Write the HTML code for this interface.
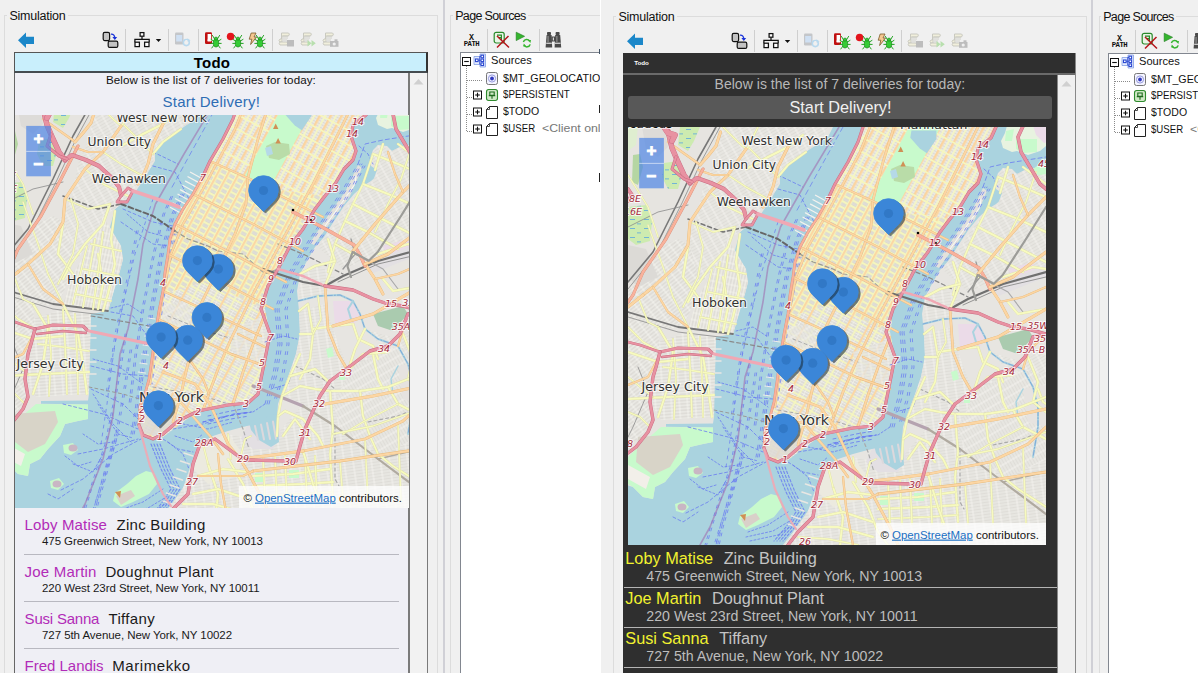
<!DOCTYPE html>
<html><head><meta charset="utf-8"><title>Simulation</title><style>
html,body{margin:0;padding:0}
body{width:1198px;height:673px;overflow:hidden;background:#f0f0f0;font-family:"Liberation Sans",sans-serif;position:relative;color:#000}
.a{position:absolute}
.t{position:absolute;white-space:nowrap;line-height:1}
.ui{font-family:"Liberation Sans",sans-serif;font-size:12.5px;color:#111}
.ln{position:absolute;background:#dcdcdc}
</style></head>
<body>
<div class="a" style="left:0;top:0;width:600px;height:673px;overflow:hidden">
<div class="a" style="left:4px;top:15px;width:434px;height:670px;background:transparent;border:1px solid #dcdcdc;box-sizing:border-box"></div>
<div class="a" style="left:7px;top:10px;width:61px;height:12px;background:#f0f0f0;"></div>
<div class="t " style="left:9.4px;top:10px;font-size:12.5px;color:#111;letter-spacing:-0.236px;">Simulation</div>
<div class="a" style="left:443px;top:0px;width:2px;height:673px;background:#d0d0d6;"></div>
<div class="a" style="left:450px;top:15px;width:160px;height:670px;background:transparent;border:1px solid #dcdcdc;box-sizing:border-box"></div>
<div class="a" style="left:453px;top:10px;width:75px;height:12px;background:#f0f0f0;"></div>
<div class="t " style="left:455.2px;top:10px;font-size:12.5px;color:#111;letter-spacing:-0.669px;">Page Sources</div>
<svg class="a" style="left:18px;top:32px;overflow:visible" width="17" height="17" viewBox="0 0 17 17" ><path d="M0,8.2 L8,0.5 L8,4.8 L16,4.8 L16,12 L8,12 L8,16 Z" fill="#1b87c9"/></svg>
<svg class="a" style="left:102px;top:31px;overflow:visible" width="17" height="17" viewBox="0 0 17 17" ><rect x="1.2" y="1.4" width="6.4" height="8.2" rx="1.5" fill="#c3c3c3" stroke="#111" stroke-width="1.2"/><rect x="6.2" y="10.2" width="9.6" height="6.2" rx="1.5" fill="#c3c3c3" stroke="#111" stroke-width="1.2"/><path d="M9,3.2 Q12.8,3 12.8,7.5" fill="none" stroke="#1a33d8" stroke-width="1.3"/><path d="M10.4,6 L12.8,9 L15.2,6 Z" fill="#1a33d8"/></svg>
<div class="a" style="left:125px;top:29px;width:1px;height:22px;background:#cfcfcf"></div>
<svg class="a" style="left:133px;top:31px;overflow:visible" width="30" height="17" viewBox="0 0 30 17" ><g fill="#fff" stroke="#111" stroke-width="1.25"><path d="M9,5.2 V8.3 M1.9,11.2 V8.3 H16.2 V11.2" fill="none"/><rect x="7.1" y="1.6" width="3.8" height="3.6"/><rect x="2" y="11.2" width="4.4" height="4.4"/><rect x="11.6" y="11.2" width="4.4" height="4.4"/></g><path d="M22.8,8 L28.2,8 L25.5,11 Z" fill="#111"/></svg>
<div class="a" style="left:168px;top:29px;width:1px;height:22px;background:#cfcfcf"></div>
<svg class="a" style="left:174px;top:31px;overflow:visible" width="18" height="17" viewBox="0 0 18 17" ><rect x="1" y="1.5" width="8.5" height="12" rx="1.2" fill="#c4c6c9"/><rect x="2.2" y="4" width="6" height="6.5" fill="#cfe0f3"/><circle cx="12.3" cy="11.6" r="3" fill="none" stroke="#b9d9ee" stroke-width="1.6"/><path d="M13.5,7.2 L16.6,9.5 L13,10.6Z" fill="#b9d9ee"/><rect x="11.4" y="9" width="2" height="2" fill="#f0f0f0"/></svg>
<div class="a" style="left:198px;top:29px;width:1px;height:22px;background:#cfcfcf"></div>
<svg class="a" style="left:204px;top:31px;overflow:visible" width="18" height="17" viewBox="0 0 18 17" ><rect x="1" y="1.2" width="7" height="11.8" rx="1.3" fill="#c01010"/><rect x="3.6" y="3" width="3.6" height="7.5" fill="#fff"/><rect x="3.6" y="8.4" width="4" height="1.6" fill="#fff"/><g stroke="#18a018" stroke-width="0.95" fill="none" stroke-linecap="round"><path d="M10.4,7.6 L8.4,4.4 M13.6,7.6 L15.6,4.4"/><path d="M9.6,10 L7,8.4 M14.4,10 L17,8.4"/><path d="M9.4,12.4 L6.8,12.4 M14.6,12.4 L17.2,12.4"/><path d="M9.8,14.4 L7.8,17 M14.2,14.4 L16.2,17"/></g><ellipse cx="12" cy="11.9" rx="2.7" ry="4.1" fill="#35cc35" stroke="#0c7a0c" stroke-width="0.6"/><circle cx="12" cy="7.6" r="1.6" fill="#35cc35" stroke="#0c7a0c" stroke-width="0.5"/></svg>
<svg class="a" style="left:226px;top:31px;overflow:visible" width="18" height="17" viewBox="0 0 18 17" ><circle cx="4.6" cy="5.5" r="3.8" fill="#e3141c"/><g stroke="#18a018" stroke-width="0.95" fill="none" stroke-linecap="round"><path d="M10.4,7.6 L8.4,4.4 M13.6,7.6 L15.6,4.4"/><path d="M9.6,10 L7,8.4 M14.4,10 L17,8.4"/><path d="M9.4,12.4 L6.8,12.4 M14.6,12.4 L17.2,12.4"/><path d="M9.8,14.4 L7.8,17 M14.2,14.4 L16.2,17"/></g><ellipse cx="12" cy="11.9" rx="2.7" ry="4.1" fill="#35cc35" stroke="#0c7a0c" stroke-width="0.6"/><circle cx="12" cy="7.6" r="1.6" fill="#35cc35" stroke="#0c7a0c" stroke-width="0.5"/></svg>
<svg class="a" style="left:248px;top:31px;overflow:visible" width="18" height="17" viewBox="0 0 18 17" ><path d="M3.2,2 L8,2 L6,6 L8.6,6 L2.6,13.5 L3.8,8.2 L1.2,8.2 Z" fill="#f6c891" stroke="#7a5a2a" stroke-width="0.8"/><g stroke="#18a018" stroke-width="0.95" fill="none" stroke-linecap="round"><path d="M10.4,7.6 L8.4,4.4 M13.6,7.6 L15.6,4.4"/><path d="M9.6,10 L7,8.4 M14.4,10 L17,8.4"/><path d="M9.4,12.4 L6.8,12.4 M14.6,12.4 L17.2,12.4"/><path d="M9.8,14.4 L7.8,17 M14.2,14.4 L16.2,17"/></g><ellipse cx="12" cy="11.9" rx="2.7" ry="4.1" fill="#35cc35" stroke="#0c7a0c" stroke-width="0.6"/><circle cx="12" cy="7.6" r="1.6" fill="#35cc35" stroke="#0c7a0c" stroke-width="0.5"/></svg>
<div class="a" style="left:272px;top:29px;width:1px;height:22px;background:#cfcfcf"></div>
<svg class="a" style="left:278px;top:31px;overflow:visible" width="18" height="17" viewBox="0 0 18 17" ><path d="M3.5,2.0 h7 q1.8,0.6 0,3 h-6.5 v6 h-2 q-2,-1.2 0,-3 h1.5 z" fill="#f1efdc" stroke="#c9c9c0" stroke-width="1"/><path d="M2,11.0 h7 q1.5,1.5 0,3 h-7 q-1.6,-1.5 0,-3z" fill="#f1efdc" stroke="#c9c9c0" stroke-width="1"/><path d="M5,5.0h5 M5,7.0h5 M5,9.0h4" stroke="#c9c9c0" stroke-width="0.8"/><rect x="9" y="9" width="7" height="6.5" fill="#bdbdbd"/></svg>
<svg class="a" style="left:300px;top:31px;overflow:visible" width="18" height="17" viewBox="0 0 18 17" ><path d="M3.5,2.0 h7 q1.8,0.6 0,3 h-6.5 v6 h-2 q-2,-1.2 0,-3 h1.5 z" fill="#f1efdc" stroke="#c9c9c0" stroke-width="1"/><path d="M2,11.0 h7 q1.5,1.5 0,3 h-7 q-1.6,-1.5 0,-3z" fill="#f1efdc" stroke="#c9c9c0" stroke-width="1"/><path d="M5,5.0h5 M5,7.0h5 M5,9.0h4" stroke="#c9c9c0" stroke-width="0.8"/><path d="M7.5,9 L11.5,12.2 L7.5,15.5Z M11.5,9 L15.8,12.2 L11.5,15.5Z" fill="#b8dfae"/></svg>
<svg class="a" style="left:322px;top:31px;overflow:visible" width="18" height="17" viewBox="0 0 18 17" ><path d="M3.5,2.0 h7 q1.8,0.6 0,3 h-6.5 v6 h-2 q-2,-1.2 0,-3 h1.5 z" fill="#f1efdc" stroke="#c9c9c0" stroke-width="1"/><path d="M2,11.0 h7 q1.5,1.5 0,3 h-7 q-1.6,-1.5 0,-3z" fill="#f1efdc" stroke="#c9c9c0" stroke-width="1"/><path d="M5,5.0h5 M5,7.0h5 M5,9.0h4" stroke="#c9c9c0" stroke-width="0.8"/><rect x="8" y="10" width="8.5" height="5.8" fill="#bdbdbd"/><rect x="12.5" y="8.3" width="3" height="2" fill="#bdbdbd"/><circle cx="12.2" cy="13" r="1.6" fill="#f0f0f0"/></svg>
<div class="t" style="left:469px;top:34px;font-family:'Liberation Mono',monospace;font-weight:bold;font-size:8.3px;color:#111">X</div>
<div class="t" style="left:463.8px;top:41px;font-family:'Liberation Mono',monospace;font-weight:bold;font-size:7.3px;color:#111;letter-spacing:-0.58px">PATH</div>
<div class="a" style="left:487px;top:29px;width:1px;height:22px;background:#cfcfcf"></div>
<svg class="a" style="left:493px;top:31px;overflow:visible" width="18" height="17" viewBox="0 0 18 17" ><rect x="1.2" y="1.4" width="10" height="10.6" rx="2" fill="#eaf5e6" stroke="#2a8a2a" stroke-width="1.2"/><path d="M4,4.2 H8.4 V9 M5.8,6.6 H8.4" fill="none" stroke="#2a8a2a" stroke-width="1.2"/><path d="M4,5 L16,16.5 M15.5,5 L4,16.5" stroke="#b4151b" stroke-width="1.5" fill="none"/></svg>
<svg class="a" style="left:515px;top:31px;overflow:visible" width="18" height="17" viewBox="0 0 18 17" ><path d="M1.2,1.2 L9.6,5.3 L1.2,9.6 Z" fill="#35b52e" stroke="#1d7a1d" stroke-width="0.6"/><path d="M8.4,11 A3.4,3.4 0 0 1 14.6,10.2" fill="none" stroke="#35b52e" stroke-width="1.5"/><path d="M15.2,13.4 A3.4,3.4 0 0 1 9,14.2" fill="none" stroke="#35b52e" stroke-width="1.5"/><path d="M13,9.2 L16,9 L15.4,12Z M11.2,15.2 L8.2,15.4 L8.8,12.4Z" fill="#35b52e"/></svg>
<div class="a" style="left:539px;top:29px;width:1px;height:22px;background:#cfcfcf"></div>
<div class="a" style="left:545px;top:31px;width:17px;height:18px;overflow:hidden"><svg width="17" height="18" viewBox="0 0 17 18"><g fill="#4a4a4a"><rect x="2" y="1" width="4" height="3" rx="0.8"/><rect x="10.6" y="1" width="4" height="3" rx="0.8"/><path d="M1.6,4 H6.6 L7.2,16.6 H0.6 Z"/><path d="M10.2,4 H15.2 L16.2,16.6 H9.6 Z"/><rect x="6.4" y="5.5" width="4" height="5" /></g><rect x="1.2" y="11.6" width="5.6" height="1.4" fill="#c8c8c8"/><rect x="10" y="11.6" width="5.6" height="1.4" fill="#c8c8c8"/><rect x="2.4" y="5" width="1.3" height="6" fill="#8a8a8a"/><rect x="11.2" y="5" width="1.3" height="6" fill="#8a8a8a"/><rect x="7.8" y="6.5" width="1.2" height="3" fill="#d8d8d8"/></svg></div>
<div class="a" style="left:14px;top:52px;width:414px;height:21px;background:#c9effc;border:1px solid #555;border-bottom:2px solid #454c50;box-sizing:border-box;border-right:2px solid #333"></div>
<div class="t " style="left:193.7px;top:55px;font-size:15px;color:#000;letter-spacing:0.265px;font-weight:700;">Todo</div>
<div class="a" style="left:14px;top:73px;width:396px;height:600px;background:#efeff5;border-left:1px solid #666;border-right:2px solid #7a7a7a;box-sizing:border-box"></div>
<div class="a" style="left:410px;top:73px;width:18px;height:600px;background:#f2f2f2;border-right:1px solid #7a7a7a;box-sizing:border-box"></div>
<svg class="a" style="left:413px;top:78px" width="11" height="7"><path d="M0.5,6.5 L5.5,1 L10.5,6.5Z" fill="#d0d0d0"/></svg>
<div class="t " style="left:106px;top:74px;font-size:11.6px;color:#111;letter-spacing:0.084px;">Below is the list of 7 deliveries for today:</div>
<div class="t " style="left:162.6px;top:94px;font-size:15px;color:#2e6db4;letter-spacing:0.227px;">Start Delivery!</div>
<div class="a" style="left:15px;top:115px;width:394px;height:393px;overflow:hidden"><svg width="394" height="393" viewBox="12 11 394 393" font-family="DejaVu Sans, Liberation Sans, sans-serif" style="display:block"><defs>
<pattern id="gma" width="9.6" height="2.8" patternUnits="userSpaceOnUse" patternTransform="rotate(28.5) translate(4.5,2)">
<rect width="9.6" height="2.8" fill="#f7f6ee"/>
<rect x="2.4" y="0.5" width="2.9" height="1.8" fill="#dcdad4"/>
<rect x="6.7" y="0.5" width="2.8" height="1.8" fill="#dcdad4"/>
<rect x="5.2" y="0" width="1.6" height="2.8" fill="#f6f7be"/>
<rect x="0" y="0" width="2.5" height="2.8" fill="#fbd5a0"/>
</pattern>
<pattern id="gmma" width="9.4" height="5.6" patternUnits="userSpaceOnUse" patternTransform="rotate(28.5) translate(4.5,2)">
<rect width="9.4" height="5.6" fill="#f5f6bd"/>
<rect x="3.1" y="1.2" width="5.3" height="3.3" fill="#d9d7d1"/><rect x="3.1" y="2.6" width="5.3" height="0.5" fill="#ecebe6"/>
<rect x="0" y="0" width="2.1" height="5.6" fill="#fbd7a4"/>
</pattern>
<pattern id="gm2a" width="18.8" height="8.4" patternUnits="userSpaceOnUse" patternTransform="rotate(28.5) translate(4.5,2)">
<rect width="18.8" height="8.4" fill="#dedcd6"/>
<rect x="0" y="2.9" width="18.8" height="0.6" fill="#f6f5f0"/><rect x="0" y="5.7" width="18.8" height="0.6" fill="#f6f5f0"/>
<rect x="4.7" y="0" width="0.6" height="8.4" fill="#f6f5f0"/><rect x="14.1" y="0" width="0.6" height="8.4" fill="#f6f5f0"/>
<rect x="0" y="0" width="18.8" height="1.6" fill="#f6f7be"/>
<rect x="9.4" y="0" width="1.8" height="8.4" fill="#f6f7be"/>
<rect x="0" y="0" width="2.1" height="8.4" fill="#fbd7a4"/>
</pattern>
<pattern id="gqa" width="8" height="3" patternUnits="userSpaceOnUse" patternTransform="rotate(-30)">
<rect width="8" height="3" fill="#f8f7f3"/>
<rect x="0.4" y="0.35" width="7.2" height="2.3" fill="#dfddd8"/>
</pattern>
<pattern id="gba" width="9" height="3" patternUnits="userSpaceOnUse" patternTransform="rotate(-8)">
<rect width="9" height="3" fill="#f8f7f3"/>
<rect x="0.4" y="0.35" width="8.2" height="2.3" fill="#dfddd8"/>
</pattern>
<pattern id="gwa" width="8" height="3" patternUnits="userSpaceOnUse" patternTransform="rotate(60)">
<rect width="8" height="3" fill="#f8f7f3"/>
<rect x="0.4" y="0.35" width="7.2" height="2.3" fill="#dfddd8"/>
</pattern>
<pattern id="gja" width="8" height="3.2" patternUnits="userSpaceOnUse" patternTransform="rotate(-4)">
<rect width="8" height="3.2" fill="#f8f7f3"/>
<rect x="0.4" y="0.35" width="7.2" height="2.5" fill="#dfddd8"/>
</pattern>
<pattern id="gjwa" width="8" height="3.2" patternUnits="userSpaceOnUse" patternTransform="rotate(-38)">
<rect width="8" height="3.2" fill="#f8f7f3"/>
<rect x="0.4" y="0.35" width="7.2" height="2.5" fill="#dfddd8"/>
</pattern>
<pattern id="gha" width="7" height="3.2" patternUnits="userSpaceOnUse" patternTransform="rotate(102)">
<rect width="7" height="3.2" fill="#f8f7f0"/>
<rect x="0.4" y="0.4" width="6.2" height="2.4" fill="#e0ded8"/>
</pattern>
<pattern id="weta" width="14" height="9" patternUnits="userSpaceOnUse">
<rect width="14" height="9" fill="#cdebb0"/>
<rect x="2" y="2" width="5" height="0.8" fill="#5aa7e0"/>
<rect x="9" y="6.5" width="4" height="0.8" fill="#5aa7e0"/>
</pattern>
</defs>
<rect x="-5" y="-5" width="430" height="430" fill="#aad3df"/>
<polygon points="-5,-5 205,-5 205,0 200,10 190,17 175,25 162,35 152,45 152,57 147,65 143,72 133,87 120,99 112,105 107,123 107,125 110,132 117,140 120,155 117,167 112,182 107,200 105,207 88,210 86,225 86,242 85,260 86,280 86,290 85,296.5 38,297 38,299.8 85,300.5 85,315 75,317 62,320 57,332 45,345 37,355 27,360 25,372 15,370 5,360 -5,357" fill="#e6e4e0" />
<polygon points="85,0 200,0 190,17 162,35 152,45 150,60 140,75 125,92 112,105 100,112 88,140 70,160 50,190 30,200 20,175 50,130 68,95 75,60 88,30" fill="url(#gqa)" />
<polygon points="88,140 100,112 108,125 118,142 120,155 116,170 110,190 105,207 80,205 60,200 70,170" fill="url(#gha)" />
<polygon points="30,215 60,205 88,210 86,290 33,293 25,280 23,250" fill="url(#gja)" />
<polygon points="0,205 30,200 32,225 23,260 25,293 10,312 0,318" fill="url(#gjwa)" />
<polygon points="28,122 50,112 62,118 70,150 62,185 55,200 30,203 0,215 0,165" fill="url(#gjwa)" />
<polygon points="52,0 72,0 66,14 60,24 50,18" fill="url(#weta)" />
<polygon points="36,36 50,34 54,48 50,62 40,62 34,50" fill="url(#weta)" />
<polygon points="0,80 18,78 24,95 22,114 8,118 0,112" fill="url(#weta)" />
<polygon points="5,28 12,27 15,40 10,58 4,55" fill="#b5d6a3" />
<polygon points="0,0 10,0 8,18 0,24" fill="#dfeed0" />
<polygon points="0,118 18,122 30,150 10,160 0,150" fill="#dcdad6" />
<polygon points="14,0 36,0 40,20 30,30 18,22" fill="#dddbd8" />
<polygon points="33,300 85,300.5 85,315 75,317 62,320 57,332 45,345 37,355 27,360 25,372 15,370 5,360 0,357 0,330 10,320" fill="#c8facc" />
<polygon points="10,310 52,307 55,318 42,340 25,348 8,335" fill="#d8d4c8" />
<polygon points="0,338 22,350 18,362 0,352" fill="#f2efe9" />
<polygon points="60,341 70,339 75,346 68,351 61,349" fill="#c8facc" />
<ellipse cx="70" cy="344" rx="4.5" ry="3.5" fill="#c9b6c4"/>
<polygon points="47,377 56,374 61,380 55,386 48,384" fill="#c8facc" />
<ellipse cx="54" cy="380" rx="4.5" ry="3.5" fill="#c9b6c4"/>
<polygon points="133,372 143,367 151,369 154,380 146,390 130,398 118,403 110,397 112,389 124,380" fill="#c8facc" />
<polygon points="113,392 128,386 132,392 118,401" fill="#d9d0c9" />
<polygon points="112,388 118,387 117,394" fill="#d08f55" />
<polygon points="235,-5 235,0 230,15 220,35 207,57 200,72 190,90 180,105 172,120 167,135 165,150 162,168 160,187 156,207 152,232 149,255 146,275 142,290 137,300 135,320 139,331 150,336 160,333 175,317 195,307 225,301 245,299 255,290 258,275 262,255 267,230 258,205 265,182 275,165 287,142 300,125 312,105 322,92 332,80 341,65 350,56 353,47 348,32 350,21 363,11 368,0 368,-5" fill="url(#gma)" />
<polygon points="160,190 200,178 262,205 267,230 262,255 255,290 245,299 195,307 160,333 150,336 139,331 135,320 137,300 146,275 152,232" fill="url(#gm2a)" />
<polygon points="160,200 185,196 190,228 170,245 152,240" fill="url(#gwa)" opacity="0.75"/>
<polygon points="225,225 262,212 266,232 262,255 240,262 228,245" fill="url(#gba)" opacity="0.8"/>
<polygon points="140,295 160,290 175,315 160,332 140,330 136,315" fill="#dddad4" opacity="0.8"/>
<polygon points="207,57 242,71.5 266.5,84.5 322,92 312,105 300,125 287,142 275,165 265,182 262,205 200,178 160,190 165,150 172,120 190,90" fill="url(#gmma)" />
<clipPath id="cma"><polygon points="235,-5 235,0 230,15 220,35 207,57 200,72 190,90 180,105 172,120 167,135 165,150 162,168 160,187 156,207 152,232 149,255 146,275 142,290 137,300 135,320 139,331 150,336 160,333 175,317 195,307 225,301 245,299 255,290 258,275 262,255 267,230 258,205 265,182 275,165 287,142 300,125 312,105 322,92 332,80 341,65 350,56 353,47 348,32 350,21 363,11 368,0 368,-5"/></clipPath>
<g clip-path="url(#cma)"><polyline points="168.2,18.9 352.7,119.1" fill="none" stroke="#f6f7be" stroke-width="1.7" stroke-linejoin="round" stroke-linecap="round" /><polyline points="174.4,7.5 359.0,107.7" fill="none" stroke="#f6f7be" stroke-width="1.7" stroke-linejoin="round" stroke-linecap="round" /><polyline points="180.6,-3.9 365.2,96.3" fill="none" stroke="#f6f7be" stroke-width="1.7" stroke-linejoin="round" stroke-linecap="round" /><polyline points="186.8,-15.3 371.4,84.8" fill="none" stroke="#f6f7be" stroke-width="1.7" stroke-linejoin="round" stroke-linecap="round" /><polyline points="193.1,-26.7 377.7,73.4" fill="none" stroke="#f6f7be" stroke-width="1.7" stroke-linejoin="round" stroke-linecap="round" /><polyline points="199.3,-38.2 383.9,62.0" fill="none" stroke="#f6f7be" stroke-width="1.7" stroke-linejoin="round" stroke-linecap="round" /><polyline points="205.5,-49.6 390.1,50.6" fill="none" stroke="#f6f7be" stroke-width="1.7" stroke-linejoin="round" stroke-linecap="round" /></g>
<polygon points="242,71.5 266.5,84.5 315.3,-5 283.7,-5" fill="#c8facc" />
<polygon points="263,42 272,38 286,40 287,50 276,56 266,54" fill="#b9dca8" />
<polygon points="262,44 268,42 270,50 264,52" fill="#b5d9e8" />
<polygon points="283.4,3.6 308.4,3.6 308.4,11.9 298.9,26.2 291.8,21.4 282.3,10.7" fill="#aad3df" />
<polygon points="270,25 275.4,25 272.7,19.5" fill="#d08f55" />
<polygon points="272.4,39.5 277.8,39.5 275.1,34" fill="#d08f55" />
<polygon points="355,61 359,64 347,92 330,115 311,141 307,139 326,110 342,88" fill="#e4e2dc" />
<polyline points="353,72 352,80 338,100 322,122" fill="none" stroke="#ffffff" stroke-width="0.8" stroke-linejoin="round" stroke-linecap="round" />
<polygon points="380,-5 377,6 373,14 375,21 384,25 389,24 400,28 412,24 418,19 425,15 425,-5" fill="#e8f3e0" />
<polygon points="388,12 409,12 409,25 395,26 388,22" fill="#c8facc" />
<polygon points="378,4 386,2 384,14 377,14" fill="#c8facc" />
<polygon points="404,-5 425,-5 425,14 416,16 408,8" fill="#ebdbe8" />
<polygon points="425,37 418,39 409,41 397,43 389,47 384,42 375,41 370,46 367,55 368,62 374,66 375,71 368,77 360,82 351,90 341,102 331,117 321,133 312,143 305,155 297,170 294,187 296,207 297,230 293,250 287,268 279,288 275,300 274,314 270,320 262,318 258,330 248,332 244,322 236,324 225,327 210,332 195,340 190,355 186,372 180,384 172,398 163,408 155,418 150,425 425,425" fill="#e7e5e1" />
<polygon points="425,37 397,43 389,47 375,41 367,55 374,66 370,77 354,90 344,102 372,115 400,95 425,88" fill="url(#gqa)" />
<polygon points="344,102 372,115 400,95 425,88 425,140 380,150 340,165 315,143 334,117" fill="url(#gqa)" />
<polygon points="297,170 315,160 335,175 322,190 296,197" fill="url(#gba)" />
<polygon points="296,207 322,200 330,225 345,265 320,292 300,300 279,290 293,250 297,230" fill="url(#gba)" />
<polygon points="300,300 320,292 345,265 375,240 418,250 425,260 425,425 150,425 163,408 180,384 190,355 197,340 225,330 250,335 274,330" fill="url(#gba)" />
<polygon points="350,262 395,243 425,250 425,330 380,350 340,330 330,300" fill="url(#gwa)" />
<polygon points="362,225 395,235 425,215 425,250 395,243 375,238" fill="url(#gqa)" />
<polygon points="330,197 350,197 357,212 350,222 332,222" fill="#ebdbe8" />
<polygon points="380,142 405,135 410,152 388,160" fill="#ebdbe8" />
<polygon points="370,210 400,202 405,210 390,227 375,222" fill="#aacbaf" />
<polygon points="362,160 418,138 418,150 368,170" fill="#e3e0e3" />
<polygon points="395,262 418,258 418,300 400,295" fill="#e6e3e0" />
<polygon points="244,322 262,318 270,320 274,314 278,330 270,345 250,345 238,335" fill="#e3dfe3" />
<polygon points="246,318 274,310 276,338 268,343 256,336 248,326" fill="#aad3df" />
<polyline points="252,322.0 255,336.0" fill="none" stroke="#dcd8dc" stroke-width="2" stroke-linejoin="round" stroke-linecap="round" />
<polyline points="258,320.5 261,335.5" fill="none" stroke="#dcd8dc" stroke-width="2" stroke-linejoin="round" stroke-linecap="round" />
<polyline points="264,319.0 267,335.0" fill="none" stroke="#dcd8dc" stroke-width="2" stroke-linejoin="round" stroke-linecap="round" />
<polyline points="270,317.5 273,334.5" fill="none" stroke="#dcd8dc" stroke-width="2" stroke-linejoin="round" stroke-linecap="round" />
<polygon points="195,340 225,330 240,350 235,372 205,380 190,365" fill="#eceadf" />
<polygon points="252,369 262,369 262,378 252,378" fill="#c8facc" />
<polygon points="286,366 296,366 296,374 286,374" fill="#c8facc" />
<polygon points="336,268 342,268 342,276 336,276" fill="#c8facc" />
<polygon points="323,245 329,243 331,252 325,254" fill="#c8facc" />
<polygon points="409,39 425,36 425,46 412,48 400,46" fill="#c8facc" />
<polyline points="178.0,90 168.0,112 157.0,150 148.0,200 140.0,250 133.0,300 128.0,330" fill="none" stroke="#6a7df0" stroke-width="0.9" stroke-linejoin="round" stroke-linecap="round" stroke-dasharray="3.5 5.5" stroke-dashoffset="0" stroke-linecap="butt" opacity="0.85"/>
<polyline points="179.6,90 169.6,112 158.6,150 149.6,200 141.6,250 134.6,300 129.6,330" fill="none" stroke="#6a7df0" stroke-width="0.9" stroke-linejoin="round" stroke-linecap="round" stroke-dasharray="3.5 5.5" stroke-dashoffset="0" stroke-linecap="butt" opacity="0.85"/>
<polyline points="181.2,90 171.2,112 160.2,150 151.2,200 143.2,250 136.2,300 131.2,330" fill="none" stroke="#6a7df0" stroke-width="0.9" stroke-linejoin="round" stroke-linecap="round" stroke-dasharray="3.5 5.5" stroke-dashoffset="0" stroke-linecap="butt" opacity="0.85"/>
<polyline points="170.0,88 160.0,110 150.0,150 140.0,200 132.0,250 126.0,300" fill="none" stroke="#6a7df0" stroke-width="0.9" stroke-linejoin="round" stroke-linecap="round" stroke-dasharray="3.5 5.5" stroke-dashoffset="4" stroke-linecap="butt" opacity="0.85"/>
<polyline points="171.6,88 161.6,110 151.6,150 141.6,200 133.6,250 127.6,300" fill="none" stroke="#6a7df0" stroke-width="0.9" stroke-linejoin="round" stroke-linecap="round" stroke-dasharray="3.5 5.5" stroke-dashoffset="4" stroke-linecap="butt" opacity="0.85"/>
<polyline points="170.0,130 160.0,180 153.0,230 146.0,280" fill="none" stroke="#6a7df0" stroke-width="0.9" stroke-linejoin="round" stroke-linecap="round" stroke-dasharray="3 6" stroke-dashoffset="2" stroke-linecap="butt" opacity="0.85"/>
<polyline points="171.5,130 161.5,180 154.5,230 147.5,280" fill="none" stroke="#6a7df0" stroke-width="0.9" stroke-linejoin="round" stroke-linecap="round" stroke-dasharray="3 6" stroke-dashoffset="2" stroke-linecap="butt" opacity="0.85"/>
<polyline points="173.0,130 163.0,180 156.0,230 149.0,280" fill="none" stroke="#6a7df0" stroke-width="0.9" stroke-linejoin="round" stroke-linecap="round" stroke-dasharray="3 6" stroke-dashoffset="2" stroke-linecap="butt" opacity="0.85"/>
<polyline points="150.0,95 132.0,150 120.0,200 110.0,250 104.0,300 98.0,340" fill="none" stroke="#6a7df0" stroke-width="0.9" stroke-linejoin="round" stroke-linecap="round" stroke-dasharray="3 5" stroke-dashoffset="0" stroke-linecap="butt" opacity="0.85"/>
<polyline points="135.0,120 125.0,170 112.0,230 103.0,290" fill="none" stroke="#6a7df0" stroke-width="0.9" stroke-linejoin="round" stroke-linecap="round" stroke-dasharray="3 7" stroke-dashoffset="3" stroke-linecap="butt" opacity="0.85"/>
<polyline points="136.6,120 126.6,170 113.6,230 104.6,290" fill="none" stroke="#6a7df0" stroke-width="0.9" stroke-linejoin="round" stroke-linecap="round" stroke-dasharray="3 7" stroke-dashoffset="3" stroke-linecap="butt" opacity="0.85"/>
<polyline points="122.0,230 112.0,290 102.0,340 87.0,385 77.0,418" fill="none" stroke="#6a7df0" stroke-width="0.9" stroke-linejoin="round" stroke-linecap="round" stroke-dasharray="3 5" stroke-dashoffset="0" stroke-linecap="butt" opacity="0.85"/>
<polyline points="123.6,230 113.6,290 103.6,340 88.6,385 78.6,418" fill="none" stroke="#6a7df0" stroke-width="0.9" stroke-linejoin="round" stroke-linecap="round" stroke-dasharray="3 5" stroke-dashoffset="0" stroke-linecap="butt" opacity="0.85"/>
<polyline points="128.0,240 120.0,290 112.0,335 98.0,380 86.0,418" fill="none" stroke="#6a7df0" stroke-width="0.9" stroke-linejoin="round" stroke-linecap="round" stroke-dasharray="3 6" stroke-dashoffset="3" stroke-linecap="butt" opacity="0.85"/>
<polyline points="129.6,240 121.6,290 113.6,335 99.6,380 87.6,418" fill="none" stroke="#6a7df0" stroke-width="0.9" stroke-linejoin="round" stroke-linecap="round" stroke-dasharray="3 6" stroke-dashoffset="3" stroke-linecap="butt" opacity="0.85"/>
<polyline points="112.0,330 102.0,365 92.0,400 88.0,418" fill="none" stroke="#6a7df0" stroke-width="0.9" stroke-linejoin="round" stroke-linecap="round" stroke-dasharray="3 5" stroke-dashoffset="1" stroke-linecap="butt" opacity="0.85"/>
<polyline points="113.6,330 103.6,365 93.6,400 89.6,418" fill="none" stroke="#6a7df0" stroke-width="0.9" stroke-linejoin="round" stroke-linecap="round" stroke-dasharray="3 5" stroke-dashoffset="1" stroke-linecap="butt" opacity="0.85"/>
<polyline points="115.2,330 105.2,365 95.2,400 91.2,418" fill="none" stroke="#6a7df0" stroke-width="0.9" stroke-linejoin="round" stroke-linecap="round" stroke-dasharray="3 5" stroke-dashoffset="1" stroke-linecap="butt" opacity="0.85"/>
<polyline points="150,62 172,68 186,95" fill="none" stroke="#6a7df0" stroke-width="0.9" stroke-linejoin="round" stroke-linecap="round" stroke-dasharray="3 2.5" opacity="0.9"/>
<polyline points="150,48 175,60" fill="none" stroke="#6a7df0" stroke-width="0.9" stroke-linejoin="round" stroke-linecap="round" stroke-dasharray="3 2.5" opacity="0.9"/>
<polyline points="215,0 190,45 168,85" fill="none" stroke="#6a7df0" stroke-width="0.8" stroke-linejoin="round" stroke-linecap="round" stroke-dasharray="5 4" opacity="0.9"/>
<polyline points="120,105 150,118 170,122" fill="none" stroke="#6a7df0" stroke-width="0.9" stroke-linejoin="round" stroke-linecap="round" stroke-dasharray="3 2.5" opacity="0.9"/>
<polyline points="118,118 150,140 166,142" fill="none" stroke="#6a7df0" stroke-width="0.9" stroke-linejoin="round" stroke-linecap="round" stroke-dasharray="3 2.5" opacity="0.9"/>
<polyline points="124,110 145,128 160,132" fill="none" stroke="#6a7df0" stroke-width="0.9" stroke-linejoin="round" stroke-linecap="round" stroke-dasharray="2 2" opacity="0.9"/>
<polyline points="108,208 130,212 150,240" fill="none" stroke="#6a7df0" stroke-width="0.9" stroke-linejoin="round" stroke-linecap="round" stroke-dasharray="3 2.5" opacity="0.9"/>
<polyline points="88,262 120,270 145,272" fill="none" stroke="#6a7df0" stroke-width="0.9" stroke-linejoin="round" stroke-linecap="round" stroke-dasharray="3 2.5" opacity="0.9"/>
<polyline points="108,204 125,200 140,210" fill="none" stroke="#6a7df0" stroke-width="0.9" stroke-linejoin="round" stroke-linecap="round" stroke-dasharray="2 2" opacity="0.9"/>
<polyline points="88,285 120,300 138,318" fill="none" stroke="#6a7df0" stroke-width="0.9" stroke-linejoin="round" stroke-linecap="round" stroke-dasharray="3 2.5" opacity="0.9"/>
<polyline points="60,300 100,310 135,325" fill="none" stroke="#6a7df0" stroke-width="0.9" stroke-linejoin="round" stroke-linecap="round" stroke-dasharray="3 2.5" opacity="0.9"/>
<polyline points="90,255 115,262 140,280" fill="none" stroke="#6a7df0" stroke-width="0.9" stroke-linejoin="round" stroke-linecap="round" stroke-dasharray="2 2" opacity="0.9"/>
<polyline points="75,350 100,345 135,335" fill="none" stroke="#6a7df0" stroke-width="0.9" stroke-linejoin="round" stroke-linecap="round" stroke-dasharray="3 2.5" opacity="0.9"/>
<polyline points="58,386 80,375 110,350 138,335" fill="none" stroke="#6a7df0" stroke-width="0.9" stroke-linejoin="round" stroke-linecap="round" stroke-dasharray="3 2.5" opacity="0.9"/>
<polyline points="45,390 55,395 70,385" fill="none" stroke="#6a7df0" stroke-width="0.9" stroke-linejoin="round" stroke-linecap="round" stroke-dasharray="3 2.5" opacity="0.9"/>
<polyline points="95,300 115,330 130,334" fill="none" stroke="#6a7df0" stroke-width="0.9" stroke-linejoin="round" stroke-linecap="round" stroke-dasharray="2 2" opacity="0.9"/>
<polyline points="90,290 110,320 128,338" fill="none" stroke="#6a7df0" stroke-width="0.9" stroke-linejoin="round" stroke-linecap="round" stroke-dasharray="2 2" opacity="0.9"/>
<polyline points="80,330 95,340 110,338" fill="none" stroke="#6a7df0" stroke-width="0.9" stroke-linejoin="round" stroke-linecap="round" stroke-dasharray="2 2" opacity="0.9"/>
<polyline points="70,360 90,368 100,350" fill="none" stroke="#6a7df0" stroke-width="0.9" stroke-linejoin="round" stroke-linecap="round" stroke-dasharray="2 2" opacity="0.9"/>
<polyline points="62,352 75,362 88,358" fill="none" stroke="#6a7df0" stroke-width="0.9" stroke-linejoin="round" stroke-linecap="round" stroke-dasharray="2 2" opacity="0.9"/>
<polyline points="148.0,340 158.0,365 168.0,385 158.0,400 146.0,414" fill="none" stroke="#6a7df0" stroke-width="1.1" stroke-linejoin="round" stroke-linecap="round" stroke-dasharray="2.5 2" stroke-dashoffset="0" stroke-linecap="butt" opacity="0.85"/>
<polyline points="151.0,340 161.0,365 171.0,385 161.0,400 149.0,414" fill="none" stroke="#6a7df0" stroke-width="1.1" stroke-linejoin="round" stroke-linecap="round" stroke-dasharray="2.5 2" stroke-dashoffset="0" stroke-linecap="butt" opacity="0.85"/>
<polyline points="154.0,340 164.0,365 174.0,385 164.0,400 152.0,414" fill="none" stroke="#6a7df0" stroke-width="1.1" stroke-linejoin="round" stroke-linecap="round" stroke-dasharray="2.5 2" stroke-dashoffset="0" stroke-linecap="butt" opacity="0.85"/>
<polyline points="157.0,340 167.0,365 177.0,385 167.0,400 155.0,414" fill="none" stroke="#6a7df0" stroke-width="1.1" stroke-linejoin="round" stroke-linecap="round" stroke-dasharray="2.5 2" stroke-dashoffset="0" stroke-linecap="butt" opacity="0.85"/>
<polyline points="120,405 140,398 160,385" fill="none" stroke="#6a7df0" stroke-width="0.9" stroke-linejoin="round" stroke-linecap="round" stroke-dasharray="2 2" opacity="0.9"/>
<polyline points="118,410 145,404 165,392" fill="none" stroke="#6a7df0" stroke-width="0.9" stroke-linejoin="round" stroke-linecap="round" stroke-dasharray="2 2" opacity="0.9"/>
<polyline points="122,414 150,408 168,396" fill="none" stroke="#6a7df0" stroke-width="0.9" stroke-linejoin="round" stroke-linecap="round" stroke-dasharray="2 2" opacity="0.9"/>
<polyline points="160,335 175,345 190,348" fill="none" stroke="#6a7df0" stroke-width="0.9" stroke-linejoin="round" stroke-linecap="round" stroke-dasharray="3 2.5" opacity="0.9"/>
<polyline points="170,325 200,320 225,312" fill="none" stroke="#6a7df0" stroke-width="0.9" stroke-linejoin="round" stroke-linecap="round" stroke-dasharray="3 2.5" opacity="0.9"/>
<polyline points="180,320 205,325 230,318" fill="none" stroke="#6a7df0" stroke-width="0.9" stroke-linejoin="round" stroke-linecap="round" stroke-dasharray="2 2" opacity="0.9"/>
<polyline points="165,338 180,350 186,365" fill="none" stroke="#6a7df0" stroke-width="0.9" stroke-linejoin="round" stroke-linecap="round" stroke-dasharray="2 2" opacity="0.9"/>
<polyline points="172,332 190,338 200,330" fill="none" stroke="#6a7df0" stroke-width="0.9" stroke-linejoin="round" stroke-linecap="round" stroke-dasharray="2 2" opacity="0.9"/>
<polyline points="200,318 225,312 248,308" fill="none" stroke="#6a7df0" stroke-width="0.9" stroke-linejoin="round" stroke-linecap="round" stroke-dasharray="3 4" stroke-dashoffset="0" stroke-linecap="butt" opacity="0.85"/>
<polyline points="200,318 225,312 248,308" fill="none" stroke="#6a7df0" stroke-width="0.9" stroke-linejoin="round" stroke-linecap="round" stroke-dasharray="3 4" stroke-dashoffset="0" stroke-linecap="butt" opacity="0.85"/>
<polyline points="200,318 225,312 248,308" fill="none" stroke="#6a7df0" stroke-width="0.9" stroke-linejoin="round" stroke-linecap="round" stroke-dasharray="3 4" stroke-dashoffset="0" stroke-linecap="butt" opacity="0.85"/>
<polyline points="205,312 228,307 246,304" fill="none" stroke="#6a7df0" stroke-width="1" stroke-linejoin="round" stroke-linecap="round" stroke-dasharray="3 3" stroke-dashoffset="0" stroke-linecap="butt" opacity="0.85"/>
<polyline points="205,316 228,311 246,308" fill="none" stroke="#6a7df0" stroke-width="1" stroke-linejoin="round" stroke-linecap="round" stroke-dasharray="3 3" stroke-dashoffset="0" stroke-linecap="butt" opacity="0.85"/>
<polyline points="205,320 228,315 246,312" fill="none" stroke="#6a7df0" stroke-width="1" stroke-linejoin="round" stroke-linecap="round" stroke-dasharray="3 3" stroke-dashoffset="0" stroke-linecap="butt" opacity="0.85"/>
<polyline points="262,300 270,270 275,240 272,205 285,170 300,145 320,115 340,85 355,60" fill="none" stroke="#6a7df0" stroke-width="0.9" stroke-linejoin="round" stroke-linecap="round" stroke-dasharray="3.5 5" stroke-dashoffset="0" stroke-linecap="butt" opacity="0.85"/>
<polyline points="264,300 272,270 277,240 274,205 287,170 302,145 322,115 342,85 357,60" fill="none" stroke="#6a7df0" stroke-width="0.9" stroke-linejoin="round" stroke-linecap="round" stroke-dasharray="3.5 5" stroke-dashoffset="0" stroke-linecap="butt" opacity="0.85"/>
<polyline points="266,300 274,270 279,240 276,205 289,170 304,145 324,115 344,85 359,60" fill="none" stroke="#6a7df0" stroke-width="0.9" stroke-linejoin="round" stroke-linecap="round" stroke-dasharray="3.5 5" stroke-dashoffset="0" stroke-linecap="butt" opacity="0.85"/>
<polyline points="270,300 279,270 284,240 282,205 293,172 308,147 328,117 346,88 360,62" fill="none" stroke="#6a7df0" stroke-width="0.9" stroke-linejoin="round" stroke-linecap="round" stroke-dasharray="3 6" stroke-dashoffset="3" stroke-linecap="butt" opacity="0.85"/>
<polyline points="272,300 281,270 286,240 284,205 295,172 310,147 330,117 348,88 362,62" fill="none" stroke="#6a7df0" stroke-width="0.9" stroke-linejoin="round" stroke-linecap="round" stroke-dasharray="3 6" stroke-dashoffset="3" stroke-linecap="butt" opacity="0.85"/>
<polyline points="355,60 362,40 380,36 418,30" fill="none" stroke="#6a7df0" stroke-width="0.9" stroke-linejoin="round" stroke-linecap="round" stroke-dasharray="4 3" opacity="0.9"/>
<polyline points="356,42 365,50 370,60" fill="none" stroke="#6a7df0" stroke-width="0.9" stroke-linejoin="round" stroke-linecap="round" stroke-dasharray="3 2.5" opacity="0.9"/>
<polyline points="230,310 250,308 262,300" fill="none" stroke="#6a7df0" stroke-width="0.9" stroke-linejoin="round" stroke-linecap="round" stroke-dasharray="2 2" opacity="0.9"/>
<polyline points="268,285 285,280 292,262" fill="none" stroke="#6a7df0" stroke-width="0.9" stroke-linejoin="round" stroke-linecap="round" stroke-dasharray="2 2" opacity="0.9"/>
<polyline points="262,238 280,232 294,235" fill="none" stroke="#6a7df0" stroke-width="0.9" stroke-linejoin="round" stroke-linecap="round" stroke-dasharray="2 2" opacity="0.9"/>
<polyline points="295,197 315,192 337,191 350,197 357,210 362,225 375,235 395,242 405,260 410,280 410,300 405,330" fill="none" stroke="#aad3df" stroke-width="2" stroke-linejoin="round" stroke-linecap="round" />
<polyline points="295,197 315,192 337,191 350,197 357,210 362,225 375,235 395,242 405,260 410,280 410,300 405,330" fill="none" stroke="#7aa5d8" stroke-width="0.9" stroke-linejoin="round" stroke-linecap="round" stroke-dasharray="5 2 1 2"/>
<polyline points="350,197 345,205 348,215" fill="none" stroke="#aad3df" stroke-width="2" stroke-linejoin="round" stroke-linecap="round" />
<polyline points="395,262 388,275 390,290" fill="none" stroke="#aad3df" stroke-width="1.5" stroke-linejoin="round" stroke-linecap="round" />
<polyline points="211,0 181,50 152.5,100 140,140 135,175 125,225 117,250 110,312 100,355 82,400 72,418" fill="none" stroke="#a070b0" stroke-width="1.6" stroke-linejoin="round" stroke-linecap="round" opacity="0.6"/>
<polyline points="198.0,74.0 187.5,68.3" fill="none" stroke="#f4f2ee" stroke-width="1.3" stroke-linejoin="round" stroke-linecap="round" />
<polyline points="195.5,78.4 185.0,72.7" fill="none" stroke="#f4f2ee" stroke-width="1.3" stroke-linejoin="round" stroke-linecap="round" />
<polyline points="193.0,82.8 182.5,77.1" fill="none" stroke="#f4f2ee" stroke-width="1.3" stroke-linejoin="round" stroke-linecap="round" />
<polyline points="190.5,87.2 180.0,81.5" fill="none" stroke="#f4f2ee" stroke-width="1.3" stroke-linejoin="round" stroke-linecap="round" />
<polyline points="188.0,91.6 177.5,85.9" fill="none" stroke="#f4f2ee" stroke-width="1.3" stroke-linejoin="round" stroke-linecap="round" />
<polyline points="185.5,96.0 175.0,90.3" fill="none" stroke="#f4f2ee" stroke-width="1.3" stroke-linejoin="round" stroke-linecap="round" />
<polyline points="183.0,100.4 172.5,94.7" fill="none" stroke="#f4f2ee" stroke-width="1.3" stroke-linejoin="round" stroke-linecap="round" />
<polyline points="180.5,104.80000000000001 170.0,99.1" fill="none" stroke="#f4f2ee" stroke-width="1.3" stroke-linejoin="round" stroke-linecap="round" />
<polyline points="178.0,109.2 167.5,103.5" fill="none" stroke="#f4f2ee" stroke-width="1.3" stroke-linejoin="round" stroke-linecap="round" />
<polyline points="152.0,215 145.0,214" fill="none" stroke="#f0eeea" stroke-width="1.2" stroke-linejoin="round" stroke-linecap="round" />
<polyline points="150.4,224 143.4,223" fill="none" stroke="#f0eeea" stroke-width="1.2" stroke-linejoin="round" stroke-linecap="round" />
<polyline points="148.8,233 141.8,232" fill="none" stroke="#f0eeea" stroke-width="1.2" stroke-linejoin="round" stroke-linecap="round" />
<polyline points="147.2,242 140.2,241" fill="none" stroke="#f0eeea" stroke-width="1.2" stroke-linejoin="round" stroke-linecap="round" />
<polyline points="145.6,251 138.6,250" fill="none" stroke="#f0eeea" stroke-width="1.2" stroke-linejoin="round" stroke-linecap="round" />
<polyline points="144.0,260 137.0,259" fill="none" stroke="#f0eeea" stroke-width="1.2" stroke-linejoin="round" stroke-linecap="round" />
<polyline points="142.4,269 135.4,268" fill="none" stroke="#f0eeea" stroke-width="1.2" stroke-linejoin="round" stroke-linecap="round" />
<polyline points="190.0,352 181.0,349" fill="none" stroke="#e9e7e3" stroke-width="1.6" stroke-linejoin="round" stroke-linecap="round" />
<polyline points="186.5,360 177.5,357" fill="none" stroke="#e9e7e3" stroke-width="1.6" stroke-linejoin="round" stroke-linecap="round" />
<polyline points="183.0,368 174.0,365" fill="none" stroke="#e9e7e3" stroke-width="1.6" stroke-linejoin="round" stroke-linecap="round" />
<polyline points="179.5,376 170.5,373" fill="none" stroke="#e9e7e3" stroke-width="1.6" stroke-linejoin="round" stroke-linecap="round" />
<polyline points="176.0,384 167.0,381" fill="none" stroke="#e9e7e3" stroke-width="1.6" stroke-linejoin="round" stroke-linecap="round" />
<polyline points="172.5,392 163.5,389" fill="none" stroke="#e9e7e3" stroke-width="1.6" stroke-linejoin="round" stroke-linecap="round" />
<polyline points="169.0,400 160.0,397" fill="none" stroke="#e9e7e3" stroke-width="1.6" stroke-linejoin="round" stroke-linecap="round" />
<polyline points="86,222 93,222" fill="none" stroke="#e9e7e3" stroke-width="1.5" stroke-linejoin="round" stroke-linecap="round" />
<polyline points="86,234 93,234" fill="none" stroke="#e9e7e3" stroke-width="1.5" stroke-linejoin="round" stroke-linecap="round" />
<polyline points="86,246 93,246" fill="none" stroke="#e9e7e3" stroke-width="1.5" stroke-linejoin="round" stroke-linecap="round" />
<polyline points="86,258 93,258" fill="none" stroke="#e9e7e3" stroke-width="1.5" stroke-linejoin="round" stroke-linecap="round" />
<polyline points="86,270 93,270" fill="none" stroke="#e9e7e3" stroke-width="1.5" stroke-linejoin="round" stroke-linecap="round" />
<polyline points="88,0 70,32 50,75 25,125 0,155" fill="none" stroke="#777" stroke-width="1.6" stroke-linejoin="round" stroke-linecap="round"  stroke-linecap="butt"/>
<polyline points="92,0 74,33 54,76 29,126 0,162" fill="none" stroke="#8a8a8a" stroke-width="0.8" stroke-linejoin="round" stroke-linecap="round"  stroke-linecap="butt"/>
<polyline points="0,100 30,85 60,78" fill="none" stroke="#8a8a8a" stroke-width="0.8" stroke-linejoin="round" stroke-linecap="round"  stroke-linecap="butt"/>
<polyline points="0,185 50,200 105,207" fill="none" stroke="#777" stroke-width="1.8" stroke-linejoin="round" stroke-linecap="round"  stroke-linecap="butt"/>
<polyline points="0,190 50,205 100,211" fill="none" stroke="#8a8a8a" stroke-width="0.8" stroke-linejoin="round" stroke-linecap="round"  stroke-linecap="butt"/>
<polyline points="10,240 20,265 5,300 0,310" fill="none" stroke="#8a8a8a" stroke-width="0.8" stroke-linejoin="round" stroke-linecap="round"  stroke-linecap="butt"/>
<polyline points="88,212 146,222" fill="none" stroke="#8a8a8a" stroke-width="1.2" stroke-linejoin="round" stroke-linecap="round" stroke-dasharray="4 3" stroke-linecap="butt"/>
<polyline points="118,100 150,112 172,127" fill="none" stroke="#666" stroke-width="2" stroke-linejoin="round" stroke-linecap="round" stroke-dasharray="5 3" stroke-linecap="butt"/>
<polyline points="172,127 185,135 205,142 215,147" fill="none" stroke="#9a9a94" stroke-width="1.3" stroke-linejoin="round" stroke-linecap="round" stroke-dasharray="4 3" stroke-linecap="butt"/>
<polyline points="60,92 95,105 118,100" fill="none" stroke="#777" stroke-width="1.6" stroke-linejoin="round" stroke-linecap="round" stroke-dasharray="4 3" stroke-linecap="butt"/>
<polyline points="215,147 240,150 262,170 275,165" fill="none" stroke="#a5a5a0" stroke-width="1.1" stroke-linejoin="round" stroke-linecap="round" stroke-dasharray="4 3" stroke-linecap="butt"/>
<polyline points="260,165 300,178 322,182 340,172 375,157 418,145" fill="none" stroke="#707070" stroke-width="2.2" stroke-linejoin="round" stroke-linecap="round"  stroke-linecap="butt"/>
<polyline points="335,178 375,160 418,150" fill="none" stroke="#8a8a8a" stroke-width="0.9" stroke-linejoin="round" stroke-linecap="round"  stroke-linecap="butt"/>
<polyline points="275,140 300,150 340,170" fill="none" stroke="#8a8a8a" stroke-width="1.3" stroke-linejoin="round" stroke-linecap="round" stroke-dasharray="4 3" stroke-linecap="butt"/>
<polyline points="250,282 300,302" fill="none" stroke="#b5a3b0" stroke-width="3.2" stroke-linejoin="round" stroke-linecap="round"  stroke-linecap="butt"/>
<polyline points="300,302 332,322 375,355 418,387" fill="none" stroke="#b0aaa0" stroke-width="2.2" stroke-linejoin="round" stroke-linecap="round"  stroke-linecap="butt"/>
<polyline points="375,355 418,345" fill="none" stroke="#b0aaa0" stroke-width="1.6" stroke-linejoin="round" stroke-linecap="round"  stroke-linecap="butt"/>
<polyline points="340,165 352,150 348,135" fill="none" stroke="#999" stroke-width="1.3" stroke-linejoin="round" stroke-linecap="round"  stroke-linecap="butt"/>
<polyline points="352,150 380,165 395,185" fill="none" stroke="#aaa" stroke-width="1.2" stroke-linejoin="round" stroke-linecap="round"  stroke-linecap="butt"/>
<polyline points="292,262 320,275 332,285" fill="none" stroke="#aaa" stroke-width="1.2" stroke-linejoin="round" stroke-linecap="round" stroke-dasharray="3 3" stroke-linecap="butt"/>
<polyline points="332,322 332,375 336,382" fill="none" stroke="#aaa" stroke-width="1.2" stroke-linejoin="round" stroke-linecap="round" stroke-dasharray="3 3" stroke-linecap="butt"/>
<polyline points="365,318 395,312 405,308" fill="none" stroke="#aaa" stroke-width="1.2" stroke-linejoin="round" stroke-linecap="round" stroke-dasharray="3 3" stroke-linecap="butt"/>
<polyline points="230,300 240,325 246,345" fill="none" stroke="#aaa" stroke-width="1.2" stroke-linejoin="round" stroke-linecap="round" stroke-dasharray="3 3" stroke-linecap="butt"/>
<polyline points="150,283 200,292 232,302" fill="none" stroke="#aaa" stroke-width="1" stroke-linejoin="round" stroke-linecap="round" stroke-dasharray="3 3" stroke-linecap="butt"/>
<polyline points="86,283 120,290 140,296" fill="none" stroke="#999" stroke-width="1" stroke-linejoin="round" stroke-linecap="round" stroke-dasharray="3 3" stroke-linecap="butt"/>
<polyline points="165,212 200,226 230,235" fill="none" stroke="#aaa" stroke-width="1" stroke-linejoin="round" stroke-linecap="round" stroke-dasharray="3 3" stroke-linecap="butt"/>
<polyline points="107,100 100,120 82,140 68,160 60,175" fill="none" stroke="#dcdca8" stroke-width="2.6" stroke-linejoin="round" stroke-linecap="round" />
<polyline points="107,100 100,120 82,140 68,160 60,175" fill="none" stroke="#f7fabf" stroke-width="2.0" stroke-linejoin="round" stroke-linecap="round" />
<polyline points="112,107 108,135 112,160 105,190 100,207" fill="none" stroke="#dcdca8" stroke-width="2.6" stroke-linejoin="round" stroke-linecap="round" />
<polyline points="112,107 108,135 112,160 105,190 100,207" fill="none" stroke="#f7fabf" stroke-width="2" stroke-linejoin="round" stroke-linecap="round" />
<polyline points="60,200 75,230 80,260 84,290" fill="none" stroke="#dcdca8" stroke-width="2.6" stroke-linejoin="round" stroke-linecap="round" />
<polyline points="60,200 75,230 80,260 84,290" fill="none" stroke="#f7fabf" stroke-width="2.0" stroke-linejoin="round" stroke-linecap="round" />
<polyline points="0,272 40,270 86,268" fill="none" stroke="#dcdca8" stroke-width="2.6" stroke-linejoin="round" stroke-linecap="round" />
<polyline points="0,272 40,270 86,268" fill="none" stroke="#f7fabf" stroke-width="2.0" stroke-linejoin="round" stroke-linecap="round" />
<polyline points="30,200 45,225 40,260 30,290" fill="none" stroke="#dcdca8" stroke-width="2.6" stroke-linejoin="round" stroke-linecap="round" />
<polyline points="30,200 45,225 40,260 30,290" fill="none" stroke="#f7fabf" stroke-width="2.0" stroke-linejoin="round" stroke-linecap="round" />
<polyline points="0,225 30,235 60,232" fill="none" stroke="#dcdca8" stroke-width="2.6" stroke-linejoin="round" stroke-linecap="round" />
<polyline points="0,225 30,235 60,232" fill="none" stroke="#f7fabf" stroke-width="2.0" stroke-linejoin="round" stroke-linecap="round" />
<polyline points="60,120 55,150 70,170" fill="none" stroke="#dcdca8" stroke-width="2.6" stroke-linejoin="round" stroke-linecap="round" />
<polyline points="60,120 55,150 70,170" fill="none" stroke="#f7fabf" stroke-width="2.0" stroke-linejoin="round" stroke-linecap="round" />
<polyline points="20,98 35,140 45,170 60,200" fill="none" stroke="#dcdca8" stroke-width="1.7999999999999998" stroke-linejoin="round" stroke-linecap="round" />
<polyline points="20,98 35,140 45,170 60,200" fill="none" stroke="#f7fabf" stroke-width="1.2" stroke-linejoin="round" stroke-linecap="round" />
<polyline points="118,42 140,30 160,20 175,8" fill="none" stroke="#dcdca8" stroke-width="2.6" stroke-linejoin="round" stroke-linecap="round" />
<polyline points="118,42 140,30 160,20 175,8" fill="none" stroke="#f7fabf" stroke-width="2.0" stroke-linejoin="round" stroke-linecap="round" />
<polyline points="150,50 160,38 178,25" fill="none" stroke="#dcdca8" stroke-width="2.6" stroke-linejoin="round" stroke-linecap="round" />
<polyline points="150,50 160,38 178,25" fill="none" stroke="#f7fabf" stroke-width="2.0" stroke-linejoin="round" stroke-linecap="round" />
<polyline points="0,48 20,80 30,110" fill="none" stroke="#dcdca8" stroke-width="1.7999999999999998" stroke-linejoin="round" stroke-linecap="round" />
<polyline points="0,48 20,80 30,110" fill="none" stroke="#f7fabf" stroke-width="1.2" stroke-linejoin="round" stroke-linecap="round" />
<polyline points="95,150 100,180 95,205" fill="none" stroke="#dcdca8" stroke-width="2.6" stroke-linejoin="round" stroke-linecap="round" />
<polyline points="95,150 100,180 95,205" fill="none" stroke="#f7fabf" stroke-width="2.0" stroke-linejoin="round" stroke-linecap="round" />
<polyline points="100,128 96,160 90,205" fill="none" stroke="#dcdca8" stroke-width="2.1" stroke-linejoin="round" stroke-linecap="round" />
<polyline points="100,128 96,160 90,205" fill="none" stroke="#f7fabf" stroke-width="1.5" stroke-linejoin="round" stroke-linecap="round" />
<polyline points="92,135 86,170 80,203" fill="none" stroke="#dcdca8" stroke-width="2.1" stroke-linejoin="round" stroke-linecap="round" />
<polyline points="92,135 86,170 80,203" fill="none" stroke="#f7fabf" stroke-width="1.5" stroke-linejoin="round" stroke-linecap="round" />
<polyline points="84,142 76,175 70,200" fill="none" stroke="#dcdca8" stroke-width="1.9" stroke-linejoin="round" stroke-linecap="round" />
<polyline points="84,142 76,175 70,200" fill="none" stroke="#f7fabf" stroke-width="1.3" stroke-linejoin="round" stroke-linecap="round" />
<polyline points="88,140 118,147" fill="none" stroke="#dcdca8" stroke-width="1.9" stroke-linejoin="round" stroke-linecap="round" />
<polyline points="88,140 118,147" fill="none" stroke="#f7fabf" stroke-width="1.3" stroke-linejoin="round" stroke-linecap="round" />
<polyline points="80,165 116,172" fill="none" stroke="#dcdca8" stroke-width="1.9" stroke-linejoin="round" stroke-linecap="round" />
<polyline points="80,165 116,172" fill="none" stroke="#f7fabf" stroke-width="1.3" stroke-linejoin="round" stroke-linecap="round" />
<polyline points="72,190 108,197" fill="none" stroke="#dcdca8" stroke-width="1.9" stroke-linejoin="round" stroke-linecap="round" />
<polyline points="72,190 108,197" fill="none" stroke="#f7fabf" stroke-width="1.3" stroke-linejoin="round" stroke-linecap="round" />
<polyline points="100,48 118,60 140,72" fill="none" stroke="#dcdca8" stroke-width="2.0" stroke-linejoin="round" stroke-linecap="round" />
<polyline points="100,48 118,60 140,72" fill="none" stroke="#f7fabf" stroke-width="1.4" stroke-linejoin="round" stroke-linecap="round" />
<polyline points="82,65 100,80 125,92" fill="none" stroke="#dcdca8" stroke-width="2.0" stroke-linejoin="round" stroke-linecap="round" />
<polyline points="82,65 100,80 125,92" fill="none" stroke="#f7fabf" stroke-width="1.4" stroke-linejoin="round" stroke-linecap="round" />
<polyline points="120,20 135,35 150,50" fill="none" stroke="#dcdca8" stroke-width="1.9" stroke-linejoin="round" stroke-linecap="round" />
<polyline points="120,20 135,35 150,50" fill="none" stroke="#f7fabf" stroke-width="1.3" stroke-linejoin="round" stroke-linecap="round" />
<polyline points="95,0 110,15 118,22" fill="none" stroke="#dcdca8" stroke-width="1.9" stroke-linejoin="round" stroke-linecap="round" />
<polyline points="95,0 110,15 118,22" fill="none" stroke="#f7fabf" stroke-width="1.3" stroke-linejoin="round" stroke-linecap="round" />
<polyline points="62,95 85,105 107,100" fill="none" stroke="#dcdca8" stroke-width="1.9" stroke-linejoin="round" stroke-linecap="round" />
<polyline points="62,95 85,105 107,100" fill="none" stroke="#f7fabf" stroke-width="1.3" stroke-linejoin="round" stroke-linecap="round" />
<polyline points="130,0 120,20 100,48" fill="none" stroke="#dcdca8" stroke-width="1.9" stroke-linejoin="round" stroke-linecap="round" />
<polyline points="130,0 120,20 100,48" fill="none" stroke="#f7fabf" stroke-width="1.3" stroke-linejoin="round" stroke-linecap="round" />
<polyline points="68,95 75,120 70,150 55,180" fill="none" stroke="#dcdca8" stroke-width="1.9" stroke-linejoin="round" stroke-linecap="round" />
<polyline points="68,95 75,120 70,150 55,180" fill="none" stroke="#f7fabf" stroke-width="1.3" stroke-linejoin="round" stroke-linecap="round" />
<polyline points="35,240 60,243 86,247" fill="none" stroke="#dcdca8" stroke-width="1.9" stroke-linejoin="round" stroke-linecap="round" />
<polyline points="35,240 60,243 86,247" fill="none" stroke="#f7fabf" stroke-width="1.3" stroke-linejoin="round" stroke-linecap="round" />
<polyline points="60,205 62,240 64,290" fill="none" stroke="#dcdca8" stroke-width="2.1" stroke-linejoin="round" stroke-linecap="round" />
<polyline points="60,205 62,240 64,290" fill="none" stroke="#f7fabf" stroke-width="1.5" stroke-linejoin="round" stroke-linecap="round" />
<polyline points="45,212 48,250 46,292" fill="none" stroke="#dcdca8" stroke-width="1.9" stroke-linejoin="round" stroke-linecap="round" />
<polyline points="45,212 48,250 46,292" fill="none" stroke="#f7fabf" stroke-width="1.3" stroke-linejoin="round" stroke-linecap="round" />
<polyline points="0,250 15,262 25,270" fill="none" stroke="#dcdca8" stroke-width="1.9" stroke-linejoin="round" stroke-linecap="round" />
<polyline points="0,250 15,262 25,270" fill="none" stroke="#f7fabf" stroke-width="1.3" stroke-linejoin="round" stroke-linecap="round" />
<polyline points="0,200 15,215 32,225" fill="none" stroke="#dcdca8" stroke-width="2.1" stroke-linejoin="round" stroke-linecap="round" />
<polyline points="0,200 15,215 32,225" fill="none" stroke="#f7fabf" stroke-width="1.5" stroke-linejoin="round" stroke-linecap="round" />
<polyline points="10,170 20,195 30,200" fill="none" stroke="#dcdca8" stroke-width="1.9" stroke-linejoin="round" stroke-linecap="round" />
<polyline points="10,170 20,195 30,200" fill="none" stroke="#f7fabf" stroke-width="1.3" stroke-linejoin="round" stroke-linecap="round" />
<polyline points="0,285 12,290 22,300" fill="none" stroke="#dcdca8" stroke-width="1.9" stroke-linejoin="round" stroke-linecap="round" />
<polyline points="0,285 12,290 22,300" fill="none" stroke="#f7fabf" stroke-width="1.3" stroke-linejoin="round" stroke-linecap="round" />
<polyline points="72,210 74,250 75,290" fill="none" stroke="#dcdca8" stroke-width="1.9" stroke-linejoin="round" stroke-linecap="round" />
<polyline points="72,210 74,250 75,290" fill="none" stroke="#f7fabf" stroke-width="1.3" stroke-linejoin="round" stroke-linecap="round" />
<polyline points="370,50 360,80 350,100 342,117 332,140 325,168" fill="none" stroke="#dcdca8" stroke-width="2.4" stroke-linejoin="round" stroke-linecap="round" />
<polyline points="370,50 360,80 350,100 342,117 332,140 325,168" fill="none" stroke="#f7fabf" stroke-width="1.8" stroke-linejoin="round" stroke-linecap="round" />
<polyline points="360,80 390,92 418,105" fill="none" stroke="#dcdca8" stroke-width="2.6" stroke-linejoin="round" stroke-linecap="round" />
<polyline points="360,80 390,92 418,105" fill="none" stroke="#f7fabf" stroke-width="2.0" stroke-linejoin="round" stroke-linecap="round" />
<polyline points="370,50 395,60 418,70" fill="none" stroke="#dcdca8" stroke-width="2.6" stroke-linejoin="round" stroke-linecap="round" />
<polyline points="370,50 395,60 418,70" fill="none" stroke="#f7fabf" stroke-width="2.0" stroke-linejoin="round" stroke-linecap="round" />
<polyline points="350,100 385,118 418,135" fill="none" stroke="#dcdca8" stroke-width="2.6" stroke-linejoin="round" stroke-linecap="round" />
<polyline points="350,100 385,118 418,135" fill="none" stroke="#f7fabf" stroke-width="2.0" stroke-linejoin="round" stroke-linecap="round" />
<polyline points="395,40 418,57" fill="none" stroke="#dcdca8" stroke-width="2.6" stroke-linejoin="round" stroke-linecap="round" />
<polyline points="395,40 418,57" fill="none" stroke="#f7fabf" stroke-width="2.0" stroke-linejoin="round" stroke-linecap="round" />
<polyline points="342,117 365,128 395,145" fill="none" stroke="#dcdca8" stroke-width="2.6" stroke-linejoin="round" stroke-linecap="round" />
<polyline points="342,117 365,128 395,145" fill="none" stroke="#f7fabf" stroke-width="2.0" stroke-linejoin="round" stroke-linecap="round" />
<polyline points="380,40 372,66" fill="none" stroke="#dcdca8" stroke-width="2.6" stroke-linejoin="round" stroke-linecap="round" />
<polyline points="380,40 372,66" fill="none" stroke="#f7fabf" stroke-width="2.0" stroke-linejoin="round" stroke-linecap="round" />
<polyline points="408,45 398,75 385,100 372,128" fill="none" stroke="#dcdca8" stroke-width="2.0" stroke-linejoin="round" stroke-linecap="round" />
<polyline points="408,45 398,75 385,100 372,128" fill="none" stroke="#f7fabf" stroke-width="1.4" stroke-linejoin="round" stroke-linecap="round" />
<polyline points="332,140 350,150" fill="none" stroke="#dcdca8" stroke-width="2.6" stroke-linejoin="round" stroke-linecap="round" />
<polyline points="332,140 350,150" fill="none" stroke="#f7fabf" stroke-width="2.0" stroke-linejoin="round" stroke-linecap="round" />
<polyline points="325,135 332,157 322,182" fill="none" stroke="#dcdca8" stroke-width="2.6" stroke-linejoin="round" stroke-linecap="round" />
<polyline points="325,135 332,157 322,182" fill="none" stroke="#f7fabf" stroke-width="2.0" stroke-linejoin="round" stroke-linecap="round" />
<polyline points="297,170 312,162 332,157" fill="none" stroke="#dcdca8" stroke-width="2.6" stroke-linejoin="round" stroke-linecap="round" />
<polyline points="297,170 312,162 332,157" fill="none" stroke="#f7fabf" stroke-width="2.0" stroke-linejoin="round" stroke-linecap="round" />
<polyline points="305,200 310,230 307,255 297,275" fill="none" stroke="#dcdca8" stroke-width="2.4" stroke-linejoin="round" stroke-linecap="round" />
<polyline points="305,200 310,230 307,255 297,275" fill="none" stroke="#f7fabf" stroke-width="1.8" stroke-linejoin="round" stroke-linecap="round" />
<polyline points="310,225 330,222 350,220" fill="none" stroke="#dcdca8" stroke-width="2.6" stroke-linejoin="round" stroke-linecap="round" />
<polyline points="310,225 330,222 350,220" fill="none" stroke="#f7fabf" stroke-width="2.0" stroke-linejoin="round" stroke-linecap="round" />
<polyline points="350,220 355,235 370,242 375,255" fill="none" stroke="#dcdca8" stroke-width="2.6" stroke-linejoin="round" stroke-linecap="round" />
<polyline points="350,220 355,235 370,242 375,255" fill="none" stroke="#f7fabf" stroke-width="2.0" stroke-linejoin="round" stroke-linecap="round" />
<polyline points="375,150 405,140 418,142" fill="none" stroke="#dcdca8" stroke-width="2.6" stroke-linejoin="round" stroke-linecap="round" />
<polyline points="375,150 405,140 418,142" fill="none" stroke="#f7fabf" stroke-width="2.0" stroke-linejoin="round" stroke-linecap="round" />
<polyline points="380,175 390,187 418,182" fill="none" stroke="#dcdca8" stroke-width="2.6" stroke-linejoin="round" stroke-linecap="round" />
<polyline points="380,175 390,187 418,182" fill="none" stroke="#f7fabf" stroke-width="2.0" stroke-linejoin="round" stroke-linecap="round" />
<polyline points="400,230 410,255 405,275 418,285" fill="none" stroke="#dcdca8" stroke-width="2.6" stroke-linejoin="round" stroke-linecap="round" />
<polyline points="400,230 410,255 405,275 418,285" fill="none" stroke="#f7fabf" stroke-width="2.0" stroke-linejoin="round" stroke-linecap="round" />
<polyline points="296,207 305,200" fill="none" stroke="#dcdca8" stroke-width="2.6" stroke-linejoin="round" stroke-linecap="round" />
<polyline points="296,207 305,200" fill="none" stroke="#f7fabf" stroke-width="2.0" stroke-linejoin="round" stroke-linecap="round" />
<polyline points="297,230 310,230" fill="none" stroke="#dcdca8" stroke-width="2.6" stroke-linejoin="round" stroke-linecap="round" />
<polyline points="297,230 310,230" fill="none" stroke="#f7fabf" stroke-width="2.0" stroke-linejoin="round" stroke-linecap="round" />
<polyline points="315,192 318,215 310,230" fill="none" stroke="#dcdca8" stroke-width="1.9" stroke-linejoin="round" stroke-linecap="round" />
<polyline points="315,192 318,215 310,230" fill="none" stroke="#f7fabf" stroke-width="1.3" stroke-linejoin="round" stroke-linecap="round" />
<polyline points="297,250 287,272 279,292 275,312 274,332" fill="none" stroke="#dcdca8" stroke-width="2.6" stroke-linejoin="round" stroke-linecap="round" />
<polyline points="297,250 287,272 279,292 275,312 274,332" fill="none" stroke="#f7fabf" stroke-width="2" stroke-linejoin="round" stroke-linecap="round" />
<polyline points="287,272 312,265 325,277" fill="none" stroke="#dcdca8" stroke-width="2.6" stroke-linejoin="round" stroke-linecap="round" />
<polyline points="287,272 312,265 325,277" fill="none" stroke="#f7fabf" stroke-width="2.0" stroke-linejoin="round" stroke-linecap="round" />
<polyline points="279,292 297,282 312,285 327,287 357,287" fill="none" stroke="#dcdca8" stroke-width="2.4" stroke-linejoin="round" stroke-linecap="round" />
<polyline points="279,292 297,282 312,285 327,287 357,287" fill="none" stroke="#f7fabf" stroke-width="1.8" stroke-linejoin="round" stroke-linecap="round" />
<polyline points="357,287 360,312 367,332 375,350 390,362 418,380" fill="none" stroke="#dcdca8" stroke-width="2.4" stroke-linejoin="round" stroke-linecap="round" />
<polyline points="357,287 360,312 367,332 375,350 390,362 418,380" fill="none" stroke="#f7fabf" stroke-width="1.8" stroke-linejoin="round" stroke-linecap="round" />
<polyline points="370,250 375,275 380,285" fill="none" stroke="#dcdca8" stroke-width="2.6" stroke-linejoin="round" stroke-linecap="round" />
<polyline points="370,250 375,275 380,285" fill="none" stroke="#f7fabf" stroke-width="2.0" stroke-linejoin="round" stroke-linecap="round" />
<polyline points="327,287 330,325 327,350 330,395" fill="none" stroke="#dcdca8" stroke-width="2.4" stroke-linejoin="round" stroke-linecap="round" />
<polyline points="327,287 330,325 327,350 330,395" fill="none" stroke="#f7fabf" stroke-width="1.8" stroke-linejoin="round" stroke-linecap="round" />
<polyline points="275,312 282,307 300,315 315,332 320,342" fill="none" stroke="#dcdca8" stroke-width="2.6" stroke-linejoin="round" stroke-linecap="round" />
<polyline points="275,312 282,307 300,315 315,332 320,342" fill="none" stroke="#f7fabf" stroke-width="2.0" stroke-linejoin="round" stroke-linecap="round" />
<polyline points="280,332 292,315 307,335" fill="none" stroke="#dcdca8" stroke-width="2.6" stroke-linejoin="round" stroke-linecap="round" />
<polyline points="280,332 292,315 307,335" fill="none" stroke="#f7fabf" stroke-width="2.0" stroke-linejoin="round" stroke-linecap="round" />
<polyline points="250,372 290,370 327,365" fill="none" stroke="#dcdca8" stroke-width="2.6" stroke-linejoin="round" stroke-linecap="round" />
<polyline points="250,372 290,370 327,365" fill="none" stroke="#f7fabf" stroke-width="2.0" stroke-linejoin="round" stroke-linecap="round" />
<polyline points="250,382 300,380 330,378" fill="none" stroke="#dcdca8" stroke-width="2.6" stroke-linejoin="round" stroke-linecap="round" />
<polyline points="250,382 300,380 330,378" fill="none" stroke="#f7fabf" stroke-width="2.0" stroke-linejoin="round" stroke-linecap="round" />
<polyline points="250,392 300,390 330,388" fill="none" stroke="#dcdca8" stroke-width="1.9" stroke-linejoin="round" stroke-linecap="round" />
<polyline points="250,392 300,390 330,388" fill="none" stroke="#f7fabf" stroke-width="1.3" stroke-linejoin="round" stroke-linecap="round" />
<polyline points="260,352 262,397" fill="none" stroke="#dcdca8" stroke-width="2.1" stroke-linejoin="round" stroke-linecap="round" />
<polyline points="260,352 262,397" fill="none" stroke="#f7fabf" stroke-width="1.5" stroke-linejoin="round" stroke-linecap="round" />
<polyline points="272,352 274,397" fill="none" stroke="#dcdca8" stroke-width="2.1" stroke-linejoin="round" stroke-linecap="round" />
<polyline points="272,352 274,397" fill="none" stroke="#f7fabf" stroke-width="1.5" stroke-linejoin="round" stroke-linecap="round" />
<polyline points="282,352 284,397" fill="none" stroke="#dcdca8" stroke-width="2.1" stroke-linejoin="round" stroke-linecap="round" />
<polyline points="282,352 284,397" fill="none" stroke="#f7fabf" stroke-width="1.5" stroke-linejoin="round" stroke-linecap="round" />
<polyline points="302,352 304,397" fill="none" stroke="#dcdca8" stroke-width="2.1" stroke-linejoin="round" stroke-linecap="round" />
<polyline points="302,352 304,397" fill="none" stroke="#f7fabf" stroke-width="1.5" stroke-linejoin="round" stroke-linecap="round" />
<polyline points="312,352 314,397" fill="none" stroke="#dcdca8" stroke-width="2.1" stroke-linejoin="round" stroke-linecap="round" />
<polyline points="312,352 314,397" fill="none" stroke="#f7fabf" stroke-width="1.5" stroke-linejoin="round" stroke-linecap="round" />
<polyline points="410,262 415,275 418,277" fill="none" stroke="#dcdca8" stroke-width="2.6" stroke-linejoin="round" stroke-linecap="round" />
<polyline points="410,262 415,275 418,277" fill="none" stroke="#f7fabf" stroke-width="2.0" stroke-linejoin="round" stroke-linecap="round" />
<polyline points="385,283 395,300 418,312" fill="none" stroke="#dcdca8" stroke-width="2.6" stroke-linejoin="round" stroke-linecap="round" />
<polyline points="385,283 395,300 418,312" fill="none" stroke="#f7fabf" stroke-width="2.0" stroke-linejoin="round" stroke-linecap="round" />
<polyline points="357,287 385,283 418,270" fill="none" stroke="#dcdca8" stroke-width="2.6" stroke-linejoin="round" stroke-linecap="round" />
<polyline points="357,287 385,283 418,270" fill="none" stroke="#f7fabf" stroke-width="2.0" stroke-linejoin="round" stroke-linecap="round" />
<polyline points="300,347 310,380 316,397" fill="none" stroke="#dcdca8" stroke-width="2.6" stroke-linejoin="round" stroke-linecap="round" />
<polyline points="300,347 310,380 316,397" fill="none" stroke="#f7fabf" stroke-width="2.0" stroke-linejoin="round" stroke-linecap="round" />
<polyline points="345,267 360,250 385,248" fill="none" stroke="#dcdca8" stroke-width="2.6" stroke-linejoin="round" stroke-linecap="round" />
<polyline points="345,267 360,250 385,248" fill="none" stroke="#f7fabf" stroke-width="2.0" stroke-linejoin="round" stroke-linecap="round" />
<polyline points="340,330 360,318 395,300" fill="none" stroke="#dcdca8" stroke-width="1.9" stroke-linejoin="round" stroke-linecap="round" />
<polyline points="340,330 360,318 395,300" fill="none" stroke="#f7fabf" stroke-width="1.3" stroke-linejoin="round" stroke-linecap="round" />
<polyline points="362,225 352,245 345,267" fill="none" stroke="#dcdca8" stroke-width="2.6" stroke-linejoin="round" stroke-linecap="round" />
<polyline points="362,225 352,245 345,267" fill="none" stroke="#f7fabf" stroke-width="2.0" stroke-linejoin="round" stroke-linecap="round" />
<polyline points="337,357 340,397" fill="none" stroke="#dcdca8" stroke-width="1.9" stroke-linejoin="round" stroke-linecap="round" />
<polyline points="337,357 340,397" fill="none" stroke="#f7fabf" stroke-width="1.3" stroke-linejoin="round" stroke-linecap="round" />
<polyline points="362,335 365,397" fill="none" stroke="#dcdca8" stroke-width="1.9" stroke-linejoin="round" stroke-linecap="round" />
<polyline points="362,335 365,397" fill="none" stroke="#f7fabf" stroke-width="1.3" stroke-linejoin="round" stroke-linecap="round" />
<polyline points="395,320 398,397" fill="none" stroke="#dcdca8" stroke-width="1.9" stroke-linejoin="round" stroke-linecap="round" />
<polyline points="395,320 398,397" fill="none" stroke="#f7fabf" stroke-width="1.3" stroke-linejoin="round" stroke-linecap="round" />
<polyline points="330,330 370,322 418,305" fill="none" stroke="#dcdca8" stroke-width="1.9" stroke-linejoin="round" stroke-linecap="round" />
<polyline points="330,330 370,322 418,305" fill="none" stroke="#f7fabf" stroke-width="1.3" stroke-linejoin="round" stroke-linecap="round" />
<polyline points="225,355 240,380 250,405 260,418" fill="none" stroke="#dcdca8" stroke-width="2.6" stroke-linejoin="round" stroke-linecap="round" />
<polyline points="225,355 240,380 250,405 260,418" fill="none" stroke="#f7fabf" stroke-width="2.0" stroke-linejoin="round" stroke-linecap="round" />
<polyline points="205,360 215,390 212,418" fill="none" stroke="#dcdca8" stroke-width="2.6" stroke-linejoin="round" stroke-linecap="round" />
<polyline points="205,360 215,390 212,418" fill="none" stroke="#f7fabf" stroke-width="2.0" stroke-linejoin="round" stroke-linecap="round" />
<polyline points="190,390 215,385 245,395" fill="none" stroke="#dcdca8" stroke-width="2.6" stroke-linejoin="round" stroke-linecap="round" />
<polyline points="190,390 215,385 245,395" fill="none" stroke="#f7fabf" stroke-width="2.0" stroke-linejoin="round" stroke-linecap="round" />
<polyline points="195,372 220,365 245,368" fill="none" stroke="#dcdca8" stroke-width="2.6" stroke-linejoin="round" stroke-linecap="round" />
<polyline points="195,372 220,365 245,368" fill="none" stroke="#f7fabf" stroke-width="2.0" stroke-linejoin="round" stroke-linecap="round" />
<polyline points="180,400 210,400 245,410" fill="none" stroke="#dcdca8" stroke-width="2.6" stroke-linejoin="round" stroke-linecap="round" />
<polyline points="180,400 210,400 245,410" fill="none" stroke="#f7fabf" stroke-width="2.0" stroke-linejoin="round" stroke-linecap="round" />
<polyline points="200,340 205,360" fill="none" stroke="#dcdca8" stroke-width="1.9" stroke-linejoin="round" stroke-linecap="round" />
<polyline points="200,340 205,360" fill="none" stroke="#f7fabf" stroke-width="1.3" stroke-linejoin="round" stroke-linecap="round" />
<polyline points="225,330 228,355" fill="none" stroke="#dcdca8" stroke-width="1.9" stroke-linejoin="round" stroke-linecap="round" />
<polyline points="225,330 228,355" fill="none" stroke="#f7fabf" stroke-width="1.3" stroke-linejoin="round" stroke-linecap="round" />
<polyline points="170,410 200,412 230,418" fill="none" stroke="#dcdca8" stroke-width="1.9" stroke-linejoin="round" stroke-linecap="round" />
<polyline points="170,410 200,412 230,418" fill="none" stroke="#f7fabf" stroke-width="1.3" stroke-linejoin="round" stroke-linecap="round" />
<polyline points="237,355 242,335 248,332" fill="none" stroke="#dcdca8" stroke-width="1.9" stroke-linejoin="round" stroke-linecap="round" />
<polyline points="237,355 242,335 248,332" fill="none" stroke="#f7fabf" stroke-width="1.3" stroke-linejoin="round" stroke-linecap="round" />
<polyline points="118,22 100,48 82,65 62,95 60,118 47,140 25,160 15,168" fill="none" stroke="#e6b878" stroke-width="3.0" stroke-linejoin="round" stroke-linecap="round" />
<polyline points="118,22 100,48 82,65 62,95 60,118 47,140 25,160 15,168" fill="none" stroke="#fcd6a4" stroke-width="2.4" stroke-linejoin="round" stroke-linecap="round" />
<polyline points="40,15 54,25 71,37" fill="none" stroke="#e6b878" stroke-width="2.4" stroke-linejoin="round" stroke-linecap="round" />
<polyline points="40,15 54,25 71,37" fill="none" stroke="#fcd6a4" stroke-width="1.8" stroke-linejoin="round" stroke-linecap="round" />
<polyline points="92.5,5 88,19 80,29 72,38" fill="none" stroke="#e6b878" stroke-width="3.0" stroke-linejoin="round" stroke-linecap="round" />
<polyline points="92.5,5 88,19 80,29 72,38" fill="none" stroke="#fcd6a4" stroke-width="2.4" stroke-linejoin="round" stroke-linecap="round" />
<polyline points="70,43 85,48 100,48" fill="none" stroke="#e6b878" stroke-width="2.2" stroke-linejoin="round" stroke-linecap="round" />
<polyline points="70,43 85,48 100,48" fill="none" stroke="#fcd6a4" stroke-width="1.6" stroke-linejoin="round" stroke-linecap="round" />
<polyline points="160,20 150,40 145,60 140,72 135,80" fill="none" stroke="#e6b878" stroke-width="3.0" stroke-linejoin="round" stroke-linecap="round" />
<polyline points="160,20 150,40 145,60 140,72 135,80" fill="none" stroke="#fcd6a4" stroke-width="2.4" stroke-linejoin="round" stroke-linecap="round" />
<polyline points="15,168 0,180" fill="none" stroke="#e6b878" stroke-width="3.0" stroke-linejoin="round" stroke-linecap="round" />
<polyline points="15,168 0,180" fill="none" stroke="#fcd6a4" stroke-width="2.4" stroke-linejoin="round" stroke-linecap="round" />
<polyline points="25,160 40,185 60,200" fill="none" stroke="#e6b878" stroke-width="2.2" stroke-linejoin="round" stroke-linecap="round" />
<polyline points="25,160 40,185 60,200" fill="none" stroke="#fcd6a4" stroke-width="1.6" stroke-linejoin="round" stroke-linecap="round" />
<polyline points="0,258 20,250 32,228" fill="none" stroke="#e6b878" stroke-width="2.2" stroke-linejoin="round" stroke-linecap="round" />
<polyline points="0,258 20,250 32,228" fill="none" stroke="#fcd6a4" stroke-width="1.6" stroke-linejoin="round" stroke-linecap="round" />
<polyline points="147,280 152,240 160,190 168,150 180,120 200,85 232,25 242,0" fill="none" stroke="#e6b878" stroke-width="2.4" stroke-linejoin="round" stroke-linecap="round" />
<polyline points="147,280 152,240 160,190 168,150 180,120 200,85 232,25 242,0" fill="none" stroke="#fcd6a4" stroke-width="1.8" stroke-linejoin="round" stroke-linecap="round" />
<polyline points="170,318 178,290 186,255 190,228 198,200 215,165 232,130 243,100 245,73 255,35 266,0" fill="none" stroke="#e6b878" stroke-width="2.6" stroke-linejoin="round" stroke-linecap="round" />
<polyline points="170,318 178,290 186,255 190,228 198,200 215,165 232,130 243,100 245,73 255,35 266,0" fill="none" stroke="#fcd6a4" stroke-width="2" stroke-linejoin="round" stroke-linecap="round" />
<polyline points="200,306 215,265 228,235 250,190 280,135 310,80 350,0" fill="none" stroke="#e6b878" stroke-width="2.6" stroke-linejoin="round" stroke-linecap="round" />
<polyline points="200,306 215,265 228,235 250,190 280,135 310,80 350,0" fill="none" stroke="#fcd6a4" stroke-width="2" stroke-linejoin="round" stroke-linecap="round" />
<polyline points="230,300 240,268 252,235 262,210" fill="none" stroke="#e6b878" stroke-width="2.6" stroke-linejoin="round" stroke-linecap="round" />
<polyline points="230,300 240,268 252,235 262,210" fill="none" stroke="#fcd6a4" stroke-width="2" stroke-linejoin="round" stroke-linecap="round" />
<polyline points="235,230 262,243" fill="none" stroke="#e6b878" stroke-width="2.2" stroke-linejoin="round" stroke-linecap="round" />
<polyline points="235,230 262,243" fill="none" stroke="#fcd6a4" stroke-width="1.6" stroke-linejoin="round" stroke-linecap="round" />
<polyline points="155,215 228,250 262,262" fill="none" stroke="#e6b878" stroke-width="2.4" stroke-linejoin="round" stroke-linecap="round" />
<polyline points="155,215 228,250 262,262" fill="none" stroke="#fcd6a4" stroke-width="1.8" stroke-linejoin="round" stroke-linecap="round" />
<polyline points="160,187 200,205 258,232" fill="none" stroke="#e6b878" stroke-width="2.2" stroke-linejoin="round" stroke-linecap="round" />
<polyline points="160,187 200,205 258,232" fill="none" stroke="#fcd6a4" stroke-width="1.6" stroke-linejoin="round" stroke-linecap="round" />
<polyline points="165,150 215,176 270,205" fill="none" stroke="#e6b878" stroke-width="2.2" stroke-linejoin="round" stroke-linecap="round" />
<polyline points="165,150 215,176 270,205" fill="none" stroke="#fcd6a4" stroke-width="1.6" stroke-linejoin="round" stroke-linecap="round" />
<polyline points="172,120 230,150 283,178" fill="none" stroke="#e6b878" stroke-width="2.4" stroke-linejoin="round" stroke-linecap="round" />
<polyline points="172,120 230,150 283,178" fill="none" stroke="#fcd6a4" stroke-width="1.8" stroke-linejoin="round" stroke-linecap="round" />
<polyline points="190,90 250,120 300,147" fill="none" stroke="#e6b878" stroke-width="2.2" stroke-linejoin="round" stroke-linecap="round" />
<polyline points="190,90 250,120 300,147" fill="none" stroke="#fcd6a4" stroke-width="1.6" stroke-linejoin="round" stroke-linecap="round" />
<polyline points="207,57 247,75 270,88 320,113" fill="none" stroke="#e6b878" stroke-width="2.2" stroke-linejoin="round" stroke-linecap="round" />
<polyline points="207,57 247,75 270,88 320,113" fill="none" stroke="#fcd6a4" stroke-width="1.6" stroke-linejoin="round" stroke-linecap="round" />
<polyline points="142,290 160,296 175,295 207,332 220,350" fill="none" stroke="#e6b878" stroke-width="2.6" stroke-linejoin="round" stroke-linecap="round" />
<polyline points="142,290 160,296 175,295 207,332 220,350" fill="none" stroke="#fcd6a4" stroke-width="2" stroke-linejoin="round" stroke-linecap="round" />
<polyline points="160,268 192,280 207,300 225,340 237,355 245,368 262,400 270,418" fill="none" stroke="#e6b878" stroke-width="2.8000000000000003" stroke-linejoin="round" stroke-linecap="round" />
<polyline points="160,268 192,280 207,300 225,340 237,355 245,368 262,400 270,418" fill="none" stroke="#fcd6a4" stroke-width="2.2" stroke-linejoin="round" stroke-linecap="round" />
<polyline points="186,255 200,275 206,290" fill="none" stroke="#e6b878" stroke-width="2.2" stroke-linejoin="round" stroke-linecap="round" />
<polyline points="186,255 200,275 206,290" fill="none" stroke="#fcd6a4" stroke-width="1.6" stroke-linejoin="round" stroke-linecap="round" />
<polyline points="362,160 372,175 380,190" fill="none" stroke="#e6b878" stroke-width="3.0" stroke-linejoin="round" stroke-linecap="round" />
<polyline points="362,160 372,175 380,190" fill="none" stroke="#fcd6a4" stroke-width="2.4" stroke-linejoin="round" stroke-linecap="round" />
<polyline points="290,108 319,123 351,141 357,151 362,162" fill="none" stroke="#dc917a" stroke-width="3.4" stroke-linejoin="round" stroke-linecap="round" />
<polyline points="290,108 319,123 351,141 357,151 362,162" fill="none" stroke="#f9b29c" stroke-width="2.7" stroke-linejoin="round" stroke-linecap="round" />
<polyline points="362,160 385,150 418,125" fill="none" stroke="#e6b878" stroke-width="3.0" stroke-linejoin="round" stroke-linecap="round" />
<polyline points="362,160 385,150 418,125" fill="none" stroke="#fcd6a4" stroke-width="2.4" stroke-linejoin="round" stroke-linecap="round" />
<polyline points="350,147 372,120 400,88 418,70" fill="none" stroke="#e6b878" stroke-width="3.0" stroke-linejoin="round" stroke-linecap="round" />
<polyline points="350,147 372,120 400,88 418,70" fill="none" stroke="#fcd6a4" stroke-width="2.4" stroke-linejoin="round" stroke-linecap="round" />
<polyline points="322,182 325,225 335,250 345,267" fill="none" stroke="#e6b878" stroke-width="2.6" stroke-linejoin="round" stroke-linecap="round" />
<polyline points="322,182 325,225 335,250 345,267" fill="none" stroke="#fcd6a4" stroke-width="2" stroke-linejoin="round" stroke-linecap="round" />
<polyline points="330,222 370,210 418,182" fill="none" stroke="#e6b878" stroke-width="3.0" stroke-linejoin="round" stroke-linecap="round" />
<polyline points="330,222 370,210 418,182" fill="none" stroke="#fcd6a4" stroke-width="2.4" stroke-linejoin="round" stroke-linecap="round" />
<polyline points="322,300 370,292 418,282" fill="none" stroke="#e6b878" stroke-width="3.0" stroke-linejoin="round" stroke-linecap="round" />
<polyline points="322,300 370,292 418,282" fill="none" stroke="#fcd6a4" stroke-width="2.4" stroke-linejoin="round" stroke-linecap="round" />
<polyline points="300,347 362,335 400,317 418,300" fill="none" stroke="#e6b878" stroke-width="2.8000000000000003" stroke-linejoin="round" stroke-linecap="round" />
<polyline points="300,347 362,335 400,317 418,300" fill="none" stroke="#fcd6a4" stroke-width="2.2" stroke-linejoin="round" stroke-linecap="round" />
<polyline points="250,367 337,357 418,345" fill="none" stroke="#e6b878" stroke-width="2.8000000000000003" stroke-linejoin="round" stroke-linecap="round" />
<polyline points="250,367 337,357 418,345" fill="none" stroke="#fcd6a4" stroke-width="2.2" stroke-linejoin="round" stroke-linecap="round" />
<polyline points="237,355 262,352 300,347" fill="none" stroke="#e6b878" stroke-width="3.0" stroke-linejoin="round" stroke-linecap="round" />
<polyline points="237,355 262,352 300,347" fill="none" stroke="#fcd6a4" stroke-width="2.4" stroke-linejoin="round" stroke-linecap="round" />
<polyline points="195,372 240,372 250,367" fill="none" stroke="#e6b878" stroke-width="2.2" stroke-linejoin="round" stroke-linecap="round" />
<polyline points="195,372 240,372 250,367" fill="none" stroke="#fcd6a4" stroke-width="1.6" stroke-linejoin="round" stroke-linecap="round" />
<polyline points="215,350 218,380 225,418" fill="none" stroke="#e6b878" stroke-width="2.2" stroke-linejoin="round" stroke-linecap="round" />
<polyline points="215,350 218,380 225,418" fill="none" stroke="#fcd6a4" stroke-width="1.6" stroke-linejoin="round" stroke-linecap="round" />
<polyline points="418,207 400,225 395,242" fill="none" stroke="#e6b878" stroke-width="2.2" stroke-linejoin="round" stroke-linecap="round" />
<polyline points="418,207 400,225 395,242" fill="none" stroke="#fcd6a4" stroke-width="1.6" stroke-linejoin="round" stroke-linecap="round" />
<polyline points="372,175 395,170 418,160" fill="none" stroke="#e6b878" stroke-width="2.2" stroke-linejoin="round" stroke-linecap="round" />
<polyline points="372,175 395,170 418,160" fill="none" stroke="#fcd6a4" stroke-width="1.6" stroke-linejoin="round" stroke-linecap="round" />
<polyline points="385,48 392,70 400,88" fill="none" stroke="#e6b878" stroke-width="2.2" stroke-linejoin="round" stroke-linecap="round" />
<polyline points="385,48 392,70 400,88" fill="none" stroke="#fcd6a4" stroke-width="1.6" stroke-linejoin="round" stroke-linecap="round" />
<polyline points="75,42 58,75 38,112 15,145 5,168 0,175" fill="none" stroke="#d8907a" stroke-width="3.0999999999999996" stroke-linejoin="round" stroke-linecap="round" />
<polyline points="75,42 58,75 38,112 15,145 5,168 0,175" fill="none" stroke="#f9b29c" stroke-width="2.4" stroke-linejoin="round" stroke-linecap="round" />
<polyline points="200,72 190,90 180,105 172,120 167,135 165,150 162,168 160,187 156,207 152,232 149,255 146,275 142,290 137,302 136,320" fill="none" stroke="#d8907a" stroke-width="2.7" stroke-linejoin="round" stroke-linecap="round" />
<polyline points="200,72 190,90 180,105 172,120 167,135 165,150 162,168 160,187 156,207 152,232 149,255 146,275 142,290 137,302 136,320" fill="none" stroke="#f9b29c" stroke-width="2" stroke-linejoin="round" stroke-linecap="round" />
<polyline points="40,4 44,21 50,35 56,48 62,56" fill="none" stroke="#c86a80" stroke-width="5.3999999999999995" stroke-linejoin="round" stroke-linecap="round" />
<polyline points="40,4 44,21 50,35 56,48 62,56" fill="none" stroke="#e892a2" stroke-width="4.6" stroke-linejoin="round" stroke-linecap="round" />
<polyline points="62,56 69,51 83,56 96,62 108,73 116,83 118,91" fill="none" stroke="#c86a80" stroke-width="4.2" stroke-linejoin="round" stroke-linecap="round" />
<polyline points="62,56 69,51 83,56 96,62 108,73 116,83 118,91" fill="none" stroke="#e892a2" stroke-width="3.4" stroke-linejoin="round" stroke-linecap="round" />
<polyline points="36,0 40,6 47,8 44,14" fill="none" stroke="#c86a80" stroke-width="5.8" stroke-linejoin="round" stroke-linecap="round" />
<polyline points="36,0 40,6 47,8 44,14" fill="none" stroke="#e892a2" stroke-width="5" stroke-linejoin="round" stroke-linecap="round" />
<polyline points="48,30 44,42 56,52 64,55" fill="none" stroke="#c86a80" stroke-width="3.0" stroke-linejoin="round" stroke-linecap="round" />
<polyline points="48,30 44,42 56,52 64,55" fill="none" stroke="#e892a2" stroke-width="2.2" stroke-linejoin="round" stroke-linecap="round" />
<polyline points="0,62 4,68 0,74" fill="none" stroke="#c86a80" stroke-width="3.8" stroke-linejoin="round" stroke-linecap="round" />
<polyline points="0,62 4,68 0,74" fill="none" stroke="#e892a2" stroke-width="3" stroke-linejoin="round" stroke-linecap="round" />
<polyline points="118,92 114,98 124,98 130,87 125,84 118,92" fill="none" stroke="#c86a80" stroke-width="2.8" stroke-linejoin="round" stroke-linecap="round" />
<polyline points="118,92 114,98 124,98 130,87 125,84 118,92" fill="none" stroke="#e892a2" stroke-width="2" stroke-linejoin="round" stroke-linecap="round" />
<polyline points="130,87 160,97 176,103" fill="none" stroke="#f0a8b4" stroke-width="3.6" stroke-linejoin="round" stroke-linecap="round" stroke-linecap="butt"/>
<polyline points="32,225 50,221 80,222 84,226" fill="none" stroke="#c86a80" stroke-width="3.2" stroke-linejoin="round" stroke-linecap="round" />
<polyline points="32,225 50,221 80,222 84,226" fill="none" stroke="#e892a2" stroke-width="2.4" stroke-linejoin="round" stroke-linecap="round" />
<polyline points="34,230 60,227 83,229" fill="none" stroke="#c86a80" stroke-width="2.4000000000000004" stroke-linejoin="round" stroke-linecap="round" />
<polyline points="34,230 60,227 83,229" fill="none" stroke="#e892a2" stroke-width="1.6" stroke-linejoin="round" stroke-linecap="round" />
<polyline points="32,225 28,240 25,250 22,275 25,293 20,305 8,320 0,326" fill="none" stroke="#c86a80" stroke-width="3.4000000000000004" stroke-linejoin="round" stroke-linecap="round" />
<polyline points="32,225 28,240 25,250 22,275 25,293 20,305 8,320 0,326" fill="none" stroke="#e892a2" stroke-width="2.6" stroke-linejoin="round" stroke-linecap="round" />
<polyline points="86,227 147,240" fill="none" stroke="#f0a8b4" stroke-width="3" stroke-linejoin="round" stroke-linecap="round" stroke-linecap="butt"/>
<polyline points="0,215 12,218 32,225" fill="none" stroke="#c86a80" stroke-width="2.8" stroke-linejoin="round" stroke-linecap="round" />
<polyline points="0,215 12,218 32,225" fill="none" stroke="#e892a2" stroke-width="2" stroke-linejoin="round" stroke-linecap="round" />
<polyline points="368,0 363,11 350,21 348,32 353,47 350,56 341,65 332,80 322,92 312,105 300,125 287,142 275,165 265,182 258,205 267,230 262,255 258,275 255,290 245,299 225,301 195,307 175,317 160,330 150,335 140,331 136,321" fill="none" stroke="#c86a80" stroke-width="3.2" stroke-linejoin="round" stroke-linecap="round" />
<polyline points="368,0 363,11 350,21 348,32 353,47 350,56 341,65 332,80 322,92 312,105 300,125 287,142 275,165 265,182 258,205 267,230 262,255 258,275 255,290 245,299 225,301 195,307 175,317 160,330 150,335 140,331 136,321" fill="none" stroke="#e892a2" stroke-width="2.4" stroke-linejoin="round" stroke-linecap="round" />
<polyline points="235,0 230,15 220,35 207,57 200,72" fill="none" stroke="#c86a80" stroke-width="3.0" stroke-linejoin="round" stroke-linecap="round" />
<polyline points="235,0 230,15 220,35 207,57 200,72" fill="none" stroke="#e892a2" stroke-width="2.2" stroke-linejoin="round" stroke-linecap="round" />
<polyline points="396,-3 390,10 393,25 402,40 412,57 418,62" fill="none" stroke="#c86a80" stroke-width="3.5999999999999996" stroke-linejoin="round" stroke-linecap="round" />
<polyline points="396,-3 390,10 393,25 402,40 412,57 418,62" fill="none" stroke="#e892a2" stroke-width="2.8" stroke-linejoin="round" stroke-linecap="round" />
<polyline points="136,322 147,362 160,390 168,402" fill="none" stroke="#f0a8b4" stroke-width="2.2" stroke-linejoin="round" stroke-linecap="round" stroke-linecap="butt" opacity="0.9"/>
<polyline points="160,418 170,405 185,390 190,360 197,340 212,335 235,352 245,356 285,357 293,357 297,342 302,325 310,307 317,292 327,277 350,260 367,247 385,242 397,230 405,210 418,207" fill="none" stroke="#c86a80" stroke-width="3.4000000000000004" stroke-linejoin="round" stroke-linecap="round" />
<polyline points="160,418 170,405 185,390 190,360 197,340 212,335 235,352 245,356 285,357 293,357 297,342 302,325 310,307 317,292 327,277 350,260 367,247 385,242 397,230 405,210 418,207" fill="none" stroke="#e892a2" stroke-width="2.6" stroke-linejoin="round" stroke-linecap="round" />
<polyline points="275,165 300,172 322,182" fill="none" stroke="#f0a8b4" stroke-width="2.6" stroke-linejoin="round" stroke-linecap="round" stroke-dasharray="4 2" stroke-linecap="butt"/>
<polyline points="322,182 350,186 370,195 385,200 400,202 418,207" fill="none" stroke="#c86a80" stroke-width="3.4000000000000004" stroke-linejoin="round" stroke-linecap="round" />
<polyline points="322,182 350,186 370,195 385,200 400,202 418,207" fill="none" stroke="#e892a2" stroke-width="2.6" stroke-linejoin="round" stroke-linecap="round" />
<polyline points="418,80 398,112 374.7,148 365.8,156.8 349.7,148 344.4,162 348,173" fill="none" stroke="#9c9c98" stroke-width="2.2" stroke-linejoin="round" stroke-linecap="round" />
<text x="113.5" y="18" font-size="12.3" fill="#333" stroke="#fff" stroke-width="2" paint-order="stroke" stroke-opacity="0.7" >West New York</text>
<text x="84.5" y="42" font-size="12.3" fill="#333" stroke="#fff" stroke-width="2" paint-order="stroke" stroke-opacity="0.7" >Union City</text>
<text x="88.8" y="79" font-size="12.3" fill="#333" stroke="#fff" stroke-width="2" paint-order="stroke" stroke-opacity="0.7" >Weehawken</text>
<text x="64" y="180" font-size="12.5" fill="#333" stroke="#fff" stroke-width="2" paint-order="stroke" stroke-opacity="0.7" >Hoboken</text>
<text x="13.5" y="263.5" font-size="12.6" fill="#333" stroke="#fff" stroke-width="2" paint-order="stroke" stroke-opacity="0.7" >Jersey City</text>
<text x="-14" y="0.5" font-size="12.3" fill="#111" stroke="#fff" stroke-width="2" paint-order="stroke" stroke-opacity="0.7" >Secaucus</text>
<text x="136" y="298" font-size="14.2" fill="#333" stroke="#fff" stroke-width="2" paint-order="stroke" stroke-opacity="0.7" >New York</text>
<text x="272" y="2" font-size="12.5" fill="#333" stroke="#fff" stroke-width="2" paint-order="stroke" stroke-opacity="0.7" >Manhattan</text>
<text x="200" y="77" font-size="9.5" fill="#a52a3a" font-style="italic" stroke="#fff" stroke-width="1.8" paint-order="stroke" stroke-opacity="0.8" text-anchor="middle">7</text>
<text x="160" y="182" font-size="9.5" fill="#a52a3a" font-style="italic" stroke="#fff" stroke-width="1.8" paint-order="stroke" stroke-opacity="0.8" text-anchor="middle">4</text>
<text x="163" y="265" font-size="9.5" fill="#a52a3a" font-style="italic" stroke="#fff" stroke-width="1.8" paint-order="stroke" stroke-opacity="0.8" text-anchor="middle">4</text>
<text x="355" y="21" font-size="9.5" fill="#a52a3a" font-style="italic" stroke="#fff" stroke-width="1.8" paint-order="stroke" stroke-opacity="0.8" text-anchor="middle">14</text>
<text x="349" y="33" font-size="9.5" fill="#a52a3a" font-style="italic" stroke="#fff" stroke-width="1.8" paint-order="stroke" stroke-opacity="0.8" text-anchor="middle">14</text>
<text x="330" y="88" font-size="9.5" fill="#a52a3a" font-style="italic" stroke="#fff" stroke-width="1.8" paint-order="stroke" stroke-opacity="0.8" text-anchor="middle">13</text>
<text x="307" y="119" font-size="9.5" fill="#a52a3a" font-style="italic" stroke="#fff" stroke-width="1.8" paint-order="stroke" stroke-opacity="0.8" text-anchor="middle">12</text>
<text x="292" y="141" font-size="9.5" fill="#a52a3a" font-style="italic" stroke="#fff" stroke-width="1.8" paint-order="stroke" stroke-opacity="0.8" text-anchor="middle">10</text>
<text x="277" y="160" font-size="9.5" fill="#a52a3a" font-style="italic" stroke="#fff" stroke-width="1.8" paint-order="stroke" stroke-opacity="0.8" text-anchor="middle">8</text>
<text x="268" y="178" font-size="9.5" fill="#a52a3a" font-style="italic" stroke="#fff" stroke-width="1.8" paint-order="stroke" stroke-opacity="0.8" text-anchor="middle">9</text>
<text x="260" y="201" font-size="9.5" fill="#a52a3a" font-style="italic" stroke="#fff" stroke-width="1.8" paint-order="stroke" stroke-opacity="0.8" text-anchor="middle">8</text>
<text x="268" y="237" font-size="9.5" fill="#a52a3a" font-style="italic" stroke="#fff" stroke-width="1.8" paint-order="stroke" stroke-opacity="0.8" text-anchor="middle">7</text>
<text x="259" y="262" font-size="9.5" fill="#a52a3a" font-style="italic" stroke="#fff" stroke-width="1.8" paint-order="stroke" stroke-opacity="0.8" text-anchor="middle">5</text>
<text x="256" y="286" font-size="9.5" fill="#a52a3a" font-style="italic" stroke="#fff" stroke-width="1.8" paint-order="stroke" stroke-opacity="0.8" text-anchor="middle">5</text>
<text x="243" y="303" font-size="9.5" fill="#a52a3a" font-style="italic" stroke="#fff" stroke-width="1.8" paint-order="stroke" stroke-opacity="0.8" text-anchor="middle">3</text>
<text x="195" y="311" font-size="9.5" fill="#a52a3a" font-style="italic" stroke="#fff" stroke-width="1.8" paint-order="stroke" stroke-opacity="0.8" text-anchor="middle">2</text>
<text x="177" y="320" font-size="9.5" fill="#a52a3a" font-style="italic" stroke="#fff" stroke-width="1.8" paint-order="stroke" stroke-opacity="0.8" text-anchor="middle">2</text>
<text x="139" y="309" font-size="9.5" fill="#a52a3a" font-style="italic" stroke="#fff" stroke-width="1.8" paint-order="stroke" stroke-opacity="0.8" text-anchor="middle">2</text>
<text x="139" y="318" font-size="9.5" fill="#a52a3a" font-style="italic" stroke="#fff" stroke-width="1.8" paint-order="stroke" stroke-opacity="0.8" text-anchor="middle">2</text>
<text x="157" y="336" font-size="9.5" fill="#a52a3a" font-style="italic" stroke="#fff" stroke-width="1.8" paint-order="stroke" stroke-opacity="0.8" text-anchor="middle">1</text>
<text x="201" y="342" font-size="9.5" fill="#a52a3a" font-style="italic" stroke="#fff" stroke-width="1.8" paint-order="stroke" stroke-opacity="0.8" text-anchor="middle">28A</text>
<text x="240" y="358" font-size="9.5" fill="#a52a3a" font-style="italic" stroke="#fff" stroke-width="1.8" paint-order="stroke" stroke-opacity="0.8" text-anchor="middle">29</text>
<text x="287" y="361" font-size="9.5" fill="#a52a3a" font-style="italic" stroke="#fff" stroke-width="1.8" paint-order="stroke" stroke-opacity="0.8" text-anchor="middle">30</text>
<text x="189" y="381" font-size="9.5" fill="#a52a3a" font-style="italic" stroke="#fff" stroke-width="1.8" paint-order="stroke" stroke-opacity="0.8" text-anchor="middle">27</text>
<text x="177" y="418" font-size="9.5" fill="#a52a3a" font-style="italic" stroke="#fff" stroke-width="1.8" paint-order="stroke" stroke-opacity="0.8" text-anchor="middle">26</text>
<text x="302" y="332" font-size="9.5" fill="#a52a3a" font-style="italic" stroke="#fff" stroke-width="1.8" paint-order="stroke" stroke-opacity="0.8" text-anchor="middle">31</text>
<text x="316" y="303" font-size="9.5" fill="#a52a3a" font-style="italic" stroke="#fff" stroke-width="1.8" paint-order="stroke" stroke-opacity="0.8" text-anchor="middle">32</text>
<text x="343" y="272" font-size="9.5" fill="#a52a3a" font-style="italic" stroke="#fff" stroke-width="1.8" paint-order="stroke" stroke-opacity="0.8" text-anchor="middle">33</text>
<text x="381" y="248" font-size="9.5" fill="#a52a3a" font-style="italic" stroke="#fff" stroke-width="1.8" paint-order="stroke" stroke-opacity="0.8" text-anchor="middle">34</text>
<text x="388" y="203" font-size="9.5" fill="#a52a3a" font-style="italic" stroke="#fff" stroke-width="1.8" paint-order="stroke" stroke-opacity="0.8" text-anchor="middle">15</text>
<text x="416" y="40" font-size="9.5" fill="#a52a3a" font-style="italic" stroke="#fff" stroke-width="1.8" paint-order="stroke" stroke-opacity="0.8" text-anchor="middle">45</text>
<text x="410" y="202" font-size="9.5" fill="#a52a3a" font-style="italic" stroke="#fff" stroke-width="1.8" paint-order="stroke" stroke-opacity="0.8" text-anchor="middle">35W</text>
<text x="412" y="215" font-size="9.5" fill="#a52a3a" font-style="italic" stroke="#fff" stroke-width="1.8" paint-order="stroke" stroke-opacity="0.8" text-anchor="middle">35</text>
<text x="403" y="226" font-size="9.5" fill="#a52a3a" font-style="italic" stroke="#fff" stroke-width="1.8" paint-order="stroke" stroke-opacity="0.8" text-anchor="middle">35A-B</text>
<text x="4" y="75" font-size="9.5" fill="#a52a3a" font-style="italic" stroke="#fff" stroke-width="1.8" paint-order="stroke" stroke-opacity="0.8" text-anchor="middle">18E</text>
<text x="5" y="88" font-size="9.5" fill="#a52a3a" font-style="italic" stroke="#fff" stroke-width="1.8" paint-order="stroke" stroke-opacity="0.8" text-anchor="middle">16E</text>
<text x="2" y="320" font-size="9.5" fill="#a52a3a" font-style="italic" stroke="#fff" stroke-width="1.8" paint-order="stroke" stroke-opacity="0.8" text-anchor="middle">8</text>
<circle cx="290" cy="106" r="1.3" fill="#000"/><circle cx="308" cy="116" r="0.9" fill="#000"/>
<path d="M155.4,322.7 L145.00,312.20 A14.85,14.85 0 1 1 165.80,312.20 Z" fill="#1c2e3c" opacity="0.6" transform="translate(2,1.5)" stroke="#1c2e3c" stroke-width="0.8" stroke-linejoin="round"/><path d="M155.4,322.7 L145.00,312.20 A14.85,14.85 0 1 1 165.80,312.20 Z" fill="#3b86d8" stroke="#3b86d8" stroke-width="0.8" stroke-linejoin="round"/><circle cx="155.4" cy="301.59999999999997" r="4.6" fill="#3178c6"/>
<path d="M184.7,257.3 L174.30,246.80 A14.85,14.85 0 1 1 195.10,246.80 Z" fill="#1c2e3c" opacity="0.6" transform="translate(2,1.5)" stroke="#1c2e3c" stroke-width="0.8" stroke-linejoin="round"/><path d="M184.7,257.3 L174.30,246.80 A14.85,14.85 0 1 1 195.10,246.80 Z" fill="#3b86d8" stroke="#3b86d8" stroke-width="0.8" stroke-linejoin="round"/><circle cx="184.7" cy="236.20000000000002" r="4.6" fill="#3178c6"/>
<path d="M203.9,234.5 L193.50,224.00 A14.85,14.85 0 1 1 214.30,224.00 Z" fill="#1c2e3c" opacity="0.6" transform="translate(2,1.5)" stroke="#1c2e3c" stroke-width="0.8" stroke-linejoin="round"/><path d="M203.9,234.5 L193.50,224.00 A14.85,14.85 0 1 1 214.30,224.00 Z" fill="#3b86d8" stroke="#3b86d8" stroke-width="0.8" stroke-linejoin="round"/><circle cx="203.9" cy="213.4" r="4.6" fill="#3178c6"/>
<path d="M215.4,186.2 L205.00,175.70 A14.85,14.85 0 1 1 225.80,175.70 Z" fill="#1c2e3c" opacity="0.6" transform="translate(2,1.5)" stroke="#1c2e3c" stroke-width="0.8" stroke-linejoin="round"/><path d="M215.4,186.2 L205.00,175.70 A14.85,14.85 0 1 1 225.80,175.70 Z" fill="#3b86d8" stroke="#3b86d8" stroke-width="0.8" stroke-linejoin="round"/><circle cx="215.4" cy="165.1" r="4.6" fill="#3178c6"/>
<path d="M260.5,107.6 L250.10,97.10 A14.85,14.85 0 1 1 270.90,97.10 Z" fill="#1c2e3c" opacity="0.6" transform="translate(2,1.5)" stroke="#1c2e3c" stroke-width="0.8" stroke-linejoin="round"/><path d="M260.5,107.6 L250.10,97.10 A14.85,14.85 0 1 1 270.90,97.10 Z" fill="#3b86d8" stroke="#3b86d8" stroke-width="0.8" stroke-linejoin="round"/><circle cx="260.5" cy="86.5" r="4.6" fill="#3178c6"/>
<path d="M194.4,177.7 L184.00,167.20 A14.85,14.85 0 1 1 204.80,167.20 Z" fill="#1c2e3c" opacity="0.6" transform="translate(2,1.5)" stroke="#1c2e3c" stroke-width="0.8" stroke-linejoin="round"/><path d="M194.4,177.7 L184.00,167.20 A14.85,14.85 0 1 1 204.80,167.20 Z" fill="#3b86d8" stroke="#3b86d8" stroke-width="0.8" stroke-linejoin="round"/><circle cx="194.4" cy="156.6" r="4.6" fill="#3178c6"/>
<path d="M158.1,254.2 L147.70,243.70 A14.85,14.85 0 1 1 168.50,243.70 Z" fill="#1c2e3c" opacity="0.6" transform="translate(2,1.5)" stroke="#1c2e3c" stroke-width="0.8" stroke-linejoin="round"/><path d="M158.1,254.2 L147.70,243.70 A14.85,14.85 0 1 1 168.50,243.70 Z" fill="#3b86d8" stroke="#3b86d8" stroke-width="0.8" stroke-linejoin="round"/><circle cx="158.1" cy="233.1" r="4.6" fill="#3178c6"/><g transform="translate(12,11)"><rect x="11.2" y="10.9" width="24.7" height="50.4" fill="#4f86e6" opacity="0.7"/><rect x="11.2" y="35.9" width="24.7" height="0.8" fill="#fff" opacity="0.7"/><text x="23.4" y="29.3" font-size="17" font-weight="bold" fill="#fff" stroke="#fff" stroke-width="0.8" text-anchor="middle" font-family="Liberation Sans, sans-serif">+</text><text x="23.4" y="55.3" font-size="17" font-weight="bold" fill="#fff" stroke="#fff" stroke-width="0.9" text-anchor="middle" font-family="Liberation Sans, sans-serif">−</text><rect x="224" y="371" width="170" height="22" fill="#fff" opacity="0.75"/><text x="228.4" y="386.6" font-size="11.45" fill="#111" font-family="Liberation Sans, sans-serif">© <tspan fill="#1a6fc4" text-decoration="underline">OpenStreetMap</tspan> contributors.</text></g></svg></div>
<div class="t " style="left:24.6px;top:517px;font-size:15px;color:#b22cb8;letter-spacing:0.139px;">Loby Matise</div>
<div class="t " style="left:116.6px;top:517px;font-size:15px;color:#1a1a1a;letter-spacing:0.233px;">Zinc Building</div>
<div class="t " style="left:42px;top:536px;font-size:11.5px;color:#1a1a1a;letter-spacing:-0.066px;">475 Greenwich Street, New York, NY 10013</div>
<div class="a" style="left:24px;top:554px;width:375px;height:1px;background:#b8b8c0;"></div>
<div class="t " style="left:24.6px;top:564px;font-size:15px;color:#b22cb8;letter-spacing:0.197px;">Joe Martin</div>
<div class="t " style="left:105.4px;top:564px;font-size:15px;color:#1a1a1a;letter-spacing:0.364px;">Doughnut Plant</div>
<div class="t " style="left:42px;top:583px;font-size:11.5px;color:#1a1a1a;letter-spacing:-0.06px">220 West 23rd Street, New York, NY 10011</div>
<div class="a" style="left:24px;top:601px;width:375px;height:1px;background:#b8b8c0;"></div>
<div class="t " style="left:24.6px;top:611px;font-size:15px;color:#b22cb8;letter-spacing:-0.212px;">Susi Sanna</div>
<div class="t " style="left:108.5px;top:611px;font-size:15px;color:#1a1a1a;letter-spacing:0.330px;">Tiffany</div>
<div class="t " style="left:42px;top:630px;font-size:11.5px;color:#1a1a1a;letter-spacing:-0.06px">727 5th Avenue, New York, NY 10022</div>
<div class="a" style="left:24px;top:648px;width:375px;height:1px;background:#b8b8c0;"></div>
<div class="t " style="left:24.6px;top:658px;font-size:15px;color:#b22cb8;letter-spacing:-0.019px;">Fred Landis</div>
<div class="t " style="left:112.3px;top:658px;font-size:15px;color:#1a1a1a;letter-spacing:0.562px;">Marimekko</div>
<div class="a" style="left:24px;top:695px;width:375px;height:1px;background:#b8b8c0;"></div>
<div class="a" style="left:460px;top:52px;width:150px;height:630px;background:#fff;border:1px solid #828790;box-sizing:border-box"></div>
<div class="a" style="left:461px;top:53px;width:139px;height:100px;overflow:hidden">
<svg class="a" style="left:0;top:0" width="60" height="100" viewBox="0 0 60 100"><path d="M5.5,13 V79 M6,27.5 H22 M6,44.5 H12 M6,61.5 H12 M6,78.5 H12" stroke="#8a8a8a" stroke-width="1" stroke-dasharray="1 1" fill="none"/><rect x="1.5" y="4.5" width="8" height="8" fill="#fff" stroke="#111" stroke-width="1"/><path d="M3.2,8.5 H7.8" stroke="#111" stroke-width="1.1"/><rect x="12.5" y="38.0" width="8" height="8" fill="#fff" stroke="#111" stroke-width="1"/><path d="M14.2,42.0 H18.8" stroke="#111" stroke-width="1.1"/><path d="M16.5,39.7 V44.3" stroke="#111" stroke-width="1.1"/><rect x="12.5" y="55.0" width="8" height="8" fill="#fff" stroke="#111" stroke-width="1"/><path d="M14.2,59.0 H18.8" stroke="#111" stroke-width="1.1"/><path d="M16.5,56.7 V61.3" stroke="#111" stroke-width="1.1"/><rect x="12.5" y="72.0" width="8" height="8" fill="#fff" stroke="#111" stroke-width="1"/><path d="M14.2,76.0 H18.8" stroke="#111" stroke-width="1.1"/><path d="M16.5,73.7 V78.3" stroke="#111" stroke-width="1.1"/><path d="M13,3.5 h6 v-2.5 h5.5 v13 h-5.5 v-2.5 h-6 z" fill="#e4ecff" stroke="#8fa8e8" stroke-width="0.9"/><g fill="#fff" stroke="#2a48d0" stroke-width="1.1"><rect x="14.5" y="6" width="2.6" height="2.6"/><rect x="20" y="2.2" width="2.6" height="2.6"/><rect x="20" y="6" width="2.6" height="2.6"/><rect x="20" y="9.9" width="2.6" height="2.6"/></g><path d="M17.1,7.3 H20 M18.6,3.5 V11.2 M18.6,3.5 H20 M18.6,11.2 H20" stroke="#2a48d0" stroke-width="0.8" fill="none"/><rect x="25.5" y="19.5" width="11" height="12" rx="2" fill="#f4f4ff" stroke="#777" stroke-width="1"/><circle cx="31" cy="25.5" r="3.6" fill="none" stroke="#8a90d8" stroke-width="0.9"/><circle cx="31" cy="25.5" r="1.9" fill="#3038c0"/><rect x="25.5" y="36.5" width="11" height="11" rx="2.2" fill="#cfe8c6" stroke="#2e8b2e" stroke-width="1.1"/><path d="M28.8,39 h4.4 v3.4 h-4.4 z M27.8,42.6 h6.4 M31,42.6 v3.2" fill="none" stroke="#1d6a1d" stroke-width="1.1"/><path d="M28.5,53.5 H36.5 V65.5 H25.5 V56.5 Z" fill="#fff" stroke="#222" stroke-width="1"/><path d="M28.5,53.5 V56.5 H25.5" fill="none" stroke="#222" stroke-width="0.8"/><path d="M28.5,70.5 H36.5 V82.5 H25.5 V73.5 Z" fill="#fff" stroke="#222" stroke-width="1"/><path d="M28.5,70.5 V73.5 H25.5" fill="none" stroke="#222" stroke-width="0.8"/></svg>
<div class="t" style="left:30px;top:2px;font-size:11.8px;color:#111;transform:scaleX(0.9425);transform-origin:0 0;">Sources</div>
<div class="t" style="left:41.80000000000001px;top:20px;font-size:11.8px;color:#111;transform:scaleX(0.9065);transform-origin:0 0;">$MT_GEOLOCATION</div>
<div class="t" style="left:41.80000000000001px;top:36px;font-size:11.8px;color:#111;transform:scaleX(0.8282);transform-origin:0 0;">$PERSISTENT</div>
<div class="t" style="left:41.80000000000001px;top:53px;font-size:11.8px;color:#111;transform:scaleX(0.8927);transform-origin:0 0;">$TODO</div>
<div class="t" style="left:41.80000000000001px;top:70px;font-size:11.8px;color:#111;transform:scaleX(0.8158);transform-origin:0 0;">$USER</div>
<div class="t" style="left:81.20000000000005px;top:70px;font-size:11.8px;color:#777;transform:scaleX(1.0453);transform-origin:0 0;">&lt;Client only&gt;</div>
</div>
<div class="a" style="left:599px;top:105px;width:1px;height:8px;background:#222;"></div>
<div class="a" style="left:599px;top:173px;width:1px;height:9px;background:#222;"></div>
<div class="a" style="left:599px;top:49px;width:1px;height:5px;background:#456;"></div>
</div>
<div class="a" style="left:0;top:0;width:1198px;height:673px;overflow:hidden;clip-path:inset(0 0 0 600px)">
<div class="a" style="left:600px;top:0px;width:1px;height:673px;background:#fff;"></div>
<div class="a" style="left:613px;top:16px;width:474px;height:670px;background:transparent;border:1px solid #dcdcdc;box-sizing:border-box"></div>
<div class="a" style="left:616px;top:11px;width:61px;height:12px;background:#f0f0f0;"></div>
<div class="t " style="left:618.4px;top:11px;font-size:12.5px;color:#111;letter-spacing:-0.236px;">Simulation</div>
<div class="a" style="left:1091px;top:0px;width:2px;height:673px;background:#d0d0d6;"></div>
<div class="a" style="left:1099px;top:16px;width:120px;height:670px;background:transparent;border:1px solid #dcdcdc;box-sizing:border-box"></div>
<div class="a" style="left:1101px;top:11px;width:75px;height:12px;background:#f0f0f0;"></div>
<div class="t " style="left:1103.2px;top:11px;font-size:12.5px;color:#111;letter-spacing:-0.669px;">Page Sources</div>
<svg class="a" style="left:627px;top:33px;overflow:visible" width="17" height="17" viewBox="0 0 17 17" ><path d="M0,8.2 L8,0.5 L8,4.8 L16,4.8 L16,12 L8,12 L8,16 Z" fill="#1b87c9"/></svg>
<svg class="a" style="left:731px;top:32px;overflow:visible" width="17" height="17" viewBox="0 0 17 17" ><rect x="1.2" y="1.4" width="6.4" height="8.2" rx="1.5" fill="#c3c3c3" stroke="#111" stroke-width="1.2"/><rect x="6.2" y="10.2" width="9.6" height="6.2" rx="1.5" fill="#c3c3c3" stroke="#111" stroke-width="1.2"/><path d="M9,3.2 Q12.8,3 12.8,7.5" fill="none" stroke="#1a33d8" stroke-width="1.3"/><path d="M10.4,6 L12.8,9 L15.2,6 Z" fill="#1a33d8"/></svg>
<div class="a" style="left:754px;top:30px;width:1px;height:22px;background:#cfcfcf"></div>
<svg class="a" style="left:762px;top:32px;overflow:visible" width="30" height="17" viewBox="0 0 30 17" ><g fill="#fff" stroke="#111" stroke-width="1.25"><path d="M9,5.2 V8.3 M1.9,11.2 V8.3 H16.2 V11.2" fill="none"/><rect x="7.1" y="1.6" width="3.8" height="3.6"/><rect x="2" y="11.2" width="4.4" height="4.4"/><rect x="11.6" y="11.2" width="4.4" height="4.4"/></g><path d="M22.8,8 L28.2,8 L25.5,11 Z" fill="#111"/></svg>
<div class="a" style="left:797px;top:30px;width:1px;height:22px;background:#cfcfcf"></div>
<svg class="a" style="left:803px;top:32px;overflow:visible" width="18" height="17" viewBox="0 0 18 17" ><rect x="1" y="1.5" width="8.5" height="12" rx="1.2" fill="#c4c6c9"/><rect x="2.2" y="4" width="6" height="6.5" fill="#cfe0f3"/><circle cx="12.3" cy="11.6" r="3" fill="none" stroke="#b9d9ee" stroke-width="1.6"/><path d="M13.5,7.2 L16.6,9.5 L13,10.6Z" fill="#b9d9ee"/><rect x="11.4" y="9" width="2" height="2" fill="#f0f0f0"/></svg>
<div class="a" style="left:827px;top:30px;width:1px;height:22px;background:#cfcfcf"></div>
<svg class="a" style="left:833px;top:32px;overflow:visible" width="18" height="17" viewBox="0 0 18 17" ><rect x="1" y="1.2" width="7" height="11.8" rx="1.3" fill="#c01010"/><rect x="3.6" y="3" width="3.6" height="7.5" fill="#fff"/><rect x="3.6" y="8.4" width="4" height="1.6" fill="#fff"/><g stroke="#18a018" stroke-width="0.95" fill="none" stroke-linecap="round"><path d="M10.4,7.6 L8.4,4.4 M13.6,7.6 L15.6,4.4"/><path d="M9.6,10 L7,8.4 M14.4,10 L17,8.4"/><path d="M9.4,12.4 L6.8,12.4 M14.6,12.4 L17.2,12.4"/><path d="M9.8,14.4 L7.8,17 M14.2,14.4 L16.2,17"/></g><ellipse cx="12" cy="11.9" rx="2.7" ry="4.1" fill="#35cc35" stroke="#0c7a0c" stroke-width="0.6"/><circle cx="12" cy="7.6" r="1.6" fill="#35cc35" stroke="#0c7a0c" stroke-width="0.5"/></svg>
<svg class="a" style="left:855px;top:32px;overflow:visible" width="18" height="17" viewBox="0 0 18 17" ><circle cx="4.6" cy="5.5" r="3.8" fill="#e3141c"/><g stroke="#18a018" stroke-width="0.95" fill="none" stroke-linecap="round"><path d="M10.4,7.6 L8.4,4.4 M13.6,7.6 L15.6,4.4"/><path d="M9.6,10 L7,8.4 M14.4,10 L17,8.4"/><path d="M9.4,12.4 L6.8,12.4 M14.6,12.4 L17.2,12.4"/><path d="M9.8,14.4 L7.8,17 M14.2,14.4 L16.2,17"/></g><ellipse cx="12" cy="11.9" rx="2.7" ry="4.1" fill="#35cc35" stroke="#0c7a0c" stroke-width="0.6"/><circle cx="12" cy="7.6" r="1.6" fill="#35cc35" stroke="#0c7a0c" stroke-width="0.5"/></svg>
<svg class="a" style="left:877px;top:32px;overflow:visible" width="18" height="17" viewBox="0 0 18 17" ><path d="M3.2,2 L8,2 L6,6 L8.6,6 L2.6,13.5 L3.8,8.2 L1.2,8.2 Z" fill="#f6c891" stroke="#7a5a2a" stroke-width="0.8"/><g stroke="#18a018" stroke-width="0.95" fill="none" stroke-linecap="round"><path d="M10.4,7.6 L8.4,4.4 M13.6,7.6 L15.6,4.4"/><path d="M9.6,10 L7,8.4 M14.4,10 L17,8.4"/><path d="M9.4,12.4 L6.8,12.4 M14.6,12.4 L17.2,12.4"/><path d="M9.8,14.4 L7.8,17 M14.2,14.4 L16.2,17"/></g><ellipse cx="12" cy="11.9" rx="2.7" ry="4.1" fill="#35cc35" stroke="#0c7a0c" stroke-width="0.6"/><circle cx="12" cy="7.6" r="1.6" fill="#35cc35" stroke="#0c7a0c" stroke-width="0.5"/></svg>
<div class="a" style="left:901px;top:30px;width:1px;height:22px;background:#cfcfcf"></div>
<svg class="a" style="left:907px;top:32px;overflow:visible" width="18" height="17" viewBox="0 0 18 17" ><path d="M3.5,2.0 h7 q1.8,0.6 0,3 h-6.5 v6 h-2 q-2,-1.2 0,-3 h1.5 z" fill="#f1efdc" stroke="#c9c9c0" stroke-width="1"/><path d="M2,11.0 h7 q1.5,1.5 0,3 h-7 q-1.6,-1.5 0,-3z" fill="#f1efdc" stroke="#c9c9c0" stroke-width="1"/><path d="M5,5.0h5 M5,7.0h5 M5,9.0h4" stroke="#c9c9c0" stroke-width="0.8"/><rect x="9" y="9" width="7" height="6.5" fill="#bdbdbd"/></svg>
<svg class="a" style="left:929px;top:32px;overflow:visible" width="18" height="17" viewBox="0 0 18 17" ><path d="M3.5,2.0 h7 q1.8,0.6 0,3 h-6.5 v6 h-2 q-2,-1.2 0,-3 h1.5 z" fill="#f1efdc" stroke="#c9c9c0" stroke-width="1"/><path d="M2,11.0 h7 q1.5,1.5 0,3 h-7 q-1.6,-1.5 0,-3z" fill="#f1efdc" stroke="#c9c9c0" stroke-width="1"/><path d="M5,5.0h5 M5,7.0h5 M5,9.0h4" stroke="#c9c9c0" stroke-width="0.8"/><path d="M7.5,9 L11.5,12.2 L7.5,15.5Z M11.5,9 L15.8,12.2 L11.5,15.5Z" fill="#b8dfae"/></svg>
<svg class="a" style="left:951px;top:32px;overflow:visible" width="18" height="17" viewBox="0 0 18 17" ><path d="M3.5,2.0 h7 q1.8,0.6 0,3 h-6.5 v6 h-2 q-2,-1.2 0,-3 h1.5 z" fill="#f1efdc" stroke="#c9c9c0" stroke-width="1"/><path d="M2,11.0 h7 q1.5,1.5 0,3 h-7 q-1.6,-1.5 0,-3z" fill="#f1efdc" stroke="#c9c9c0" stroke-width="1"/><path d="M5,5.0h5 M5,7.0h5 M5,9.0h4" stroke="#c9c9c0" stroke-width="0.8"/><rect x="8" y="10" width="8.5" height="5.8" fill="#bdbdbd"/><rect x="12.5" y="8.3" width="3" height="2" fill="#bdbdbd"/><circle cx="12.2" cy="13" r="1.6" fill="#f0f0f0"/></svg>
<div class="t" style="left:1117px;top:35px;font-family:'Liberation Mono',monospace;font-weight:bold;font-size:8.3px;color:#111">X</div>
<div class="t" style="left:1111.8px;top:42px;font-family:'Liberation Mono',monospace;font-weight:bold;font-size:7.3px;color:#111;letter-spacing:-0.58px">PATH</div>
<div class="a" style="left:1135px;top:30px;width:1px;height:22px;background:#cfcfcf"></div>
<svg class="a" style="left:1141px;top:32px;overflow:visible" width="18" height="17" viewBox="0 0 18 17" ><rect x="1.2" y="1.4" width="10" height="10.6" rx="2" fill="#eaf5e6" stroke="#2a8a2a" stroke-width="1.2"/><path d="M4,4.2 H8.4 V9 M5.8,6.6 H8.4" fill="none" stroke="#2a8a2a" stroke-width="1.2"/><path d="M4,5 L16,16.5 M15.5,5 L4,16.5" stroke="#b4151b" stroke-width="1.5" fill="none"/></svg>
<svg class="a" style="left:1163px;top:32px;overflow:visible" width="18" height="17" viewBox="0 0 18 17" ><path d="M1.2,1.2 L9.6,5.3 L1.2,9.6 Z" fill="#35b52e" stroke="#1d7a1d" stroke-width="0.6"/><path d="M8.4,11 A3.4,3.4 0 0 1 14.6,10.2" fill="none" stroke="#35b52e" stroke-width="1.5"/><path d="M15.2,13.4 A3.4,3.4 0 0 1 9,14.2" fill="none" stroke="#35b52e" stroke-width="1.5"/><path d="M13,9.2 L16,9 L15.4,12Z M11.2,15.2 L8.2,15.4 L8.8,12.4Z" fill="#35b52e"/></svg>
<div class="a" style="left:1187px;top:30px;width:1px;height:22px;background:#cfcfcf"></div>
<div class="a" style="left:1193px;top:32px;width:5px;height:18px;overflow:hidden"><svg width="17" height="18" viewBox="0 0 17 18"><g fill="#4a4a4a"><rect x="2" y="1" width="4" height="3" rx="0.8"/><rect x="10.6" y="1" width="4" height="3" rx="0.8"/><path d="M1.6,4 H6.6 L7.2,16.6 H0.6 Z"/><path d="M10.2,4 H15.2 L16.2,16.6 H9.6 Z"/><rect x="6.4" y="5.5" width="4" height="5" /></g><rect x="1.2" y="11.6" width="5.6" height="1.4" fill="#c8c8c8"/><rect x="10" y="11.6" width="5.6" height="1.4" fill="#c8c8c8"/><rect x="2.4" y="5" width="1.3" height="6" fill="#8a8a8a"/><rect x="11.2" y="5" width="1.3" height="6" fill="#8a8a8a"/><rect x="7.8" y="6.5" width="1.2" height="3" fill="#d8d8d8"/></svg></div>
<div class="a" style="left:623px;top:53px;width:453px;height:620px;background:#2f2f2f;"></div>
<div class="a" style="left:623px;top:73px;width:453px;height:2px;background:#6a6a6a;"></div>
<div class="t " style="left:634.2px;top:60px;font-size:6.2px;color:#fff;font-weight:700;">Todo</div>
<div class="a" style="left:1057px;top:75px;width:18px;height:598px;background:#f0f0f0;border-left:1px solid #888"></div>
<div class="a" style="left:1075px;top:53px;width:1px;height:620px;background:#888;"></div>
<svg class="a" style="left:1061px;top:80px" width="11" height="7"><path d="M0.5,6.5 L5.5,1 L10.5,6.5Z" fill="#d0d0d0"/></svg>
<div class="t " style="left:714.5px;top:77px;font-size:14px;color:#b8b8b8;letter-spacing:0.038px;">Below is the list of 7 deliveries for today:</div>
<div class="a" style="left:628px;top:96px;width:424px;height:23px;background:#585858;border-radius:3px"></div>
<div class="t " style="left:789.5px;top:99px;font-size:16.3px;color:#f0f0f0;letter-spacing:-0.017px;">Start Delivery!</div>
<div class="a" style="left:628px;top:127px;width:418px;height:418px;overflow:hidden"><svg width="418" height="418" viewBox="0 0 418 418" font-family="DejaVu Sans, Liberation Sans, sans-serif" style="display:block"><defs>
<pattern id="gmb" width="9.6" height="2.8" patternUnits="userSpaceOnUse" patternTransform="rotate(28.5) translate(4.5,2)">
<rect width="9.6" height="2.8" fill="#f7f6ee"/>
<rect x="2.4" y="0.5" width="2.9" height="1.8" fill="#dcdad4"/>
<rect x="6.7" y="0.5" width="2.8" height="1.8" fill="#dcdad4"/>
<rect x="5.2" y="0" width="1.6" height="2.8" fill="#f6f7be"/>
<rect x="0" y="0" width="2.5" height="2.8" fill="#fbd5a0"/>
</pattern>
<pattern id="gmmb" width="9.4" height="5.6" patternUnits="userSpaceOnUse" patternTransform="rotate(28.5) translate(4.5,2)">
<rect width="9.4" height="5.6" fill="#f5f6bd"/>
<rect x="3.1" y="1.2" width="5.3" height="3.3" fill="#d9d7d1"/><rect x="3.1" y="2.6" width="5.3" height="0.5" fill="#ecebe6"/>
<rect x="0" y="0" width="2.1" height="5.6" fill="#fbd7a4"/>
</pattern>
<pattern id="gm2b" width="18.8" height="8.4" patternUnits="userSpaceOnUse" patternTransform="rotate(28.5) translate(4.5,2)">
<rect width="18.8" height="8.4" fill="#dedcd6"/>
<rect x="0" y="2.9" width="18.8" height="0.6" fill="#f6f5f0"/><rect x="0" y="5.7" width="18.8" height="0.6" fill="#f6f5f0"/>
<rect x="4.7" y="0" width="0.6" height="8.4" fill="#f6f5f0"/><rect x="14.1" y="0" width="0.6" height="8.4" fill="#f6f5f0"/>
<rect x="0" y="0" width="18.8" height="1.6" fill="#f6f7be"/>
<rect x="9.4" y="0" width="1.8" height="8.4" fill="#f6f7be"/>
<rect x="0" y="0" width="2.1" height="8.4" fill="#fbd7a4"/>
</pattern>
<pattern id="gqb" width="8" height="3" patternUnits="userSpaceOnUse" patternTransform="rotate(-30)">
<rect width="8" height="3" fill="#f8f7f3"/>
<rect x="0.4" y="0.35" width="7.2" height="2.3" fill="#dfddd8"/>
</pattern>
<pattern id="gbb" width="9" height="3" patternUnits="userSpaceOnUse" patternTransform="rotate(-8)">
<rect width="9" height="3" fill="#f8f7f3"/>
<rect x="0.4" y="0.35" width="8.2" height="2.3" fill="#dfddd8"/>
</pattern>
<pattern id="gwb" width="8" height="3" patternUnits="userSpaceOnUse" patternTransform="rotate(60)">
<rect width="8" height="3" fill="#f8f7f3"/>
<rect x="0.4" y="0.35" width="7.2" height="2.3" fill="#dfddd8"/>
</pattern>
<pattern id="gjb" width="8" height="3.2" patternUnits="userSpaceOnUse" patternTransform="rotate(-4)">
<rect width="8" height="3.2" fill="#f8f7f3"/>
<rect x="0.4" y="0.35" width="7.2" height="2.5" fill="#dfddd8"/>
</pattern>
<pattern id="gjwb" width="8" height="3.2" patternUnits="userSpaceOnUse" patternTransform="rotate(-38)">
<rect width="8" height="3.2" fill="#f8f7f3"/>
<rect x="0.4" y="0.35" width="7.2" height="2.5" fill="#dfddd8"/>
</pattern>
<pattern id="ghb" width="7" height="3.2" patternUnits="userSpaceOnUse" patternTransform="rotate(102)">
<rect width="7" height="3.2" fill="#f8f7f0"/>
<rect x="0.4" y="0.4" width="6.2" height="2.4" fill="#e0ded8"/>
</pattern>
<pattern id="wetb" width="14" height="9" patternUnits="userSpaceOnUse">
<rect width="14" height="9" fill="#cdebb0"/>
<rect x="2" y="2" width="5" height="0.8" fill="#5aa7e0"/>
<rect x="9" y="6.5" width="4" height="0.8" fill="#5aa7e0"/>
</pattern>
</defs>
<rect x="-5" y="-5" width="430" height="430" fill="#aad3df"/>
<polygon points="-5,-5 205,-5 205,0 200,10 190,17 175,25 162,35 152,45 152,57 147,65 143,72 133,87 120,99 112,105 107,123 107,125 110,132 117,140 120,155 117,167 112,182 107,200 105,207 88,210 86,225 86,242 85,260 86,280 86,290 85,296.5 38,297 38,299.8 85,300.5 85,315 75,317 62,320 57,332 45,345 37,355 27,360 25,372 15,370 5,360 -5,357" fill="#e6e4e0" />
<polygon points="85,0 200,0 190,17 162,35 152,45 150,60 140,75 125,92 112,105 100,112 88,140 70,160 50,190 30,200 20,175 50,130 68,95 75,60 88,30" fill="url(#gqb)" />
<polygon points="88,140 100,112 108,125 118,142 120,155 116,170 110,190 105,207 80,205 60,200 70,170" fill="url(#ghb)" />
<polygon points="30,215 60,205 88,210 86,290 33,293 25,280 23,250" fill="url(#gjb)" />
<polygon points="0,205 30,200 32,225 23,260 25,293 10,312 0,318" fill="url(#gjwb)" />
<polygon points="28,122 50,112 62,118 70,150 62,185 55,200 30,203 0,215 0,165" fill="url(#gjwb)" />
<polygon points="52,0 72,0 66,14 60,24 50,18" fill="url(#wetb)" />
<polygon points="36,36 50,34 54,48 50,62 40,62 34,50" fill="url(#wetb)" />
<polygon points="0,80 18,78 24,95 22,114 8,118 0,112" fill="url(#wetb)" />
<polygon points="5,28 12,27 15,40 10,58 4,55" fill="#b5d6a3" />
<polygon points="0,0 10,0 8,18 0,24" fill="#dfeed0" />
<polygon points="0,118 18,122 30,150 10,160 0,150" fill="#dcdad6" />
<polygon points="14,0 36,0 40,20 30,30 18,22" fill="#dddbd8" />
<polygon points="33,300 85,300.5 85,315 75,317 62,320 57,332 45,345 37,355 27,360 25,372 15,370 5,360 0,357 0,330 10,320" fill="#c8facc" />
<polygon points="10,310 52,307 55,318 42,340 25,348 8,335" fill="#d8d4c8" />
<polygon points="0,338 22,350 18,362 0,352" fill="#f2efe9" />
<polygon points="60,341 70,339 75,346 68,351 61,349" fill="#c8facc" />
<ellipse cx="70" cy="344" rx="4.5" ry="3.5" fill="#c9b6c4"/>
<polygon points="47,377 56,374 61,380 55,386 48,384" fill="#c8facc" />
<ellipse cx="54" cy="380" rx="4.5" ry="3.5" fill="#c9b6c4"/>
<polygon points="133,372 143,367 151,369 154,380 146,390 130,398 118,403 110,397 112,389 124,380" fill="#c8facc" />
<polygon points="113,392 128,386 132,392 118,401" fill="#d9d0c9" />
<polygon points="112,388 118,387 117,394" fill="#d08f55" />
<polygon points="235,-5 235,0 230,15 220,35 207,57 200,72 190,90 180,105 172,120 167,135 165,150 162,168 160,187 156,207 152,232 149,255 146,275 142,290 137,300 135,320 139,331 150,336 160,333 175,317 195,307 225,301 245,299 255,290 258,275 262,255 267,230 258,205 265,182 275,165 287,142 300,125 312,105 322,92 332,80 341,65 350,56 353,47 348,32 350,21 363,11 368,0 368,-5" fill="url(#gmb)" />
<polygon points="160,190 200,178 262,205 267,230 262,255 255,290 245,299 195,307 160,333 150,336 139,331 135,320 137,300 146,275 152,232" fill="url(#gm2b)" />
<polygon points="160,200 185,196 190,228 170,245 152,240" fill="url(#gwb)" opacity="0.75"/>
<polygon points="225,225 262,212 266,232 262,255 240,262 228,245" fill="url(#gbb)" opacity="0.8"/>
<polygon points="140,295 160,290 175,315 160,332 140,330 136,315" fill="#dddad4" opacity="0.8"/>
<polygon points="207,57 242,71.5 266.5,84.5 322,92 312,105 300,125 287,142 275,165 265,182 262,205 200,178 160,190 165,150 172,120 190,90" fill="url(#gmmb)" />
<clipPath id="cmb"><polygon points="235,-5 235,0 230,15 220,35 207,57 200,72 190,90 180,105 172,120 167,135 165,150 162,168 160,187 156,207 152,232 149,255 146,275 142,290 137,300 135,320 139,331 150,336 160,333 175,317 195,307 225,301 245,299 255,290 258,275 262,255 267,230 258,205 265,182 275,165 287,142 300,125 312,105 322,92 332,80 341,65 350,56 353,47 348,32 350,21 363,11 368,0 368,-5"/></clipPath>
<g clip-path="url(#cmb)"><polyline points="168.2,18.9 352.7,119.1" fill="none" stroke="#f6f7be" stroke-width="1.7" stroke-linejoin="round" stroke-linecap="round" /><polyline points="174.4,7.5 359.0,107.7" fill="none" stroke="#f6f7be" stroke-width="1.7" stroke-linejoin="round" stroke-linecap="round" /><polyline points="180.6,-3.9 365.2,96.3" fill="none" stroke="#f6f7be" stroke-width="1.7" stroke-linejoin="round" stroke-linecap="round" /><polyline points="186.8,-15.3 371.4,84.8" fill="none" stroke="#f6f7be" stroke-width="1.7" stroke-linejoin="round" stroke-linecap="round" /><polyline points="193.1,-26.7 377.7,73.4" fill="none" stroke="#f6f7be" stroke-width="1.7" stroke-linejoin="round" stroke-linecap="round" /><polyline points="199.3,-38.2 383.9,62.0" fill="none" stroke="#f6f7be" stroke-width="1.7" stroke-linejoin="round" stroke-linecap="round" /><polyline points="205.5,-49.6 390.1,50.6" fill="none" stroke="#f6f7be" stroke-width="1.7" stroke-linejoin="round" stroke-linecap="round" /></g>
<polygon points="242,71.5 266.5,84.5 315.3,-5 283.7,-5" fill="#c8facc" />
<polygon points="263,42 272,38 286,40 287,50 276,56 266,54" fill="#b9dca8" />
<polygon points="262,44 268,42 270,50 264,52" fill="#b5d9e8" />
<polygon points="283.4,3.6 308.4,3.6 308.4,11.9 298.9,26.2 291.8,21.4 282.3,10.7" fill="#aad3df" />
<polygon points="270,25 275.4,25 272.7,19.5" fill="#d08f55" />
<polygon points="272.4,39.5 277.8,39.5 275.1,34" fill="#d08f55" />
<polygon points="355,61 359,64 347,92 330,115 311,141 307,139 326,110 342,88" fill="#e4e2dc" />
<polyline points="353,72 352,80 338,100 322,122" fill="none" stroke="#ffffff" stroke-width="0.8" stroke-linejoin="round" stroke-linecap="round" />
<polygon points="380,-5 377,6 373,14 375,21 384,25 389,24 400,28 412,24 418,19 425,15 425,-5" fill="#e8f3e0" />
<polygon points="388,12 409,12 409,25 395,26 388,22" fill="#c8facc" />
<polygon points="378,4 386,2 384,14 377,14" fill="#c8facc" />
<polygon points="404,-5 425,-5 425,14 416,16 408,8" fill="#ebdbe8" />
<polygon points="425,37 418,39 409,41 397,43 389,47 384,42 375,41 370,46 367,55 368,62 374,66 375,71 368,77 360,82 351,90 341,102 331,117 321,133 312,143 305,155 297,170 294,187 296,207 297,230 293,250 287,268 279,288 275,300 274,314 270,320 262,318 258,330 248,332 244,322 236,324 225,327 210,332 195,340 190,355 186,372 180,384 172,398 163,408 155,418 150,425 425,425" fill="#e7e5e1" />
<polygon points="425,37 397,43 389,47 375,41 367,55 374,66 370,77 354,90 344,102 372,115 400,95 425,88" fill="url(#gqb)" />
<polygon points="344,102 372,115 400,95 425,88 425,140 380,150 340,165 315,143 334,117" fill="url(#gqb)" />
<polygon points="297,170 315,160 335,175 322,190 296,197" fill="url(#gbb)" />
<polygon points="296,207 322,200 330,225 345,265 320,292 300,300 279,290 293,250 297,230" fill="url(#gbb)" />
<polygon points="300,300 320,292 345,265 375,240 418,250 425,260 425,425 150,425 163,408 180,384 190,355 197,340 225,330 250,335 274,330" fill="url(#gbb)" />
<polygon points="350,262 395,243 425,250 425,330 380,350 340,330 330,300" fill="url(#gwb)" />
<polygon points="362,225 395,235 425,215 425,250 395,243 375,238" fill="url(#gqb)" />
<polygon points="330,197 350,197 357,212 350,222 332,222" fill="#ebdbe8" />
<polygon points="380,142 405,135 410,152 388,160" fill="#ebdbe8" />
<polygon points="370,210 400,202 405,210 390,227 375,222" fill="#aacbaf" />
<polygon points="362,160 418,138 418,150 368,170" fill="#e3e0e3" />
<polygon points="395,262 418,258 418,300 400,295" fill="#e6e3e0" />
<polygon points="244,322 262,318 270,320 274,314 278,330 270,345 250,345 238,335" fill="#e3dfe3" />
<polygon points="246,318 274,310 276,338 268,343 256,336 248,326" fill="#aad3df" />
<polyline points="252,322.0 255,336.0" fill="none" stroke="#dcd8dc" stroke-width="2" stroke-linejoin="round" stroke-linecap="round" />
<polyline points="258,320.5 261,335.5" fill="none" stroke="#dcd8dc" stroke-width="2" stroke-linejoin="round" stroke-linecap="round" />
<polyline points="264,319.0 267,335.0" fill="none" stroke="#dcd8dc" stroke-width="2" stroke-linejoin="round" stroke-linecap="round" />
<polyline points="270,317.5 273,334.5" fill="none" stroke="#dcd8dc" stroke-width="2" stroke-linejoin="round" stroke-linecap="round" />
<polygon points="195,340 225,330 240,350 235,372 205,380 190,365" fill="#eceadf" />
<polygon points="252,369 262,369 262,378 252,378" fill="#c8facc" />
<polygon points="286,366 296,366 296,374 286,374" fill="#c8facc" />
<polygon points="336,268 342,268 342,276 336,276" fill="#c8facc" />
<polygon points="323,245 329,243 331,252 325,254" fill="#c8facc" />
<polygon points="409,39 425,36 425,46 412,48 400,46" fill="#c8facc" />
<polyline points="178.0,90 168.0,112 157.0,150 148.0,200 140.0,250 133.0,300 128.0,330" fill="none" stroke="#6a7df0" stroke-width="0.9" stroke-linejoin="round" stroke-linecap="round" stroke-dasharray="3.5 5.5" stroke-dashoffset="0" stroke-linecap="butt" opacity="0.85"/>
<polyline points="179.6,90 169.6,112 158.6,150 149.6,200 141.6,250 134.6,300 129.6,330" fill="none" stroke="#6a7df0" stroke-width="0.9" stroke-linejoin="round" stroke-linecap="round" stroke-dasharray="3.5 5.5" stroke-dashoffset="0" stroke-linecap="butt" opacity="0.85"/>
<polyline points="181.2,90 171.2,112 160.2,150 151.2,200 143.2,250 136.2,300 131.2,330" fill="none" stroke="#6a7df0" stroke-width="0.9" stroke-linejoin="round" stroke-linecap="round" stroke-dasharray="3.5 5.5" stroke-dashoffset="0" stroke-linecap="butt" opacity="0.85"/>
<polyline points="170.0,88 160.0,110 150.0,150 140.0,200 132.0,250 126.0,300" fill="none" stroke="#6a7df0" stroke-width="0.9" stroke-linejoin="round" stroke-linecap="round" stroke-dasharray="3.5 5.5" stroke-dashoffset="4" stroke-linecap="butt" opacity="0.85"/>
<polyline points="171.6,88 161.6,110 151.6,150 141.6,200 133.6,250 127.6,300" fill="none" stroke="#6a7df0" stroke-width="0.9" stroke-linejoin="round" stroke-linecap="round" stroke-dasharray="3.5 5.5" stroke-dashoffset="4" stroke-linecap="butt" opacity="0.85"/>
<polyline points="170.0,130 160.0,180 153.0,230 146.0,280" fill="none" stroke="#6a7df0" stroke-width="0.9" stroke-linejoin="round" stroke-linecap="round" stroke-dasharray="3 6" stroke-dashoffset="2" stroke-linecap="butt" opacity="0.85"/>
<polyline points="171.5,130 161.5,180 154.5,230 147.5,280" fill="none" stroke="#6a7df0" stroke-width="0.9" stroke-linejoin="round" stroke-linecap="round" stroke-dasharray="3 6" stroke-dashoffset="2" stroke-linecap="butt" opacity="0.85"/>
<polyline points="173.0,130 163.0,180 156.0,230 149.0,280" fill="none" stroke="#6a7df0" stroke-width="0.9" stroke-linejoin="round" stroke-linecap="round" stroke-dasharray="3 6" stroke-dashoffset="2" stroke-linecap="butt" opacity="0.85"/>
<polyline points="150.0,95 132.0,150 120.0,200 110.0,250 104.0,300 98.0,340" fill="none" stroke="#6a7df0" stroke-width="0.9" stroke-linejoin="round" stroke-linecap="round" stroke-dasharray="3 5" stroke-dashoffset="0" stroke-linecap="butt" opacity="0.85"/>
<polyline points="135.0,120 125.0,170 112.0,230 103.0,290" fill="none" stroke="#6a7df0" stroke-width="0.9" stroke-linejoin="round" stroke-linecap="round" stroke-dasharray="3 7" stroke-dashoffset="3" stroke-linecap="butt" opacity="0.85"/>
<polyline points="136.6,120 126.6,170 113.6,230 104.6,290" fill="none" stroke="#6a7df0" stroke-width="0.9" stroke-linejoin="round" stroke-linecap="round" stroke-dasharray="3 7" stroke-dashoffset="3" stroke-linecap="butt" opacity="0.85"/>
<polyline points="122.0,230 112.0,290 102.0,340 87.0,385 77.0,418" fill="none" stroke="#6a7df0" stroke-width="0.9" stroke-linejoin="round" stroke-linecap="round" stroke-dasharray="3 5" stroke-dashoffset="0" stroke-linecap="butt" opacity="0.85"/>
<polyline points="123.6,230 113.6,290 103.6,340 88.6,385 78.6,418" fill="none" stroke="#6a7df0" stroke-width="0.9" stroke-linejoin="round" stroke-linecap="round" stroke-dasharray="3 5" stroke-dashoffset="0" stroke-linecap="butt" opacity="0.85"/>
<polyline points="128.0,240 120.0,290 112.0,335 98.0,380 86.0,418" fill="none" stroke="#6a7df0" stroke-width="0.9" stroke-linejoin="round" stroke-linecap="round" stroke-dasharray="3 6" stroke-dashoffset="3" stroke-linecap="butt" opacity="0.85"/>
<polyline points="129.6,240 121.6,290 113.6,335 99.6,380 87.6,418" fill="none" stroke="#6a7df0" stroke-width="0.9" stroke-linejoin="round" stroke-linecap="round" stroke-dasharray="3 6" stroke-dashoffset="3" stroke-linecap="butt" opacity="0.85"/>
<polyline points="112.0,330 102.0,365 92.0,400 88.0,418" fill="none" stroke="#6a7df0" stroke-width="0.9" stroke-linejoin="round" stroke-linecap="round" stroke-dasharray="3 5" stroke-dashoffset="1" stroke-linecap="butt" opacity="0.85"/>
<polyline points="113.6,330 103.6,365 93.6,400 89.6,418" fill="none" stroke="#6a7df0" stroke-width="0.9" stroke-linejoin="round" stroke-linecap="round" stroke-dasharray="3 5" stroke-dashoffset="1" stroke-linecap="butt" opacity="0.85"/>
<polyline points="115.2,330 105.2,365 95.2,400 91.2,418" fill="none" stroke="#6a7df0" stroke-width="0.9" stroke-linejoin="round" stroke-linecap="round" stroke-dasharray="3 5" stroke-dashoffset="1" stroke-linecap="butt" opacity="0.85"/>
<polyline points="150,62 172,68 186,95" fill="none" stroke="#6a7df0" stroke-width="0.9" stroke-linejoin="round" stroke-linecap="round" stroke-dasharray="3 2.5" opacity="0.9"/>
<polyline points="150,48 175,60" fill="none" stroke="#6a7df0" stroke-width="0.9" stroke-linejoin="round" stroke-linecap="round" stroke-dasharray="3 2.5" opacity="0.9"/>
<polyline points="215,0 190,45 168,85" fill="none" stroke="#6a7df0" stroke-width="0.8" stroke-linejoin="round" stroke-linecap="round" stroke-dasharray="5 4" opacity="0.9"/>
<polyline points="120,105 150,118 170,122" fill="none" stroke="#6a7df0" stroke-width="0.9" stroke-linejoin="round" stroke-linecap="round" stroke-dasharray="3 2.5" opacity="0.9"/>
<polyline points="118,118 150,140 166,142" fill="none" stroke="#6a7df0" stroke-width="0.9" stroke-linejoin="round" stroke-linecap="round" stroke-dasharray="3 2.5" opacity="0.9"/>
<polyline points="124,110 145,128 160,132" fill="none" stroke="#6a7df0" stroke-width="0.9" stroke-linejoin="round" stroke-linecap="round" stroke-dasharray="2 2" opacity="0.9"/>
<polyline points="108,208 130,212 150,240" fill="none" stroke="#6a7df0" stroke-width="0.9" stroke-linejoin="round" stroke-linecap="round" stroke-dasharray="3 2.5" opacity="0.9"/>
<polyline points="88,262 120,270 145,272" fill="none" stroke="#6a7df0" stroke-width="0.9" stroke-linejoin="round" stroke-linecap="round" stroke-dasharray="3 2.5" opacity="0.9"/>
<polyline points="108,204 125,200 140,210" fill="none" stroke="#6a7df0" stroke-width="0.9" stroke-linejoin="round" stroke-linecap="round" stroke-dasharray="2 2" opacity="0.9"/>
<polyline points="88,285 120,300 138,318" fill="none" stroke="#6a7df0" stroke-width="0.9" stroke-linejoin="round" stroke-linecap="round" stroke-dasharray="3 2.5" opacity="0.9"/>
<polyline points="60,300 100,310 135,325" fill="none" stroke="#6a7df0" stroke-width="0.9" stroke-linejoin="round" stroke-linecap="round" stroke-dasharray="3 2.5" opacity="0.9"/>
<polyline points="90,255 115,262 140,280" fill="none" stroke="#6a7df0" stroke-width="0.9" stroke-linejoin="round" stroke-linecap="round" stroke-dasharray="2 2" opacity="0.9"/>
<polyline points="75,350 100,345 135,335" fill="none" stroke="#6a7df0" stroke-width="0.9" stroke-linejoin="round" stroke-linecap="round" stroke-dasharray="3 2.5" opacity="0.9"/>
<polyline points="58,386 80,375 110,350 138,335" fill="none" stroke="#6a7df0" stroke-width="0.9" stroke-linejoin="round" stroke-linecap="round" stroke-dasharray="3 2.5" opacity="0.9"/>
<polyline points="45,390 55,395 70,385" fill="none" stroke="#6a7df0" stroke-width="0.9" stroke-linejoin="round" stroke-linecap="round" stroke-dasharray="3 2.5" opacity="0.9"/>
<polyline points="95,300 115,330 130,334" fill="none" stroke="#6a7df0" stroke-width="0.9" stroke-linejoin="round" stroke-linecap="round" stroke-dasharray="2 2" opacity="0.9"/>
<polyline points="90,290 110,320 128,338" fill="none" stroke="#6a7df0" stroke-width="0.9" stroke-linejoin="round" stroke-linecap="round" stroke-dasharray="2 2" opacity="0.9"/>
<polyline points="80,330 95,340 110,338" fill="none" stroke="#6a7df0" stroke-width="0.9" stroke-linejoin="round" stroke-linecap="round" stroke-dasharray="2 2" opacity="0.9"/>
<polyline points="70,360 90,368 100,350" fill="none" stroke="#6a7df0" stroke-width="0.9" stroke-linejoin="round" stroke-linecap="round" stroke-dasharray="2 2" opacity="0.9"/>
<polyline points="62,352 75,362 88,358" fill="none" stroke="#6a7df0" stroke-width="0.9" stroke-linejoin="round" stroke-linecap="round" stroke-dasharray="2 2" opacity="0.9"/>
<polyline points="148.0,340 158.0,365 168.0,385 158.0,400 146.0,414" fill="none" stroke="#6a7df0" stroke-width="1.1" stroke-linejoin="round" stroke-linecap="round" stroke-dasharray="2.5 2" stroke-dashoffset="0" stroke-linecap="butt" opacity="0.85"/>
<polyline points="151.0,340 161.0,365 171.0,385 161.0,400 149.0,414" fill="none" stroke="#6a7df0" stroke-width="1.1" stroke-linejoin="round" stroke-linecap="round" stroke-dasharray="2.5 2" stroke-dashoffset="0" stroke-linecap="butt" opacity="0.85"/>
<polyline points="154.0,340 164.0,365 174.0,385 164.0,400 152.0,414" fill="none" stroke="#6a7df0" stroke-width="1.1" stroke-linejoin="round" stroke-linecap="round" stroke-dasharray="2.5 2" stroke-dashoffset="0" stroke-linecap="butt" opacity="0.85"/>
<polyline points="157.0,340 167.0,365 177.0,385 167.0,400 155.0,414" fill="none" stroke="#6a7df0" stroke-width="1.1" stroke-linejoin="round" stroke-linecap="round" stroke-dasharray="2.5 2" stroke-dashoffset="0" stroke-linecap="butt" opacity="0.85"/>
<polyline points="120,405 140,398 160,385" fill="none" stroke="#6a7df0" stroke-width="0.9" stroke-linejoin="round" stroke-linecap="round" stroke-dasharray="2 2" opacity="0.9"/>
<polyline points="118,410 145,404 165,392" fill="none" stroke="#6a7df0" stroke-width="0.9" stroke-linejoin="round" stroke-linecap="round" stroke-dasharray="2 2" opacity="0.9"/>
<polyline points="122,414 150,408 168,396" fill="none" stroke="#6a7df0" stroke-width="0.9" stroke-linejoin="round" stroke-linecap="round" stroke-dasharray="2 2" opacity="0.9"/>
<polyline points="160,335 175,345 190,348" fill="none" stroke="#6a7df0" stroke-width="0.9" stroke-linejoin="round" stroke-linecap="round" stroke-dasharray="3 2.5" opacity="0.9"/>
<polyline points="170,325 200,320 225,312" fill="none" stroke="#6a7df0" stroke-width="0.9" stroke-linejoin="round" stroke-linecap="round" stroke-dasharray="3 2.5" opacity="0.9"/>
<polyline points="180,320 205,325 230,318" fill="none" stroke="#6a7df0" stroke-width="0.9" stroke-linejoin="round" stroke-linecap="round" stroke-dasharray="2 2" opacity="0.9"/>
<polyline points="165,338 180,350 186,365" fill="none" stroke="#6a7df0" stroke-width="0.9" stroke-linejoin="round" stroke-linecap="round" stroke-dasharray="2 2" opacity="0.9"/>
<polyline points="172,332 190,338 200,330" fill="none" stroke="#6a7df0" stroke-width="0.9" stroke-linejoin="round" stroke-linecap="round" stroke-dasharray="2 2" opacity="0.9"/>
<polyline points="200,318 225,312 248,308" fill="none" stroke="#6a7df0" stroke-width="0.9" stroke-linejoin="round" stroke-linecap="round" stroke-dasharray="3 4" stroke-dashoffset="0" stroke-linecap="butt" opacity="0.85"/>
<polyline points="200,318 225,312 248,308" fill="none" stroke="#6a7df0" stroke-width="0.9" stroke-linejoin="round" stroke-linecap="round" stroke-dasharray="3 4" stroke-dashoffset="0" stroke-linecap="butt" opacity="0.85"/>
<polyline points="200,318 225,312 248,308" fill="none" stroke="#6a7df0" stroke-width="0.9" stroke-linejoin="round" stroke-linecap="round" stroke-dasharray="3 4" stroke-dashoffset="0" stroke-linecap="butt" opacity="0.85"/>
<polyline points="205,312 228,307 246,304" fill="none" stroke="#6a7df0" stroke-width="1" stroke-linejoin="round" stroke-linecap="round" stroke-dasharray="3 3" stroke-dashoffset="0" stroke-linecap="butt" opacity="0.85"/>
<polyline points="205,316 228,311 246,308" fill="none" stroke="#6a7df0" stroke-width="1" stroke-linejoin="round" stroke-linecap="round" stroke-dasharray="3 3" stroke-dashoffset="0" stroke-linecap="butt" opacity="0.85"/>
<polyline points="205,320 228,315 246,312" fill="none" stroke="#6a7df0" stroke-width="1" stroke-linejoin="round" stroke-linecap="round" stroke-dasharray="3 3" stroke-dashoffset="0" stroke-linecap="butt" opacity="0.85"/>
<polyline points="262,300 270,270 275,240 272,205 285,170 300,145 320,115 340,85 355,60" fill="none" stroke="#6a7df0" stroke-width="0.9" stroke-linejoin="round" stroke-linecap="round" stroke-dasharray="3.5 5" stroke-dashoffset="0" stroke-linecap="butt" opacity="0.85"/>
<polyline points="264,300 272,270 277,240 274,205 287,170 302,145 322,115 342,85 357,60" fill="none" stroke="#6a7df0" stroke-width="0.9" stroke-linejoin="round" stroke-linecap="round" stroke-dasharray="3.5 5" stroke-dashoffset="0" stroke-linecap="butt" opacity="0.85"/>
<polyline points="266,300 274,270 279,240 276,205 289,170 304,145 324,115 344,85 359,60" fill="none" stroke="#6a7df0" stroke-width="0.9" stroke-linejoin="round" stroke-linecap="round" stroke-dasharray="3.5 5" stroke-dashoffset="0" stroke-linecap="butt" opacity="0.85"/>
<polyline points="270,300 279,270 284,240 282,205 293,172 308,147 328,117 346,88 360,62" fill="none" stroke="#6a7df0" stroke-width="0.9" stroke-linejoin="round" stroke-linecap="round" stroke-dasharray="3 6" stroke-dashoffset="3" stroke-linecap="butt" opacity="0.85"/>
<polyline points="272,300 281,270 286,240 284,205 295,172 310,147 330,117 348,88 362,62" fill="none" stroke="#6a7df0" stroke-width="0.9" stroke-linejoin="round" stroke-linecap="round" stroke-dasharray="3 6" stroke-dashoffset="3" stroke-linecap="butt" opacity="0.85"/>
<polyline points="355,60 362,40 380,36 418,30" fill="none" stroke="#6a7df0" stroke-width="0.9" stroke-linejoin="round" stroke-linecap="round" stroke-dasharray="4 3" opacity="0.9"/>
<polyline points="356,42 365,50 370,60" fill="none" stroke="#6a7df0" stroke-width="0.9" stroke-linejoin="round" stroke-linecap="round" stroke-dasharray="3 2.5" opacity="0.9"/>
<polyline points="230,310 250,308 262,300" fill="none" stroke="#6a7df0" stroke-width="0.9" stroke-linejoin="round" stroke-linecap="round" stroke-dasharray="2 2" opacity="0.9"/>
<polyline points="268,285 285,280 292,262" fill="none" stroke="#6a7df0" stroke-width="0.9" stroke-linejoin="round" stroke-linecap="round" stroke-dasharray="2 2" opacity="0.9"/>
<polyline points="262,238 280,232 294,235" fill="none" stroke="#6a7df0" stroke-width="0.9" stroke-linejoin="round" stroke-linecap="round" stroke-dasharray="2 2" opacity="0.9"/>
<polyline points="295,197 315,192 337,191 350,197 357,210 362,225 375,235 395,242 405,260 410,280 410,300 405,330" fill="none" stroke="#aad3df" stroke-width="2" stroke-linejoin="round" stroke-linecap="round" />
<polyline points="295,197 315,192 337,191 350,197 357,210 362,225 375,235 395,242 405,260 410,280 410,300 405,330" fill="none" stroke="#7aa5d8" stroke-width="0.9" stroke-linejoin="round" stroke-linecap="round" stroke-dasharray="5 2 1 2"/>
<polyline points="350,197 345,205 348,215" fill="none" stroke="#aad3df" stroke-width="2" stroke-linejoin="round" stroke-linecap="round" />
<polyline points="395,262 388,275 390,290" fill="none" stroke="#aad3df" stroke-width="1.5" stroke-linejoin="round" stroke-linecap="round" />
<polyline points="211,0 181,50 152.5,100 140,140 135,175 125,225 117,250 110,312 100,355 82,400 72,418" fill="none" stroke="#a070b0" stroke-width="1.6" stroke-linejoin="round" stroke-linecap="round" opacity="0.6"/>
<polyline points="198.0,74.0 187.5,68.3" fill="none" stroke="#f4f2ee" stroke-width="1.3" stroke-linejoin="round" stroke-linecap="round" />
<polyline points="195.5,78.4 185.0,72.7" fill="none" stroke="#f4f2ee" stroke-width="1.3" stroke-linejoin="round" stroke-linecap="round" />
<polyline points="193.0,82.8 182.5,77.1" fill="none" stroke="#f4f2ee" stroke-width="1.3" stroke-linejoin="round" stroke-linecap="round" />
<polyline points="190.5,87.2 180.0,81.5" fill="none" stroke="#f4f2ee" stroke-width="1.3" stroke-linejoin="round" stroke-linecap="round" />
<polyline points="188.0,91.6 177.5,85.9" fill="none" stroke="#f4f2ee" stroke-width="1.3" stroke-linejoin="round" stroke-linecap="round" />
<polyline points="185.5,96.0 175.0,90.3" fill="none" stroke="#f4f2ee" stroke-width="1.3" stroke-linejoin="round" stroke-linecap="round" />
<polyline points="183.0,100.4 172.5,94.7" fill="none" stroke="#f4f2ee" stroke-width="1.3" stroke-linejoin="round" stroke-linecap="round" />
<polyline points="180.5,104.80000000000001 170.0,99.1" fill="none" stroke="#f4f2ee" stroke-width="1.3" stroke-linejoin="round" stroke-linecap="round" />
<polyline points="178.0,109.2 167.5,103.5" fill="none" stroke="#f4f2ee" stroke-width="1.3" stroke-linejoin="round" stroke-linecap="round" />
<polyline points="152.0,215 145.0,214" fill="none" stroke="#f0eeea" stroke-width="1.2" stroke-linejoin="round" stroke-linecap="round" />
<polyline points="150.4,224 143.4,223" fill="none" stroke="#f0eeea" stroke-width="1.2" stroke-linejoin="round" stroke-linecap="round" />
<polyline points="148.8,233 141.8,232" fill="none" stroke="#f0eeea" stroke-width="1.2" stroke-linejoin="round" stroke-linecap="round" />
<polyline points="147.2,242 140.2,241" fill="none" stroke="#f0eeea" stroke-width="1.2" stroke-linejoin="round" stroke-linecap="round" />
<polyline points="145.6,251 138.6,250" fill="none" stroke="#f0eeea" stroke-width="1.2" stroke-linejoin="round" stroke-linecap="round" />
<polyline points="144.0,260 137.0,259" fill="none" stroke="#f0eeea" stroke-width="1.2" stroke-linejoin="round" stroke-linecap="round" />
<polyline points="142.4,269 135.4,268" fill="none" stroke="#f0eeea" stroke-width="1.2" stroke-linejoin="round" stroke-linecap="round" />
<polyline points="190.0,352 181.0,349" fill="none" stroke="#e9e7e3" stroke-width="1.6" stroke-linejoin="round" stroke-linecap="round" />
<polyline points="186.5,360 177.5,357" fill="none" stroke="#e9e7e3" stroke-width="1.6" stroke-linejoin="round" stroke-linecap="round" />
<polyline points="183.0,368 174.0,365" fill="none" stroke="#e9e7e3" stroke-width="1.6" stroke-linejoin="round" stroke-linecap="round" />
<polyline points="179.5,376 170.5,373" fill="none" stroke="#e9e7e3" stroke-width="1.6" stroke-linejoin="round" stroke-linecap="round" />
<polyline points="176.0,384 167.0,381" fill="none" stroke="#e9e7e3" stroke-width="1.6" stroke-linejoin="round" stroke-linecap="round" />
<polyline points="172.5,392 163.5,389" fill="none" stroke="#e9e7e3" stroke-width="1.6" stroke-linejoin="round" stroke-linecap="round" />
<polyline points="169.0,400 160.0,397" fill="none" stroke="#e9e7e3" stroke-width="1.6" stroke-linejoin="round" stroke-linecap="round" />
<polyline points="86,222 93,222" fill="none" stroke="#e9e7e3" stroke-width="1.5" stroke-linejoin="round" stroke-linecap="round" />
<polyline points="86,234 93,234" fill="none" stroke="#e9e7e3" stroke-width="1.5" stroke-linejoin="round" stroke-linecap="round" />
<polyline points="86,246 93,246" fill="none" stroke="#e9e7e3" stroke-width="1.5" stroke-linejoin="round" stroke-linecap="round" />
<polyline points="86,258 93,258" fill="none" stroke="#e9e7e3" stroke-width="1.5" stroke-linejoin="round" stroke-linecap="round" />
<polyline points="86,270 93,270" fill="none" stroke="#e9e7e3" stroke-width="1.5" stroke-linejoin="round" stroke-linecap="round" />
<polyline points="88,0 70,32 50,75 25,125 0,155" fill="none" stroke="#777" stroke-width="1.6" stroke-linejoin="round" stroke-linecap="round"  stroke-linecap="butt"/>
<polyline points="92,0 74,33 54,76 29,126 0,162" fill="none" stroke="#8a8a8a" stroke-width="0.8" stroke-linejoin="round" stroke-linecap="round"  stroke-linecap="butt"/>
<polyline points="0,100 30,85 60,78" fill="none" stroke="#8a8a8a" stroke-width="0.8" stroke-linejoin="round" stroke-linecap="round"  stroke-linecap="butt"/>
<polyline points="0,185 50,200 105,207" fill="none" stroke="#777" stroke-width="1.8" stroke-linejoin="round" stroke-linecap="round"  stroke-linecap="butt"/>
<polyline points="0,190 50,205 100,211" fill="none" stroke="#8a8a8a" stroke-width="0.8" stroke-linejoin="round" stroke-linecap="round"  stroke-linecap="butt"/>
<polyline points="10,240 20,265 5,300 0,310" fill="none" stroke="#8a8a8a" stroke-width="0.8" stroke-linejoin="round" stroke-linecap="round"  stroke-linecap="butt"/>
<polyline points="88,212 146,222" fill="none" stroke="#8a8a8a" stroke-width="1.2" stroke-linejoin="round" stroke-linecap="round" stroke-dasharray="4 3" stroke-linecap="butt"/>
<polyline points="118,100 150,112 172,127" fill="none" stroke="#666" stroke-width="2" stroke-linejoin="round" stroke-linecap="round" stroke-dasharray="5 3" stroke-linecap="butt"/>
<polyline points="172,127 185,135 205,142 215,147" fill="none" stroke="#9a9a94" stroke-width="1.3" stroke-linejoin="round" stroke-linecap="round" stroke-dasharray="4 3" stroke-linecap="butt"/>
<polyline points="60,92 95,105 118,100" fill="none" stroke="#777" stroke-width="1.6" stroke-linejoin="round" stroke-linecap="round" stroke-dasharray="4 3" stroke-linecap="butt"/>
<polyline points="215,147 240,150 262,170 275,165" fill="none" stroke="#a5a5a0" stroke-width="1.1" stroke-linejoin="round" stroke-linecap="round" stroke-dasharray="4 3" stroke-linecap="butt"/>
<polyline points="260,165 300,178 322,182 340,172 375,157 418,145" fill="none" stroke="#707070" stroke-width="2.2" stroke-linejoin="round" stroke-linecap="round"  stroke-linecap="butt"/>
<polyline points="335,178 375,160 418,150" fill="none" stroke="#8a8a8a" stroke-width="0.9" stroke-linejoin="round" stroke-linecap="round"  stroke-linecap="butt"/>
<polyline points="275,140 300,150 340,170" fill="none" stroke="#8a8a8a" stroke-width="1.3" stroke-linejoin="round" stroke-linecap="round" stroke-dasharray="4 3" stroke-linecap="butt"/>
<polyline points="250,282 300,302" fill="none" stroke="#b5a3b0" stroke-width="3.2" stroke-linejoin="round" stroke-linecap="round"  stroke-linecap="butt"/>
<polyline points="300,302 332,322 375,355 418,387" fill="none" stroke="#b0aaa0" stroke-width="2.2" stroke-linejoin="round" stroke-linecap="round"  stroke-linecap="butt"/>
<polyline points="375,355 418,345" fill="none" stroke="#b0aaa0" stroke-width="1.6" stroke-linejoin="round" stroke-linecap="round"  stroke-linecap="butt"/>
<polyline points="340,165 352,150 348,135" fill="none" stroke="#999" stroke-width="1.3" stroke-linejoin="round" stroke-linecap="round"  stroke-linecap="butt"/>
<polyline points="352,150 380,165 395,185" fill="none" stroke="#aaa" stroke-width="1.2" stroke-linejoin="round" stroke-linecap="round"  stroke-linecap="butt"/>
<polyline points="292,262 320,275 332,285" fill="none" stroke="#aaa" stroke-width="1.2" stroke-linejoin="round" stroke-linecap="round" stroke-dasharray="3 3" stroke-linecap="butt"/>
<polyline points="332,322 332,375 336,382" fill="none" stroke="#aaa" stroke-width="1.2" stroke-linejoin="round" stroke-linecap="round" stroke-dasharray="3 3" stroke-linecap="butt"/>
<polyline points="365,318 395,312 405,308" fill="none" stroke="#aaa" stroke-width="1.2" stroke-linejoin="round" stroke-linecap="round" stroke-dasharray="3 3" stroke-linecap="butt"/>
<polyline points="230,300 240,325 246,345" fill="none" stroke="#aaa" stroke-width="1.2" stroke-linejoin="round" stroke-linecap="round" stroke-dasharray="3 3" stroke-linecap="butt"/>
<polyline points="150,283 200,292 232,302" fill="none" stroke="#aaa" stroke-width="1" stroke-linejoin="round" stroke-linecap="round" stroke-dasharray="3 3" stroke-linecap="butt"/>
<polyline points="86,283 120,290 140,296" fill="none" stroke="#999" stroke-width="1" stroke-linejoin="round" stroke-linecap="round" stroke-dasharray="3 3" stroke-linecap="butt"/>
<polyline points="165,212 200,226 230,235" fill="none" stroke="#aaa" stroke-width="1" stroke-linejoin="round" stroke-linecap="round" stroke-dasharray="3 3" stroke-linecap="butt"/>
<polyline points="107,100 100,120 82,140 68,160 60,175" fill="none" stroke="#dcdca8" stroke-width="2.6" stroke-linejoin="round" stroke-linecap="round" />
<polyline points="107,100 100,120 82,140 68,160 60,175" fill="none" stroke="#f7fabf" stroke-width="2.0" stroke-linejoin="round" stroke-linecap="round" />
<polyline points="112,107 108,135 112,160 105,190 100,207" fill="none" stroke="#dcdca8" stroke-width="2.6" stroke-linejoin="round" stroke-linecap="round" />
<polyline points="112,107 108,135 112,160 105,190 100,207" fill="none" stroke="#f7fabf" stroke-width="2" stroke-linejoin="round" stroke-linecap="round" />
<polyline points="60,200 75,230 80,260 84,290" fill="none" stroke="#dcdca8" stroke-width="2.6" stroke-linejoin="round" stroke-linecap="round" />
<polyline points="60,200 75,230 80,260 84,290" fill="none" stroke="#f7fabf" stroke-width="2.0" stroke-linejoin="round" stroke-linecap="round" />
<polyline points="0,272 40,270 86,268" fill="none" stroke="#dcdca8" stroke-width="2.6" stroke-linejoin="round" stroke-linecap="round" />
<polyline points="0,272 40,270 86,268" fill="none" stroke="#f7fabf" stroke-width="2.0" stroke-linejoin="round" stroke-linecap="round" />
<polyline points="30,200 45,225 40,260 30,290" fill="none" stroke="#dcdca8" stroke-width="2.6" stroke-linejoin="round" stroke-linecap="round" />
<polyline points="30,200 45,225 40,260 30,290" fill="none" stroke="#f7fabf" stroke-width="2.0" stroke-linejoin="round" stroke-linecap="round" />
<polyline points="0,225 30,235 60,232" fill="none" stroke="#dcdca8" stroke-width="2.6" stroke-linejoin="round" stroke-linecap="round" />
<polyline points="0,225 30,235 60,232" fill="none" stroke="#f7fabf" stroke-width="2.0" stroke-linejoin="round" stroke-linecap="round" />
<polyline points="60,120 55,150 70,170" fill="none" stroke="#dcdca8" stroke-width="2.6" stroke-linejoin="round" stroke-linecap="round" />
<polyline points="60,120 55,150 70,170" fill="none" stroke="#f7fabf" stroke-width="2.0" stroke-linejoin="round" stroke-linecap="round" />
<polyline points="20,98 35,140 45,170 60,200" fill="none" stroke="#dcdca8" stroke-width="1.7999999999999998" stroke-linejoin="round" stroke-linecap="round" />
<polyline points="20,98 35,140 45,170 60,200" fill="none" stroke="#f7fabf" stroke-width="1.2" stroke-linejoin="round" stroke-linecap="round" />
<polyline points="118,42 140,30 160,20 175,8" fill="none" stroke="#dcdca8" stroke-width="2.6" stroke-linejoin="round" stroke-linecap="round" />
<polyline points="118,42 140,30 160,20 175,8" fill="none" stroke="#f7fabf" stroke-width="2.0" stroke-linejoin="round" stroke-linecap="round" />
<polyline points="150,50 160,38 178,25" fill="none" stroke="#dcdca8" stroke-width="2.6" stroke-linejoin="round" stroke-linecap="round" />
<polyline points="150,50 160,38 178,25" fill="none" stroke="#f7fabf" stroke-width="2.0" stroke-linejoin="round" stroke-linecap="round" />
<polyline points="0,48 20,80 30,110" fill="none" stroke="#dcdca8" stroke-width="1.7999999999999998" stroke-linejoin="round" stroke-linecap="round" />
<polyline points="0,48 20,80 30,110" fill="none" stroke="#f7fabf" stroke-width="1.2" stroke-linejoin="round" stroke-linecap="round" />
<polyline points="95,150 100,180 95,205" fill="none" stroke="#dcdca8" stroke-width="2.6" stroke-linejoin="round" stroke-linecap="round" />
<polyline points="95,150 100,180 95,205" fill="none" stroke="#f7fabf" stroke-width="2.0" stroke-linejoin="round" stroke-linecap="round" />
<polyline points="100,128 96,160 90,205" fill="none" stroke="#dcdca8" stroke-width="2.1" stroke-linejoin="round" stroke-linecap="round" />
<polyline points="100,128 96,160 90,205" fill="none" stroke="#f7fabf" stroke-width="1.5" stroke-linejoin="round" stroke-linecap="round" />
<polyline points="92,135 86,170 80,203" fill="none" stroke="#dcdca8" stroke-width="2.1" stroke-linejoin="round" stroke-linecap="round" />
<polyline points="92,135 86,170 80,203" fill="none" stroke="#f7fabf" stroke-width="1.5" stroke-linejoin="round" stroke-linecap="round" />
<polyline points="84,142 76,175 70,200" fill="none" stroke="#dcdca8" stroke-width="1.9" stroke-linejoin="round" stroke-linecap="round" />
<polyline points="84,142 76,175 70,200" fill="none" stroke="#f7fabf" stroke-width="1.3" stroke-linejoin="round" stroke-linecap="round" />
<polyline points="88,140 118,147" fill="none" stroke="#dcdca8" stroke-width="1.9" stroke-linejoin="round" stroke-linecap="round" />
<polyline points="88,140 118,147" fill="none" stroke="#f7fabf" stroke-width="1.3" stroke-linejoin="round" stroke-linecap="round" />
<polyline points="80,165 116,172" fill="none" stroke="#dcdca8" stroke-width="1.9" stroke-linejoin="round" stroke-linecap="round" />
<polyline points="80,165 116,172" fill="none" stroke="#f7fabf" stroke-width="1.3" stroke-linejoin="round" stroke-linecap="round" />
<polyline points="72,190 108,197" fill="none" stroke="#dcdca8" stroke-width="1.9" stroke-linejoin="round" stroke-linecap="round" />
<polyline points="72,190 108,197" fill="none" stroke="#f7fabf" stroke-width="1.3" stroke-linejoin="round" stroke-linecap="round" />
<polyline points="100,48 118,60 140,72" fill="none" stroke="#dcdca8" stroke-width="2.0" stroke-linejoin="round" stroke-linecap="round" />
<polyline points="100,48 118,60 140,72" fill="none" stroke="#f7fabf" stroke-width="1.4" stroke-linejoin="round" stroke-linecap="round" />
<polyline points="82,65 100,80 125,92" fill="none" stroke="#dcdca8" stroke-width="2.0" stroke-linejoin="round" stroke-linecap="round" />
<polyline points="82,65 100,80 125,92" fill="none" stroke="#f7fabf" stroke-width="1.4" stroke-linejoin="round" stroke-linecap="round" />
<polyline points="120,20 135,35 150,50" fill="none" stroke="#dcdca8" stroke-width="1.9" stroke-linejoin="round" stroke-linecap="round" />
<polyline points="120,20 135,35 150,50" fill="none" stroke="#f7fabf" stroke-width="1.3" stroke-linejoin="round" stroke-linecap="round" />
<polyline points="95,0 110,15 118,22" fill="none" stroke="#dcdca8" stroke-width="1.9" stroke-linejoin="round" stroke-linecap="round" />
<polyline points="95,0 110,15 118,22" fill="none" stroke="#f7fabf" stroke-width="1.3" stroke-linejoin="round" stroke-linecap="round" />
<polyline points="62,95 85,105 107,100" fill="none" stroke="#dcdca8" stroke-width="1.9" stroke-linejoin="round" stroke-linecap="round" />
<polyline points="62,95 85,105 107,100" fill="none" stroke="#f7fabf" stroke-width="1.3" stroke-linejoin="round" stroke-linecap="round" />
<polyline points="130,0 120,20 100,48" fill="none" stroke="#dcdca8" stroke-width="1.9" stroke-linejoin="round" stroke-linecap="round" />
<polyline points="130,0 120,20 100,48" fill="none" stroke="#f7fabf" stroke-width="1.3" stroke-linejoin="round" stroke-linecap="round" />
<polyline points="68,95 75,120 70,150 55,180" fill="none" stroke="#dcdca8" stroke-width="1.9" stroke-linejoin="round" stroke-linecap="round" />
<polyline points="68,95 75,120 70,150 55,180" fill="none" stroke="#f7fabf" stroke-width="1.3" stroke-linejoin="round" stroke-linecap="round" />
<polyline points="35,240 60,243 86,247" fill="none" stroke="#dcdca8" stroke-width="1.9" stroke-linejoin="round" stroke-linecap="round" />
<polyline points="35,240 60,243 86,247" fill="none" stroke="#f7fabf" stroke-width="1.3" stroke-linejoin="round" stroke-linecap="round" />
<polyline points="60,205 62,240 64,290" fill="none" stroke="#dcdca8" stroke-width="2.1" stroke-linejoin="round" stroke-linecap="round" />
<polyline points="60,205 62,240 64,290" fill="none" stroke="#f7fabf" stroke-width="1.5" stroke-linejoin="round" stroke-linecap="round" />
<polyline points="45,212 48,250 46,292" fill="none" stroke="#dcdca8" stroke-width="1.9" stroke-linejoin="round" stroke-linecap="round" />
<polyline points="45,212 48,250 46,292" fill="none" stroke="#f7fabf" stroke-width="1.3" stroke-linejoin="round" stroke-linecap="round" />
<polyline points="0,250 15,262 25,270" fill="none" stroke="#dcdca8" stroke-width="1.9" stroke-linejoin="round" stroke-linecap="round" />
<polyline points="0,250 15,262 25,270" fill="none" stroke="#f7fabf" stroke-width="1.3" stroke-linejoin="round" stroke-linecap="round" />
<polyline points="0,200 15,215 32,225" fill="none" stroke="#dcdca8" stroke-width="2.1" stroke-linejoin="round" stroke-linecap="round" />
<polyline points="0,200 15,215 32,225" fill="none" stroke="#f7fabf" stroke-width="1.5" stroke-linejoin="round" stroke-linecap="round" />
<polyline points="10,170 20,195 30,200" fill="none" stroke="#dcdca8" stroke-width="1.9" stroke-linejoin="round" stroke-linecap="round" />
<polyline points="10,170 20,195 30,200" fill="none" stroke="#f7fabf" stroke-width="1.3" stroke-linejoin="round" stroke-linecap="round" />
<polyline points="0,285 12,290 22,300" fill="none" stroke="#dcdca8" stroke-width="1.9" stroke-linejoin="round" stroke-linecap="round" />
<polyline points="0,285 12,290 22,300" fill="none" stroke="#f7fabf" stroke-width="1.3" stroke-linejoin="round" stroke-linecap="round" />
<polyline points="72,210 74,250 75,290" fill="none" stroke="#dcdca8" stroke-width="1.9" stroke-linejoin="round" stroke-linecap="round" />
<polyline points="72,210 74,250 75,290" fill="none" stroke="#f7fabf" stroke-width="1.3" stroke-linejoin="round" stroke-linecap="round" />
<polyline points="370,50 360,80 350,100 342,117 332,140 325,168" fill="none" stroke="#dcdca8" stroke-width="2.4" stroke-linejoin="round" stroke-linecap="round" />
<polyline points="370,50 360,80 350,100 342,117 332,140 325,168" fill="none" stroke="#f7fabf" stroke-width="1.8" stroke-linejoin="round" stroke-linecap="round" />
<polyline points="360,80 390,92 418,105" fill="none" stroke="#dcdca8" stroke-width="2.6" stroke-linejoin="round" stroke-linecap="round" />
<polyline points="360,80 390,92 418,105" fill="none" stroke="#f7fabf" stroke-width="2.0" stroke-linejoin="round" stroke-linecap="round" />
<polyline points="370,50 395,60 418,70" fill="none" stroke="#dcdca8" stroke-width="2.6" stroke-linejoin="round" stroke-linecap="round" />
<polyline points="370,50 395,60 418,70" fill="none" stroke="#f7fabf" stroke-width="2.0" stroke-linejoin="round" stroke-linecap="round" />
<polyline points="350,100 385,118 418,135" fill="none" stroke="#dcdca8" stroke-width="2.6" stroke-linejoin="round" stroke-linecap="round" />
<polyline points="350,100 385,118 418,135" fill="none" stroke="#f7fabf" stroke-width="2.0" stroke-linejoin="round" stroke-linecap="round" />
<polyline points="395,40 418,57" fill="none" stroke="#dcdca8" stroke-width="2.6" stroke-linejoin="round" stroke-linecap="round" />
<polyline points="395,40 418,57" fill="none" stroke="#f7fabf" stroke-width="2.0" stroke-linejoin="round" stroke-linecap="round" />
<polyline points="342,117 365,128 395,145" fill="none" stroke="#dcdca8" stroke-width="2.6" stroke-linejoin="round" stroke-linecap="round" />
<polyline points="342,117 365,128 395,145" fill="none" stroke="#f7fabf" stroke-width="2.0" stroke-linejoin="round" stroke-linecap="round" />
<polyline points="380,40 372,66" fill="none" stroke="#dcdca8" stroke-width="2.6" stroke-linejoin="round" stroke-linecap="round" />
<polyline points="380,40 372,66" fill="none" stroke="#f7fabf" stroke-width="2.0" stroke-linejoin="round" stroke-linecap="round" />
<polyline points="408,45 398,75 385,100 372,128" fill="none" stroke="#dcdca8" stroke-width="2.0" stroke-linejoin="round" stroke-linecap="round" />
<polyline points="408,45 398,75 385,100 372,128" fill="none" stroke="#f7fabf" stroke-width="1.4" stroke-linejoin="round" stroke-linecap="round" />
<polyline points="332,140 350,150" fill="none" stroke="#dcdca8" stroke-width="2.6" stroke-linejoin="round" stroke-linecap="round" />
<polyline points="332,140 350,150" fill="none" stroke="#f7fabf" stroke-width="2.0" stroke-linejoin="round" stroke-linecap="round" />
<polyline points="325,135 332,157 322,182" fill="none" stroke="#dcdca8" stroke-width="2.6" stroke-linejoin="round" stroke-linecap="round" />
<polyline points="325,135 332,157 322,182" fill="none" stroke="#f7fabf" stroke-width="2.0" stroke-linejoin="round" stroke-linecap="round" />
<polyline points="297,170 312,162 332,157" fill="none" stroke="#dcdca8" stroke-width="2.6" stroke-linejoin="round" stroke-linecap="round" />
<polyline points="297,170 312,162 332,157" fill="none" stroke="#f7fabf" stroke-width="2.0" stroke-linejoin="round" stroke-linecap="round" />
<polyline points="305,200 310,230 307,255 297,275" fill="none" stroke="#dcdca8" stroke-width="2.4" stroke-linejoin="round" stroke-linecap="round" />
<polyline points="305,200 310,230 307,255 297,275" fill="none" stroke="#f7fabf" stroke-width="1.8" stroke-linejoin="round" stroke-linecap="round" />
<polyline points="310,225 330,222 350,220" fill="none" stroke="#dcdca8" stroke-width="2.6" stroke-linejoin="round" stroke-linecap="round" />
<polyline points="310,225 330,222 350,220" fill="none" stroke="#f7fabf" stroke-width="2.0" stroke-linejoin="round" stroke-linecap="round" />
<polyline points="350,220 355,235 370,242 375,255" fill="none" stroke="#dcdca8" stroke-width="2.6" stroke-linejoin="round" stroke-linecap="round" />
<polyline points="350,220 355,235 370,242 375,255" fill="none" stroke="#f7fabf" stroke-width="2.0" stroke-linejoin="round" stroke-linecap="round" />
<polyline points="375,150 405,140 418,142" fill="none" stroke="#dcdca8" stroke-width="2.6" stroke-linejoin="round" stroke-linecap="round" />
<polyline points="375,150 405,140 418,142" fill="none" stroke="#f7fabf" stroke-width="2.0" stroke-linejoin="round" stroke-linecap="round" />
<polyline points="380,175 390,187 418,182" fill="none" stroke="#dcdca8" stroke-width="2.6" stroke-linejoin="round" stroke-linecap="round" />
<polyline points="380,175 390,187 418,182" fill="none" stroke="#f7fabf" stroke-width="2.0" stroke-linejoin="round" stroke-linecap="round" />
<polyline points="400,230 410,255 405,275 418,285" fill="none" stroke="#dcdca8" stroke-width="2.6" stroke-linejoin="round" stroke-linecap="round" />
<polyline points="400,230 410,255 405,275 418,285" fill="none" stroke="#f7fabf" stroke-width="2.0" stroke-linejoin="round" stroke-linecap="round" />
<polyline points="296,207 305,200" fill="none" stroke="#dcdca8" stroke-width="2.6" stroke-linejoin="round" stroke-linecap="round" />
<polyline points="296,207 305,200" fill="none" stroke="#f7fabf" stroke-width="2.0" stroke-linejoin="round" stroke-linecap="round" />
<polyline points="297,230 310,230" fill="none" stroke="#dcdca8" stroke-width="2.6" stroke-linejoin="round" stroke-linecap="round" />
<polyline points="297,230 310,230" fill="none" stroke="#f7fabf" stroke-width="2.0" stroke-linejoin="round" stroke-linecap="round" />
<polyline points="315,192 318,215 310,230" fill="none" stroke="#dcdca8" stroke-width="1.9" stroke-linejoin="round" stroke-linecap="round" />
<polyline points="315,192 318,215 310,230" fill="none" stroke="#f7fabf" stroke-width="1.3" stroke-linejoin="round" stroke-linecap="round" />
<polyline points="297,250 287,272 279,292 275,312 274,332" fill="none" stroke="#dcdca8" stroke-width="2.6" stroke-linejoin="round" stroke-linecap="round" />
<polyline points="297,250 287,272 279,292 275,312 274,332" fill="none" stroke="#f7fabf" stroke-width="2" stroke-linejoin="round" stroke-linecap="round" />
<polyline points="287,272 312,265 325,277" fill="none" stroke="#dcdca8" stroke-width="2.6" stroke-linejoin="round" stroke-linecap="round" />
<polyline points="287,272 312,265 325,277" fill="none" stroke="#f7fabf" stroke-width="2.0" stroke-linejoin="round" stroke-linecap="round" />
<polyline points="279,292 297,282 312,285 327,287 357,287" fill="none" stroke="#dcdca8" stroke-width="2.4" stroke-linejoin="round" stroke-linecap="round" />
<polyline points="279,292 297,282 312,285 327,287 357,287" fill="none" stroke="#f7fabf" stroke-width="1.8" stroke-linejoin="round" stroke-linecap="round" />
<polyline points="357,287 360,312 367,332 375,350 390,362 418,380" fill="none" stroke="#dcdca8" stroke-width="2.4" stroke-linejoin="round" stroke-linecap="round" />
<polyline points="357,287 360,312 367,332 375,350 390,362 418,380" fill="none" stroke="#f7fabf" stroke-width="1.8" stroke-linejoin="round" stroke-linecap="round" />
<polyline points="370,250 375,275 380,285" fill="none" stroke="#dcdca8" stroke-width="2.6" stroke-linejoin="round" stroke-linecap="round" />
<polyline points="370,250 375,275 380,285" fill="none" stroke="#f7fabf" stroke-width="2.0" stroke-linejoin="round" stroke-linecap="round" />
<polyline points="327,287 330,325 327,350 330,395" fill="none" stroke="#dcdca8" stroke-width="2.4" stroke-linejoin="round" stroke-linecap="round" />
<polyline points="327,287 330,325 327,350 330,395" fill="none" stroke="#f7fabf" stroke-width="1.8" stroke-linejoin="round" stroke-linecap="round" />
<polyline points="275,312 282,307 300,315 315,332 320,342" fill="none" stroke="#dcdca8" stroke-width="2.6" stroke-linejoin="round" stroke-linecap="round" />
<polyline points="275,312 282,307 300,315 315,332 320,342" fill="none" stroke="#f7fabf" stroke-width="2.0" stroke-linejoin="round" stroke-linecap="round" />
<polyline points="280,332 292,315 307,335" fill="none" stroke="#dcdca8" stroke-width="2.6" stroke-linejoin="round" stroke-linecap="round" />
<polyline points="280,332 292,315 307,335" fill="none" stroke="#f7fabf" stroke-width="2.0" stroke-linejoin="round" stroke-linecap="round" />
<polyline points="250,372 290,370 327,365" fill="none" stroke="#dcdca8" stroke-width="2.6" stroke-linejoin="round" stroke-linecap="round" />
<polyline points="250,372 290,370 327,365" fill="none" stroke="#f7fabf" stroke-width="2.0" stroke-linejoin="round" stroke-linecap="round" />
<polyline points="250,382 300,380 330,378" fill="none" stroke="#dcdca8" stroke-width="2.6" stroke-linejoin="round" stroke-linecap="round" />
<polyline points="250,382 300,380 330,378" fill="none" stroke="#f7fabf" stroke-width="2.0" stroke-linejoin="round" stroke-linecap="round" />
<polyline points="250,392 300,390 330,388" fill="none" stroke="#dcdca8" stroke-width="1.9" stroke-linejoin="round" stroke-linecap="round" />
<polyline points="250,392 300,390 330,388" fill="none" stroke="#f7fabf" stroke-width="1.3" stroke-linejoin="round" stroke-linecap="round" />
<polyline points="260,352 262,397" fill="none" stroke="#dcdca8" stroke-width="2.1" stroke-linejoin="round" stroke-linecap="round" />
<polyline points="260,352 262,397" fill="none" stroke="#f7fabf" stroke-width="1.5" stroke-linejoin="round" stroke-linecap="round" />
<polyline points="272,352 274,397" fill="none" stroke="#dcdca8" stroke-width="2.1" stroke-linejoin="round" stroke-linecap="round" />
<polyline points="272,352 274,397" fill="none" stroke="#f7fabf" stroke-width="1.5" stroke-linejoin="round" stroke-linecap="round" />
<polyline points="282,352 284,397" fill="none" stroke="#dcdca8" stroke-width="2.1" stroke-linejoin="round" stroke-linecap="round" />
<polyline points="282,352 284,397" fill="none" stroke="#f7fabf" stroke-width="1.5" stroke-linejoin="round" stroke-linecap="round" />
<polyline points="302,352 304,397" fill="none" stroke="#dcdca8" stroke-width="2.1" stroke-linejoin="round" stroke-linecap="round" />
<polyline points="302,352 304,397" fill="none" stroke="#f7fabf" stroke-width="1.5" stroke-linejoin="round" stroke-linecap="round" />
<polyline points="312,352 314,397" fill="none" stroke="#dcdca8" stroke-width="2.1" stroke-linejoin="round" stroke-linecap="round" />
<polyline points="312,352 314,397" fill="none" stroke="#f7fabf" stroke-width="1.5" stroke-linejoin="round" stroke-linecap="round" />
<polyline points="410,262 415,275 418,277" fill="none" stroke="#dcdca8" stroke-width="2.6" stroke-linejoin="round" stroke-linecap="round" />
<polyline points="410,262 415,275 418,277" fill="none" stroke="#f7fabf" stroke-width="2.0" stroke-linejoin="round" stroke-linecap="round" />
<polyline points="385,283 395,300 418,312" fill="none" stroke="#dcdca8" stroke-width="2.6" stroke-linejoin="round" stroke-linecap="round" />
<polyline points="385,283 395,300 418,312" fill="none" stroke="#f7fabf" stroke-width="2.0" stroke-linejoin="round" stroke-linecap="round" />
<polyline points="357,287 385,283 418,270" fill="none" stroke="#dcdca8" stroke-width="2.6" stroke-linejoin="round" stroke-linecap="round" />
<polyline points="357,287 385,283 418,270" fill="none" stroke="#f7fabf" stroke-width="2.0" stroke-linejoin="round" stroke-linecap="round" />
<polyline points="300,347 310,380 316,397" fill="none" stroke="#dcdca8" stroke-width="2.6" stroke-linejoin="round" stroke-linecap="round" />
<polyline points="300,347 310,380 316,397" fill="none" stroke="#f7fabf" stroke-width="2.0" stroke-linejoin="round" stroke-linecap="round" />
<polyline points="345,267 360,250 385,248" fill="none" stroke="#dcdca8" stroke-width="2.6" stroke-linejoin="round" stroke-linecap="round" />
<polyline points="345,267 360,250 385,248" fill="none" stroke="#f7fabf" stroke-width="2.0" stroke-linejoin="round" stroke-linecap="round" />
<polyline points="340,330 360,318 395,300" fill="none" stroke="#dcdca8" stroke-width="1.9" stroke-linejoin="round" stroke-linecap="round" />
<polyline points="340,330 360,318 395,300" fill="none" stroke="#f7fabf" stroke-width="1.3" stroke-linejoin="round" stroke-linecap="round" />
<polyline points="362,225 352,245 345,267" fill="none" stroke="#dcdca8" stroke-width="2.6" stroke-linejoin="round" stroke-linecap="round" />
<polyline points="362,225 352,245 345,267" fill="none" stroke="#f7fabf" stroke-width="2.0" stroke-linejoin="round" stroke-linecap="round" />
<polyline points="337,357 340,397" fill="none" stroke="#dcdca8" stroke-width="1.9" stroke-linejoin="round" stroke-linecap="round" />
<polyline points="337,357 340,397" fill="none" stroke="#f7fabf" stroke-width="1.3" stroke-linejoin="round" stroke-linecap="round" />
<polyline points="362,335 365,397" fill="none" stroke="#dcdca8" stroke-width="1.9" stroke-linejoin="round" stroke-linecap="round" />
<polyline points="362,335 365,397" fill="none" stroke="#f7fabf" stroke-width="1.3" stroke-linejoin="round" stroke-linecap="round" />
<polyline points="395,320 398,397" fill="none" stroke="#dcdca8" stroke-width="1.9" stroke-linejoin="round" stroke-linecap="round" />
<polyline points="395,320 398,397" fill="none" stroke="#f7fabf" stroke-width="1.3" stroke-linejoin="round" stroke-linecap="round" />
<polyline points="330,330 370,322 418,305" fill="none" stroke="#dcdca8" stroke-width="1.9" stroke-linejoin="round" stroke-linecap="round" />
<polyline points="330,330 370,322 418,305" fill="none" stroke="#f7fabf" stroke-width="1.3" stroke-linejoin="round" stroke-linecap="round" />
<polyline points="225,355 240,380 250,405 260,418" fill="none" stroke="#dcdca8" stroke-width="2.6" stroke-linejoin="round" stroke-linecap="round" />
<polyline points="225,355 240,380 250,405 260,418" fill="none" stroke="#f7fabf" stroke-width="2.0" stroke-linejoin="round" stroke-linecap="round" />
<polyline points="205,360 215,390 212,418" fill="none" stroke="#dcdca8" stroke-width="2.6" stroke-linejoin="round" stroke-linecap="round" />
<polyline points="205,360 215,390 212,418" fill="none" stroke="#f7fabf" stroke-width="2.0" stroke-linejoin="round" stroke-linecap="round" />
<polyline points="190,390 215,385 245,395" fill="none" stroke="#dcdca8" stroke-width="2.6" stroke-linejoin="round" stroke-linecap="round" />
<polyline points="190,390 215,385 245,395" fill="none" stroke="#f7fabf" stroke-width="2.0" stroke-linejoin="round" stroke-linecap="round" />
<polyline points="195,372 220,365 245,368" fill="none" stroke="#dcdca8" stroke-width="2.6" stroke-linejoin="round" stroke-linecap="round" />
<polyline points="195,372 220,365 245,368" fill="none" stroke="#f7fabf" stroke-width="2.0" stroke-linejoin="round" stroke-linecap="round" />
<polyline points="180,400 210,400 245,410" fill="none" stroke="#dcdca8" stroke-width="2.6" stroke-linejoin="round" stroke-linecap="round" />
<polyline points="180,400 210,400 245,410" fill="none" stroke="#f7fabf" stroke-width="2.0" stroke-linejoin="round" stroke-linecap="round" />
<polyline points="200,340 205,360" fill="none" stroke="#dcdca8" stroke-width="1.9" stroke-linejoin="round" stroke-linecap="round" />
<polyline points="200,340 205,360" fill="none" stroke="#f7fabf" stroke-width="1.3" stroke-linejoin="round" stroke-linecap="round" />
<polyline points="225,330 228,355" fill="none" stroke="#dcdca8" stroke-width="1.9" stroke-linejoin="round" stroke-linecap="round" />
<polyline points="225,330 228,355" fill="none" stroke="#f7fabf" stroke-width="1.3" stroke-linejoin="round" stroke-linecap="round" />
<polyline points="170,410 200,412 230,418" fill="none" stroke="#dcdca8" stroke-width="1.9" stroke-linejoin="round" stroke-linecap="round" />
<polyline points="170,410 200,412 230,418" fill="none" stroke="#f7fabf" stroke-width="1.3" stroke-linejoin="round" stroke-linecap="round" />
<polyline points="237,355 242,335 248,332" fill="none" stroke="#dcdca8" stroke-width="1.9" stroke-linejoin="round" stroke-linecap="round" />
<polyline points="237,355 242,335 248,332" fill="none" stroke="#f7fabf" stroke-width="1.3" stroke-linejoin="round" stroke-linecap="round" />
<polyline points="118,22 100,48 82,65 62,95 60,118 47,140 25,160 15,168" fill="none" stroke="#e6b878" stroke-width="3.0" stroke-linejoin="round" stroke-linecap="round" />
<polyline points="118,22 100,48 82,65 62,95 60,118 47,140 25,160 15,168" fill="none" stroke="#fcd6a4" stroke-width="2.4" stroke-linejoin="round" stroke-linecap="round" />
<polyline points="40,15 54,25 71,37" fill="none" stroke="#e6b878" stroke-width="2.4" stroke-linejoin="round" stroke-linecap="round" />
<polyline points="40,15 54,25 71,37" fill="none" stroke="#fcd6a4" stroke-width="1.8" stroke-linejoin="round" stroke-linecap="round" />
<polyline points="92.5,5 88,19 80,29 72,38" fill="none" stroke="#e6b878" stroke-width="3.0" stroke-linejoin="round" stroke-linecap="round" />
<polyline points="92.5,5 88,19 80,29 72,38" fill="none" stroke="#fcd6a4" stroke-width="2.4" stroke-linejoin="round" stroke-linecap="round" />
<polyline points="70,43 85,48 100,48" fill="none" stroke="#e6b878" stroke-width="2.2" stroke-linejoin="round" stroke-linecap="round" />
<polyline points="70,43 85,48 100,48" fill="none" stroke="#fcd6a4" stroke-width="1.6" stroke-linejoin="round" stroke-linecap="round" />
<polyline points="160,20 150,40 145,60 140,72 135,80" fill="none" stroke="#e6b878" stroke-width="3.0" stroke-linejoin="round" stroke-linecap="round" />
<polyline points="160,20 150,40 145,60 140,72 135,80" fill="none" stroke="#fcd6a4" stroke-width="2.4" stroke-linejoin="round" stroke-linecap="round" />
<polyline points="15,168 0,180" fill="none" stroke="#e6b878" stroke-width="3.0" stroke-linejoin="round" stroke-linecap="round" />
<polyline points="15,168 0,180" fill="none" stroke="#fcd6a4" stroke-width="2.4" stroke-linejoin="round" stroke-linecap="round" />
<polyline points="25,160 40,185 60,200" fill="none" stroke="#e6b878" stroke-width="2.2" stroke-linejoin="round" stroke-linecap="round" />
<polyline points="25,160 40,185 60,200" fill="none" stroke="#fcd6a4" stroke-width="1.6" stroke-linejoin="round" stroke-linecap="round" />
<polyline points="0,258 20,250 32,228" fill="none" stroke="#e6b878" stroke-width="2.2" stroke-linejoin="round" stroke-linecap="round" />
<polyline points="0,258 20,250 32,228" fill="none" stroke="#fcd6a4" stroke-width="1.6" stroke-linejoin="round" stroke-linecap="round" />
<polyline points="147,280 152,240 160,190 168,150 180,120 200,85 232,25 242,0" fill="none" stroke="#e6b878" stroke-width="2.4" stroke-linejoin="round" stroke-linecap="round" />
<polyline points="147,280 152,240 160,190 168,150 180,120 200,85 232,25 242,0" fill="none" stroke="#fcd6a4" stroke-width="1.8" stroke-linejoin="round" stroke-linecap="round" />
<polyline points="170,318 178,290 186,255 190,228 198,200 215,165 232,130 243,100 245,73 255,35 266,0" fill="none" stroke="#e6b878" stroke-width="2.6" stroke-linejoin="round" stroke-linecap="round" />
<polyline points="170,318 178,290 186,255 190,228 198,200 215,165 232,130 243,100 245,73 255,35 266,0" fill="none" stroke="#fcd6a4" stroke-width="2" stroke-linejoin="round" stroke-linecap="round" />
<polyline points="200,306 215,265 228,235 250,190 280,135 310,80 350,0" fill="none" stroke="#e6b878" stroke-width="2.6" stroke-linejoin="round" stroke-linecap="round" />
<polyline points="200,306 215,265 228,235 250,190 280,135 310,80 350,0" fill="none" stroke="#fcd6a4" stroke-width="2" stroke-linejoin="round" stroke-linecap="round" />
<polyline points="230,300 240,268 252,235 262,210" fill="none" stroke="#e6b878" stroke-width="2.6" stroke-linejoin="round" stroke-linecap="round" />
<polyline points="230,300 240,268 252,235 262,210" fill="none" stroke="#fcd6a4" stroke-width="2" stroke-linejoin="round" stroke-linecap="round" />
<polyline points="235,230 262,243" fill="none" stroke="#e6b878" stroke-width="2.2" stroke-linejoin="round" stroke-linecap="round" />
<polyline points="235,230 262,243" fill="none" stroke="#fcd6a4" stroke-width="1.6" stroke-linejoin="round" stroke-linecap="round" />
<polyline points="155,215 228,250 262,262" fill="none" stroke="#e6b878" stroke-width="2.4" stroke-linejoin="round" stroke-linecap="round" />
<polyline points="155,215 228,250 262,262" fill="none" stroke="#fcd6a4" stroke-width="1.8" stroke-linejoin="round" stroke-linecap="round" />
<polyline points="160,187 200,205 258,232" fill="none" stroke="#e6b878" stroke-width="2.2" stroke-linejoin="round" stroke-linecap="round" />
<polyline points="160,187 200,205 258,232" fill="none" stroke="#fcd6a4" stroke-width="1.6" stroke-linejoin="round" stroke-linecap="round" />
<polyline points="165,150 215,176 270,205" fill="none" stroke="#e6b878" stroke-width="2.2" stroke-linejoin="round" stroke-linecap="round" />
<polyline points="165,150 215,176 270,205" fill="none" stroke="#fcd6a4" stroke-width="1.6" stroke-linejoin="round" stroke-linecap="round" />
<polyline points="172,120 230,150 283,178" fill="none" stroke="#e6b878" stroke-width="2.4" stroke-linejoin="round" stroke-linecap="round" />
<polyline points="172,120 230,150 283,178" fill="none" stroke="#fcd6a4" stroke-width="1.8" stroke-linejoin="round" stroke-linecap="round" />
<polyline points="190,90 250,120 300,147" fill="none" stroke="#e6b878" stroke-width="2.2" stroke-linejoin="round" stroke-linecap="round" />
<polyline points="190,90 250,120 300,147" fill="none" stroke="#fcd6a4" stroke-width="1.6" stroke-linejoin="round" stroke-linecap="round" />
<polyline points="207,57 247,75 270,88 320,113" fill="none" stroke="#e6b878" stroke-width="2.2" stroke-linejoin="round" stroke-linecap="round" />
<polyline points="207,57 247,75 270,88 320,113" fill="none" stroke="#fcd6a4" stroke-width="1.6" stroke-linejoin="round" stroke-linecap="round" />
<polyline points="142,290 160,296 175,295 207,332 220,350" fill="none" stroke="#e6b878" stroke-width="2.6" stroke-linejoin="round" stroke-linecap="round" />
<polyline points="142,290 160,296 175,295 207,332 220,350" fill="none" stroke="#fcd6a4" stroke-width="2" stroke-linejoin="round" stroke-linecap="round" />
<polyline points="160,268 192,280 207,300 225,340 237,355 245,368 262,400 270,418" fill="none" stroke="#e6b878" stroke-width="2.8000000000000003" stroke-linejoin="round" stroke-linecap="round" />
<polyline points="160,268 192,280 207,300 225,340 237,355 245,368 262,400 270,418" fill="none" stroke="#fcd6a4" stroke-width="2.2" stroke-linejoin="round" stroke-linecap="round" />
<polyline points="186,255 200,275 206,290" fill="none" stroke="#e6b878" stroke-width="2.2" stroke-linejoin="round" stroke-linecap="round" />
<polyline points="186,255 200,275 206,290" fill="none" stroke="#fcd6a4" stroke-width="1.6" stroke-linejoin="round" stroke-linecap="round" />
<polyline points="362,160 372,175 380,190" fill="none" stroke="#e6b878" stroke-width="3.0" stroke-linejoin="round" stroke-linecap="round" />
<polyline points="362,160 372,175 380,190" fill="none" stroke="#fcd6a4" stroke-width="2.4" stroke-linejoin="round" stroke-linecap="round" />
<polyline points="290,108 319,123 351,141 357,151 362,162" fill="none" stroke="#dc917a" stroke-width="3.4" stroke-linejoin="round" stroke-linecap="round" />
<polyline points="290,108 319,123 351,141 357,151 362,162" fill="none" stroke="#f9b29c" stroke-width="2.7" stroke-linejoin="round" stroke-linecap="round" />
<polyline points="362,160 385,150 418,125" fill="none" stroke="#e6b878" stroke-width="3.0" stroke-linejoin="round" stroke-linecap="round" />
<polyline points="362,160 385,150 418,125" fill="none" stroke="#fcd6a4" stroke-width="2.4" stroke-linejoin="round" stroke-linecap="round" />
<polyline points="350,147 372,120 400,88 418,70" fill="none" stroke="#e6b878" stroke-width="3.0" stroke-linejoin="round" stroke-linecap="round" />
<polyline points="350,147 372,120 400,88 418,70" fill="none" stroke="#fcd6a4" stroke-width="2.4" stroke-linejoin="round" stroke-linecap="round" />
<polyline points="322,182 325,225 335,250 345,267" fill="none" stroke="#e6b878" stroke-width="2.6" stroke-linejoin="round" stroke-linecap="round" />
<polyline points="322,182 325,225 335,250 345,267" fill="none" stroke="#fcd6a4" stroke-width="2" stroke-linejoin="round" stroke-linecap="round" />
<polyline points="330,222 370,210 418,182" fill="none" stroke="#e6b878" stroke-width="3.0" stroke-linejoin="round" stroke-linecap="round" />
<polyline points="330,222 370,210 418,182" fill="none" stroke="#fcd6a4" stroke-width="2.4" stroke-linejoin="round" stroke-linecap="round" />
<polyline points="322,300 370,292 418,282" fill="none" stroke="#e6b878" stroke-width="3.0" stroke-linejoin="round" stroke-linecap="round" />
<polyline points="322,300 370,292 418,282" fill="none" stroke="#fcd6a4" stroke-width="2.4" stroke-linejoin="round" stroke-linecap="round" />
<polyline points="300,347 362,335 400,317 418,300" fill="none" stroke="#e6b878" stroke-width="2.8000000000000003" stroke-linejoin="round" stroke-linecap="round" />
<polyline points="300,347 362,335 400,317 418,300" fill="none" stroke="#fcd6a4" stroke-width="2.2" stroke-linejoin="round" stroke-linecap="round" />
<polyline points="250,367 337,357 418,345" fill="none" stroke="#e6b878" stroke-width="2.8000000000000003" stroke-linejoin="round" stroke-linecap="round" />
<polyline points="250,367 337,357 418,345" fill="none" stroke="#fcd6a4" stroke-width="2.2" stroke-linejoin="round" stroke-linecap="round" />
<polyline points="237,355 262,352 300,347" fill="none" stroke="#e6b878" stroke-width="3.0" stroke-linejoin="round" stroke-linecap="round" />
<polyline points="237,355 262,352 300,347" fill="none" stroke="#fcd6a4" stroke-width="2.4" stroke-linejoin="round" stroke-linecap="round" />
<polyline points="195,372 240,372 250,367" fill="none" stroke="#e6b878" stroke-width="2.2" stroke-linejoin="round" stroke-linecap="round" />
<polyline points="195,372 240,372 250,367" fill="none" stroke="#fcd6a4" stroke-width="1.6" stroke-linejoin="round" stroke-linecap="round" />
<polyline points="215,350 218,380 225,418" fill="none" stroke="#e6b878" stroke-width="2.2" stroke-linejoin="round" stroke-linecap="round" />
<polyline points="215,350 218,380 225,418" fill="none" stroke="#fcd6a4" stroke-width="1.6" stroke-linejoin="round" stroke-linecap="round" />
<polyline points="418,207 400,225 395,242" fill="none" stroke="#e6b878" stroke-width="2.2" stroke-linejoin="round" stroke-linecap="round" />
<polyline points="418,207 400,225 395,242" fill="none" stroke="#fcd6a4" stroke-width="1.6" stroke-linejoin="round" stroke-linecap="round" />
<polyline points="372,175 395,170 418,160" fill="none" stroke="#e6b878" stroke-width="2.2" stroke-linejoin="round" stroke-linecap="round" />
<polyline points="372,175 395,170 418,160" fill="none" stroke="#fcd6a4" stroke-width="1.6" stroke-linejoin="round" stroke-linecap="round" />
<polyline points="385,48 392,70 400,88" fill="none" stroke="#e6b878" stroke-width="2.2" stroke-linejoin="round" stroke-linecap="round" />
<polyline points="385,48 392,70 400,88" fill="none" stroke="#fcd6a4" stroke-width="1.6" stroke-linejoin="round" stroke-linecap="round" />
<polyline points="75,42 58,75 38,112 15,145 5,168 0,175" fill="none" stroke="#d8907a" stroke-width="3.0999999999999996" stroke-linejoin="round" stroke-linecap="round" />
<polyline points="75,42 58,75 38,112 15,145 5,168 0,175" fill="none" stroke="#f9b29c" stroke-width="2.4" stroke-linejoin="round" stroke-linecap="round" />
<polyline points="200,72 190,90 180,105 172,120 167,135 165,150 162,168 160,187 156,207 152,232 149,255 146,275 142,290 137,302 136,320" fill="none" stroke="#d8907a" stroke-width="2.7" stroke-linejoin="round" stroke-linecap="round" />
<polyline points="200,72 190,90 180,105 172,120 167,135 165,150 162,168 160,187 156,207 152,232 149,255 146,275 142,290 137,302 136,320" fill="none" stroke="#f9b29c" stroke-width="2" stroke-linejoin="round" stroke-linecap="round" />
<polyline points="40,4 44,21 50,35 56,48 62,56" fill="none" stroke="#c86a80" stroke-width="5.3999999999999995" stroke-linejoin="round" stroke-linecap="round" />
<polyline points="40,4 44,21 50,35 56,48 62,56" fill="none" stroke="#e892a2" stroke-width="4.6" stroke-linejoin="round" stroke-linecap="round" />
<polyline points="62,56 69,51 83,56 96,62 108,73 116,83 118,91" fill="none" stroke="#c86a80" stroke-width="4.2" stroke-linejoin="round" stroke-linecap="round" />
<polyline points="62,56 69,51 83,56 96,62 108,73 116,83 118,91" fill="none" stroke="#e892a2" stroke-width="3.4" stroke-linejoin="round" stroke-linecap="round" />
<polyline points="36,0 40,6 47,8 44,14" fill="none" stroke="#c86a80" stroke-width="5.8" stroke-linejoin="round" stroke-linecap="round" />
<polyline points="36,0 40,6 47,8 44,14" fill="none" stroke="#e892a2" stroke-width="5" stroke-linejoin="round" stroke-linecap="round" />
<polyline points="48,30 44,42 56,52 64,55" fill="none" stroke="#c86a80" stroke-width="3.0" stroke-linejoin="round" stroke-linecap="round" />
<polyline points="48,30 44,42 56,52 64,55" fill="none" stroke="#e892a2" stroke-width="2.2" stroke-linejoin="round" stroke-linecap="round" />
<polyline points="0,62 4,68 0,74" fill="none" stroke="#c86a80" stroke-width="3.8" stroke-linejoin="round" stroke-linecap="round" />
<polyline points="0,62 4,68 0,74" fill="none" stroke="#e892a2" stroke-width="3" stroke-linejoin="round" stroke-linecap="round" />
<polyline points="118,92 114,98 124,98 130,87 125,84 118,92" fill="none" stroke="#c86a80" stroke-width="2.8" stroke-linejoin="round" stroke-linecap="round" />
<polyline points="118,92 114,98 124,98 130,87 125,84 118,92" fill="none" stroke="#e892a2" stroke-width="2" stroke-linejoin="round" stroke-linecap="round" />
<polyline points="130,87 160,97 176,103" fill="none" stroke="#f0a8b4" stroke-width="3.6" stroke-linejoin="round" stroke-linecap="round" stroke-linecap="butt"/>
<polyline points="32,225 50,221 80,222 84,226" fill="none" stroke="#c86a80" stroke-width="3.2" stroke-linejoin="round" stroke-linecap="round" />
<polyline points="32,225 50,221 80,222 84,226" fill="none" stroke="#e892a2" stroke-width="2.4" stroke-linejoin="round" stroke-linecap="round" />
<polyline points="34,230 60,227 83,229" fill="none" stroke="#c86a80" stroke-width="2.4000000000000004" stroke-linejoin="round" stroke-linecap="round" />
<polyline points="34,230 60,227 83,229" fill="none" stroke="#e892a2" stroke-width="1.6" stroke-linejoin="round" stroke-linecap="round" />
<polyline points="32,225 28,240 25,250 22,275 25,293 20,305 8,320 0,326" fill="none" stroke="#c86a80" stroke-width="3.4000000000000004" stroke-linejoin="round" stroke-linecap="round" />
<polyline points="32,225 28,240 25,250 22,275 25,293 20,305 8,320 0,326" fill="none" stroke="#e892a2" stroke-width="2.6" stroke-linejoin="round" stroke-linecap="round" />
<polyline points="86,227 147,240" fill="none" stroke="#f0a8b4" stroke-width="3" stroke-linejoin="round" stroke-linecap="round" stroke-linecap="butt"/>
<polyline points="0,215 12,218 32,225" fill="none" stroke="#c86a80" stroke-width="2.8" stroke-linejoin="round" stroke-linecap="round" />
<polyline points="0,215 12,218 32,225" fill="none" stroke="#e892a2" stroke-width="2" stroke-linejoin="round" stroke-linecap="round" />
<polyline points="368,0 363,11 350,21 348,32 353,47 350,56 341,65 332,80 322,92 312,105 300,125 287,142 275,165 265,182 258,205 267,230 262,255 258,275 255,290 245,299 225,301 195,307 175,317 160,330 150,335 140,331 136,321" fill="none" stroke="#c86a80" stroke-width="3.2" stroke-linejoin="round" stroke-linecap="round" />
<polyline points="368,0 363,11 350,21 348,32 353,47 350,56 341,65 332,80 322,92 312,105 300,125 287,142 275,165 265,182 258,205 267,230 262,255 258,275 255,290 245,299 225,301 195,307 175,317 160,330 150,335 140,331 136,321" fill="none" stroke="#e892a2" stroke-width="2.4" stroke-linejoin="round" stroke-linecap="round" />
<polyline points="235,0 230,15 220,35 207,57 200,72" fill="none" stroke="#c86a80" stroke-width="3.0" stroke-linejoin="round" stroke-linecap="round" />
<polyline points="235,0 230,15 220,35 207,57 200,72" fill="none" stroke="#e892a2" stroke-width="2.2" stroke-linejoin="round" stroke-linecap="round" />
<polyline points="396,-3 390,10 393,25 402,40 412,57 418,62" fill="none" stroke="#c86a80" stroke-width="3.5999999999999996" stroke-linejoin="round" stroke-linecap="round" />
<polyline points="396,-3 390,10 393,25 402,40 412,57 418,62" fill="none" stroke="#e892a2" stroke-width="2.8" stroke-linejoin="round" stroke-linecap="round" />
<polyline points="136,322 147,362 160,390 168,402" fill="none" stroke="#f0a8b4" stroke-width="2.2" stroke-linejoin="round" stroke-linecap="round" stroke-linecap="butt" opacity="0.9"/>
<polyline points="160,418 170,405 185,390 190,360 197,340 212,335 235,352 245,356 285,357 293,357 297,342 302,325 310,307 317,292 327,277 350,260 367,247 385,242 397,230 405,210 418,207" fill="none" stroke="#c86a80" stroke-width="3.4000000000000004" stroke-linejoin="round" stroke-linecap="round" />
<polyline points="160,418 170,405 185,390 190,360 197,340 212,335 235,352 245,356 285,357 293,357 297,342 302,325 310,307 317,292 327,277 350,260 367,247 385,242 397,230 405,210 418,207" fill="none" stroke="#e892a2" stroke-width="2.6" stroke-linejoin="round" stroke-linecap="round" />
<polyline points="275,165 300,172 322,182" fill="none" stroke="#f0a8b4" stroke-width="2.6" stroke-linejoin="round" stroke-linecap="round" stroke-dasharray="4 2" stroke-linecap="butt"/>
<polyline points="322,182 350,186 370,195 385,200 400,202 418,207" fill="none" stroke="#c86a80" stroke-width="3.4000000000000004" stroke-linejoin="round" stroke-linecap="round" />
<polyline points="322,182 350,186 370,195 385,200 400,202 418,207" fill="none" stroke="#e892a2" stroke-width="2.6" stroke-linejoin="round" stroke-linecap="round" />
<polyline points="418,80 398,112 374.7,148 365.8,156.8 349.7,148 344.4,162 348,173" fill="none" stroke="#9c9c98" stroke-width="2.2" stroke-linejoin="round" stroke-linecap="round" />
<text x="113.5" y="18" font-size="12.3" fill="#333" stroke="#fff" stroke-width="2" paint-order="stroke" stroke-opacity="0.7" >West New York</text>
<text x="84.5" y="42" font-size="12.3" fill="#333" stroke="#fff" stroke-width="2" paint-order="stroke" stroke-opacity="0.7" >Union City</text>
<text x="88.8" y="79" font-size="12.3" fill="#333" stroke="#fff" stroke-width="2" paint-order="stroke" stroke-opacity="0.7" >Weehawken</text>
<text x="64" y="180" font-size="12.5" fill="#333" stroke="#fff" stroke-width="2" paint-order="stroke" stroke-opacity="0.7" >Hoboken</text>
<text x="13.5" y="263.5" font-size="12.6" fill="#333" stroke="#fff" stroke-width="2" paint-order="stroke" stroke-opacity="0.7" >Jersey City</text>
<text x="-14" y="0.5" font-size="12.3" fill="#111" stroke="#fff" stroke-width="2" paint-order="stroke" stroke-opacity="0.7" >Secaucus</text>
<text x="136" y="298" font-size="14.2" fill="#333" stroke="#fff" stroke-width="2" paint-order="stroke" stroke-opacity="0.7" >New York</text>
<text x="272" y="2" font-size="12.5" fill="#333" stroke="#fff" stroke-width="2" paint-order="stroke" stroke-opacity="0.7" >Manhattan</text>
<text x="200" y="77" font-size="9.5" fill="#a52a3a" font-style="italic" stroke="#fff" stroke-width="1.8" paint-order="stroke" stroke-opacity="0.8" text-anchor="middle">7</text>
<text x="160" y="182" font-size="9.5" fill="#a52a3a" font-style="italic" stroke="#fff" stroke-width="1.8" paint-order="stroke" stroke-opacity="0.8" text-anchor="middle">4</text>
<text x="163" y="265" font-size="9.5" fill="#a52a3a" font-style="italic" stroke="#fff" stroke-width="1.8" paint-order="stroke" stroke-opacity="0.8" text-anchor="middle">4</text>
<text x="355" y="21" font-size="9.5" fill="#a52a3a" font-style="italic" stroke="#fff" stroke-width="1.8" paint-order="stroke" stroke-opacity="0.8" text-anchor="middle">14</text>
<text x="349" y="33" font-size="9.5" fill="#a52a3a" font-style="italic" stroke="#fff" stroke-width="1.8" paint-order="stroke" stroke-opacity="0.8" text-anchor="middle">14</text>
<text x="330" y="88" font-size="9.5" fill="#a52a3a" font-style="italic" stroke="#fff" stroke-width="1.8" paint-order="stroke" stroke-opacity="0.8" text-anchor="middle">13</text>
<text x="307" y="119" font-size="9.5" fill="#a52a3a" font-style="italic" stroke="#fff" stroke-width="1.8" paint-order="stroke" stroke-opacity="0.8" text-anchor="middle">12</text>
<text x="292" y="141" font-size="9.5" fill="#a52a3a" font-style="italic" stroke="#fff" stroke-width="1.8" paint-order="stroke" stroke-opacity="0.8" text-anchor="middle">10</text>
<text x="277" y="160" font-size="9.5" fill="#a52a3a" font-style="italic" stroke="#fff" stroke-width="1.8" paint-order="stroke" stroke-opacity="0.8" text-anchor="middle">8</text>
<text x="268" y="178" font-size="9.5" fill="#a52a3a" font-style="italic" stroke="#fff" stroke-width="1.8" paint-order="stroke" stroke-opacity="0.8" text-anchor="middle">9</text>
<text x="260" y="201" font-size="9.5" fill="#a52a3a" font-style="italic" stroke="#fff" stroke-width="1.8" paint-order="stroke" stroke-opacity="0.8" text-anchor="middle">8</text>
<text x="268" y="237" font-size="9.5" fill="#a52a3a" font-style="italic" stroke="#fff" stroke-width="1.8" paint-order="stroke" stroke-opacity="0.8" text-anchor="middle">7</text>
<text x="259" y="262" font-size="9.5" fill="#a52a3a" font-style="italic" stroke="#fff" stroke-width="1.8" paint-order="stroke" stroke-opacity="0.8" text-anchor="middle">5</text>
<text x="256" y="286" font-size="9.5" fill="#a52a3a" font-style="italic" stroke="#fff" stroke-width="1.8" paint-order="stroke" stroke-opacity="0.8" text-anchor="middle">5</text>
<text x="243" y="303" font-size="9.5" fill="#a52a3a" font-style="italic" stroke="#fff" stroke-width="1.8" paint-order="stroke" stroke-opacity="0.8" text-anchor="middle">3</text>
<text x="195" y="311" font-size="9.5" fill="#a52a3a" font-style="italic" stroke="#fff" stroke-width="1.8" paint-order="stroke" stroke-opacity="0.8" text-anchor="middle">2</text>
<text x="177" y="320" font-size="9.5" fill="#a52a3a" font-style="italic" stroke="#fff" stroke-width="1.8" paint-order="stroke" stroke-opacity="0.8" text-anchor="middle">2</text>
<text x="139" y="309" font-size="9.5" fill="#a52a3a" font-style="italic" stroke="#fff" stroke-width="1.8" paint-order="stroke" stroke-opacity="0.8" text-anchor="middle">2</text>
<text x="139" y="318" font-size="9.5" fill="#a52a3a" font-style="italic" stroke="#fff" stroke-width="1.8" paint-order="stroke" stroke-opacity="0.8" text-anchor="middle">2</text>
<text x="157" y="336" font-size="9.5" fill="#a52a3a" font-style="italic" stroke="#fff" stroke-width="1.8" paint-order="stroke" stroke-opacity="0.8" text-anchor="middle">1</text>
<text x="201" y="342" font-size="9.5" fill="#a52a3a" font-style="italic" stroke="#fff" stroke-width="1.8" paint-order="stroke" stroke-opacity="0.8" text-anchor="middle">28A</text>
<text x="240" y="358" font-size="9.5" fill="#a52a3a" font-style="italic" stroke="#fff" stroke-width="1.8" paint-order="stroke" stroke-opacity="0.8" text-anchor="middle">29</text>
<text x="287" y="361" font-size="9.5" fill="#a52a3a" font-style="italic" stroke="#fff" stroke-width="1.8" paint-order="stroke" stroke-opacity="0.8" text-anchor="middle">30</text>
<text x="189" y="381" font-size="9.5" fill="#a52a3a" font-style="italic" stroke="#fff" stroke-width="1.8" paint-order="stroke" stroke-opacity="0.8" text-anchor="middle">27</text>
<text x="177" y="418" font-size="9.5" fill="#a52a3a" font-style="italic" stroke="#fff" stroke-width="1.8" paint-order="stroke" stroke-opacity="0.8" text-anchor="middle">26</text>
<text x="302" y="332" font-size="9.5" fill="#a52a3a" font-style="italic" stroke="#fff" stroke-width="1.8" paint-order="stroke" stroke-opacity="0.8" text-anchor="middle">31</text>
<text x="316" y="303" font-size="9.5" fill="#a52a3a" font-style="italic" stroke="#fff" stroke-width="1.8" paint-order="stroke" stroke-opacity="0.8" text-anchor="middle">32</text>
<text x="343" y="272" font-size="9.5" fill="#a52a3a" font-style="italic" stroke="#fff" stroke-width="1.8" paint-order="stroke" stroke-opacity="0.8" text-anchor="middle">33</text>
<text x="381" y="248" font-size="9.5" fill="#a52a3a" font-style="italic" stroke="#fff" stroke-width="1.8" paint-order="stroke" stroke-opacity="0.8" text-anchor="middle">34</text>
<text x="388" y="203" font-size="9.5" fill="#a52a3a" font-style="italic" stroke="#fff" stroke-width="1.8" paint-order="stroke" stroke-opacity="0.8" text-anchor="middle">15</text>
<text x="416" y="40" font-size="9.5" fill="#a52a3a" font-style="italic" stroke="#fff" stroke-width="1.8" paint-order="stroke" stroke-opacity="0.8" text-anchor="middle">45</text>
<text x="410" y="202" font-size="9.5" fill="#a52a3a" font-style="italic" stroke="#fff" stroke-width="1.8" paint-order="stroke" stroke-opacity="0.8" text-anchor="middle">35W</text>
<text x="412" y="215" font-size="9.5" fill="#a52a3a" font-style="italic" stroke="#fff" stroke-width="1.8" paint-order="stroke" stroke-opacity="0.8" text-anchor="middle">35</text>
<text x="403" y="226" font-size="9.5" fill="#a52a3a" font-style="italic" stroke="#fff" stroke-width="1.8" paint-order="stroke" stroke-opacity="0.8" text-anchor="middle">35A-B</text>
<text x="4" y="75" font-size="9.5" fill="#a52a3a" font-style="italic" stroke="#fff" stroke-width="1.8" paint-order="stroke" stroke-opacity="0.8" text-anchor="middle">18E</text>
<text x="5" y="88" font-size="9.5" fill="#a52a3a" font-style="italic" stroke="#fff" stroke-width="1.8" paint-order="stroke" stroke-opacity="0.8" text-anchor="middle">16E</text>
<text x="2" y="320" font-size="9.5" fill="#a52a3a" font-style="italic" stroke="#fff" stroke-width="1.8" paint-order="stroke" stroke-opacity="0.8" text-anchor="middle">8</text>
<circle cx="290" cy="106" r="1.3" fill="#000"/><circle cx="308" cy="116" r="0.9" fill="#000"/>
<path d="M155.4,322.7 L145.00,312.20 A14.85,14.85 0 1 1 165.80,312.20 Z" fill="#1c2e3c" opacity="0.6" transform="translate(2,1.5)" stroke="#1c2e3c" stroke-width="0.8" stroke-linejoin="round"/><path d="M155.4,322.7 L145.00,312.20 A14.85,14.85 0 1 1 165.80,312.20 Z" fill="#3b86d8" stroke="#3b86d8" stroke-width="0.8" stroke-linejoin="round"/><circle cx="155.4" cy="301.59999999999997" r="4.6" fill="#3178c6"/>
<path d="M184.7,257.3 L174.30,246.80 A14.85,14.85 0 1 1 195.10,246.80 Z" fill="#1c2e3c" opacity="0.6" transform="translate(2,1.5)" stroke="#1c2e3c" stroke-width="0.8" stroke-linejoin="round"/><path d="M184.7,257.3 L174.30,246.80 A14.85,14.85 0 1 1 195.10,246.80 Z" fill="#3b86d8" stroke="#3b86d8" stroke-width="0.8" stroke-linejoin="round"/><circle cx="184.7" cy="236.20000000000002" r="4.6" fill="#3178c6"/>
<path d="M203.9,234.5 L193.50,224.00 A14.85,14.85 0 1 1 214.30,224.00 Z" fill="#1c2e3c" opacity="0.6" transform="translate(2,1.5)" stroke="#1c2e3c" stroke-width="0.8" stroke-linejoin="round"/><path d="M203.9,234.5 L193.50,224.00 A14.85,14.85 0 1 1 214.30,224.00 Z" fill="#3b86d8" stroke="#3b86d8" stroke-width="0.8" stroke-linejoin="round"/><circle cx="203.9" cy="213.4" r="4.6" fill="#3178c6"/>
<path d="M215.4,186.2 L205.00,175.70 A14.85,14.85 0 1 1 225.80,175.70 Z" fill="#1c2e3c" opacity="0.6" transform="translate(2,1.5)" stroke="#1c2e3c" stroke-width="0.8" stroke-linejoin="round"/><path d="M215.4,186.2 L205.00,175.70 A14.85,14.85 0 1 1 225.80,175.70 Z" fill="#3b86d8" stroke="#3b86d8" stroke-width="0.8" stroke-linejoin="round"/><circle cx="215.4" cy="165.1" r="4.6" fill="#3178c6"/>
<path d="M260.5,107.6 L250.10,97.10 A14.85,14.85 0 1 1 270.90,97.10 Z" fill="#1c2e3c" opacity="0.6" transform="translate(2,1.5)" stroke="#1c2e3c" stroke-width="0.8" stroke-linejoin="round"/><path d="M260.5,107.6 L250.10,97.10 A14.85,14.85 0 1 1 270.90,97.10 Z" fill="#3b86d8" stroke="#3b86d8" stroke-width="0.8" stroke-linejoin="round"/><circle cx="260.5" cy="86.5" r="4.6" fill="#3178c6"/>
<path d="M194.4,177.7 L184.00,167.20 A14.85,14.85 0 1 1 204.80,167.20 Z" fill="#1c2e3c" opacity="0.6" transform="translate(2,1.5)" stroke="#1c2e3c" stroke-width="0.8" stroke-linejoin="round"/><path d="M194.4,177.7 L184.00,167.20 A14.85,14.85 0 1 1 204.80,167.20 Z" fill="#3b86d8" stroke="#3b86d8" stroke-width="0.8" stroke-linejoin="round"/><circle cx="194.4" cy="156.6" r="4.6" fill="#3178c6"/>
<path d="M158.1,254.2 L147.70,243.70 A14.85,14.85 0 1 1 168.50,243.70 Z" fill="#1c2e3c" opacity="0.6" transform="translate(2,1.5)" stroke="#1c2e3c" stroke-width="0.8" stroke-linejoin="round"/><path d="M158.1,254.2 L147.70,243.70 A14.85,14.85 0 1 1 168.50,243.70 Z" fill="#3b86d8" stroke="#3b86d8" stroke-width="0.8" stroke-linejoin="round"/><circle cx="158.1" cy="233.1" r="4.6" fill="#3178c6"/><g transform="translate(0,0)"><rect x="11.2" y="10.9" width="24.7" height="50.4" fill="#4f86e6" opacity="0.7"/><rect x="11.2" y="35.9" width="24.7" height="0.8" fill="#fff" opacity="0.7"/><text x="23.4" y="29.3" font-size="17" font-weight="bold" fill="#fff" stroke="#fff" stroke-width="0.8" text-anchor="middle" font-family="Liberation Sans, sans-serif">+</text><text x="23.4" y="55.3" font-size="17" font-weight="bold" fill="#fff" stroke="#fff" stroke-width="0.9" text-anchor="middle" font-family="Liberation Sans, sans-serif">−</text><rect x="248" y="396" width="170" height="22" fill="#fff" opacity="0.75"/><text x="252.4" y="411.6" font-size="11.45" fill="#111" font-family="Liberation Sans, sans-serif">© <tspan fill="#1a6fc4" text-decoration="underline">OpenStreetMap</tspan> contributors.</text></g></svg></div>
<div class="t " style="left:625.3px;top:550px;font-size:16.3px;color:#f2f230;">Loby Matise</div>
<div class="t " style="left:723.685015625px;top:550px;font-size:16.3px;color:#c4c4c4;">Zinc Building</div>
<div class="t " style="left:646.3px;top:569px;font-size:14.2px;color:#bdbdbd;">475 Greenwich Street, New York, NY 10013</div>
<div class="a" style="left:624px;top:587px;width:433px;height:1px;background:#b4b4b4;"></div>
<div class="t " style="left:625.3px;top:590px;font-size:16.3px;color:#f2f230;">Joe Martin</div>
<div class="t " style="left:711.898078125px;top:590px;font-size:16.3px;color:#c4c4c4;">Doughnut Plant</div>
<div class="t " style="left:646.3px;top:609px;font-size:14.2px;color:#bdbdbd;">220 West 23rd Street, New York, NY 10011</div>
<div class="a" style="left:624px;top:627px;width:433px;height:1px;background:#b4b4b4;"></div>
<div class="t " style="left:625.3px;top:630px;font-size:16.3px;color:#f2f230;">Susi Sanna</div>
<div class="t " style="left:719.171953125px;top:630px;font-size:16.3px;color:#c4c4c4;">Tiffany</div>
<div class="t " style="left:646.3px;top:649px;font-size:14.2px;color:#bdbdbd;">727 5th Avenue, New York, NY 10022</div>
<div class="a" style="left:624px;top:667px;width:433px;height:1px;background:#b4b4b4;"></div>
<div class="a" style="left:1108px;top:53px;width:100px;height:630px;background:#fff;border:1px solid #828790;box-sizing:border-box"></div>
<div class="a" style="left:1109px;top:54px;width:89px;height:100px;overflow:hidden">
<svg class="a" style="left:0;top:0" width="60" height="100" viewBox="0 0 60 100"><path d="M5.5,13 V79 M6,27.5 H22 M6,44.5 H12 M6,61.5 H12 M6,78.5 H12" stroke="#8a8a8a" stroke-width="1" stroke-dasharray="1 1" fill="none"/><rect x="1.5" y="4.5" width="8" height="8" fill="#fff" stroke="#111" stroke-width="1"/><path d="M3.2,8.5 H7.8" stroke="#111" stroke-width="1.1"/><rect x="12.5" y="38.0" width="8" height="8" fill="#fff" stroke="#111" stroke-width="1"/><path d="M14.2,42.0 H18.8" stroke="#111" stroke-width="1.1"/><path d="M16.5,39.7 V44.3" stroke="#111" stroke-width="1.1"/><rect x="12.5" y="55.0" width="8" height="8" fill="#fff" stroke="#111" stroke-width="1"/><path d="M14.2,59.0 H18.8" stroke="#111" stroke-width="1.1"/><path d="M16.5,56.7 V61.3" stroke="#111" stroke-width="1.1"/><rect x="12.5" y="72.0" width="8" height="8" fill="#fff" stroke="#111" stroke-width="1"/><path d="M14.2,76.0 H18.8" stroke="#111" stroke-width="1.1"/><path d="M16.5,73.7 V78.3" stroke="#111" stroke-width="1.1"/><path d="M13,3.5 h6 v-2.5 h5.5 v13 h-5.5 v-2.5 h-6 z" fill="#e4ecff" stroke="#8fa8e8" stroke-width="0.9"/><g fill="#fff" stroke="#2a48d0" stroke-width="1.1"><rect x="14.5" y="6" width="2.6" height="2.6"/><rect x="20" y="2.2" width="2.6" height="2.6"/><rect x="20" y="6" width="2.6" height="2.6"/><rect x="20" y="9.9" width="2.6" height="2.6"/></g><path d="M17.1,7.3 H20 M18.6,3.5 V11.2 M18.6,3.5 H20 M18.6,11.2 H20" stroke="#2a48d0" stroke-width="0.8" fill="none"/><rect x="25.5" y="19.5" width="11" height="12" rx="2" fill="#f4f4ff" stroke="#777" stroke-width="1"/><circle cx="31" cy="25.5" r="3.6" fill="none" stroke="#8a90d8" stroke-width="0.9"/><circle cx="31" cy="25.5" r="1.9" fill="#3038c0"/><rect x="25.5" y="36.5" width="11" height="11" rx="2.2" fill="#cfe8c6" stroke="#2e8b2e" stroke-width="1.1"/><path d="M28.8,39 h4.4 v3.4 h-4.4 z M27.8,42.6 h6.4 M31,42.6 v3.2" fill="none" stroke="#1d6a1d" stroke-width="1.1"/><path d="M28.5,53.5 H36.5 V65.5 H25.5 V56.5 Z" fill="#fff" stroke="#222" stroke-width="1"/><path d="M28.5,53.5 V56.5 H25.5" fill="none" stroke="#222" stroke-width="0.8"/><path d="M28.5,70.5 H36.5 V82.5 H25.5 V73.5 Z" fill="#fff" stroke="#222" stroke-width="1"/><path d="M28.5,70.5 V73.5 H25.5" fill="none" stroke="#222" stroke-width="0.8"/></svg>
<div class="t" style="left:30px;top:2px;font-size:11.8px;color:#111;transform:scaleX(0.9425);transform-origin:0 0;">Sources</div>
<div class="t" style="left:41.80000000000001px;top:20px;font-size:11.8px;color:#111;transform:scaleX(0.9065);transform-origin:0 0;">$MT_GEOLOCATION</div>
<div class="t" style="left:41.80000000000001px;top:36px;font-size:11.8px;color:#111;transform:scaleX(0.8282);transform-origin:0 0;">$PERSISTENT</div>
<div class="t" style="left:41.80000000000001px;top:53px;font-size:11.8px;color:#111;transform:scaleX(0.8927);transform-origin:0 0;">$TODO</div>
<div class="t" style="left:41.80000000000001px;top:70px;font-size:11.8px;color:#111;transform:scaleX(0.8158);transform-origin:0 0;">$USER</div>
<div class="t" style="left:81.20000000000005px;top:70px;font-size:11.8px;color:#777;transform:scaleX(1.0453);transform-origin:0 0;">&lt;Client only&gt;</div>
</div>
</div>
</body></html>
